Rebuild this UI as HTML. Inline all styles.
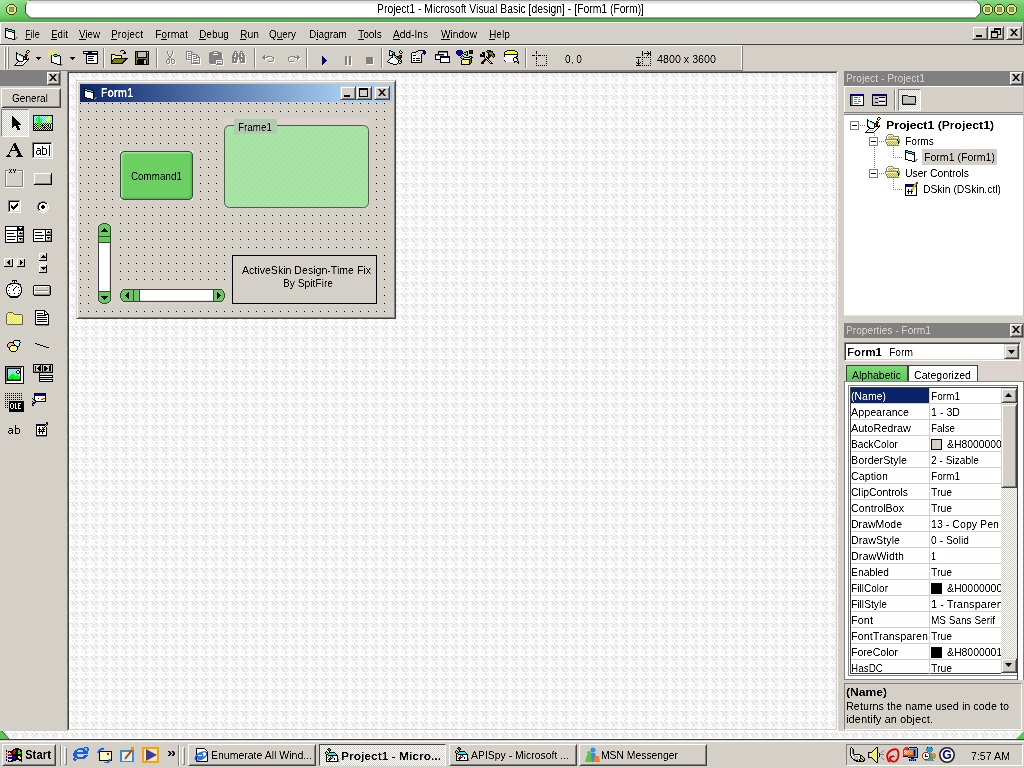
<!DOCTYPE html>
<html><head><meta charset="utf-8">
<style>
*{margin:0;padding:0;box-sizing:border-box}
html,body{width:1024px;height:768px;overflow:hidden;background:#D4D0C8;font-family:"Liberation Sans",sans-serif;font-size:11px;color:#000;position:relative}
.a{position:absolute;display:block}
.t{position:absolute;white-space:pre;filter:url(#crisp)}
</style></head>
<body>
<svg class="a" style="left:0;top:0" width="1024" height="768" shape-rendering="crispEdges"><defs>
<filter id="crisp" x="-20%" y="-60%" width="140%" height="220%"><feComponentTransfer><feFuncA type="table" tableValues="0 0 0.5 1 1"/></feComponentTransfer></filter>
<pattern id="tex" patternUnits="userSpaceOnUse" width="10" height="11"><rect width="10" height="11" fill="#FFFFFF"/><rect x='4' y='5' width='1' height='1' fill='#E2E2E2'/><rect x='4' y='6' width='1' height='1' fill='#E2E2E2'/><rect x='0' y='7' width='3' height='1' fill='#E2E2E2'/><rect x='5' y='7' width='3' height='1' fill='#E2E2E2'/><rect x='2' y='8' width='2' height='1' fill='#E2E2E2'/><rect x='5' y='8' width='2' height='1' fill='#E2E2E2'/><rect x='7' y='8' width='2' height='1' fill='#EEEEEE'/><rect x='1' y='9' width='1' height='1' fill='#E2E2E2'/><rect x='3' y='9' width='2' height='1' fill='#E2E2E2'/><rect x='6' y='9' width='3' height='1' fill='#EEEEEE'/><rect x='2' y='10' width='2' height='1' fill='#E2E2E2'/><rect x='5' y='10' width='2' height='1' fill='#EEEEEE'/><rect x='9' y='10' width='1' height='1' fill='#EEEEEE'/><rect x='3' y='0' width='2' height='1' fill='#E2E2E2'/><rect x='5' y='0' width='3' height='1' fill='#EEEEEE'/><rect x='1' y='1' width='1' height='1' fill='#EEEEEE'/><rect x='2' y='2' width='1' height='1' fill='#EEEEEE'/><rect x='5' y='2' width='2' height='1' fill='#E2E2E2'/><rect x='8' y='2' width='1' height='1' fill='#EEEEEE'/><rect x='2' y='3' width='1' height='1' fill='#EEEEEE'/><rect x='5' y='3' width='2' height='1' fill='#E2E2E2'/><rect x='8' y='3' width='1' height='1' fill='#EEEEEE'/><rect x='6' y='4' width='2' height='1' fill='#EEEEEE'/></pattern>
<pattern id="dots" patternUnits="userSpaceOnUse" width="8" height="8"><rect x="0" y="1" width="1" height="1" fill="#000"/></pattern>
<pattern id="dither" patternUnits="userSpaceOnUse" width="2" height="2"><rect width="2" height="2" fill="#D4D0C8"/><rect width="1" height="1" fill="#fff"/><rect x="1" y="1" width="1" height="1" fill="#fff"/></pattern>
<pattern id="ftex" patternUnits="userSpaceOnUse" width="6" height="6"><rect width="6" height="6" fill="#A8E4A6"/><path d="M0 5h1v1H0zM2 3h1v1H2zM4 1h1v1H4z" fill="#A0D89E"/></pattern>
<radialGradient id="tglow" cx="0" cy="0" r="1" gradientUnits="objectBoundingBox" gradientTransform="scale(1,1)"><stop offset="0" stop-color="#A8E8A0" stop-opacity="0.9"/><stop offset="1" stop-color="#A8E8A0" stop-opacity="0"/></radialGradient>
<linearGradient id="tgreen" x1="0" y1="0" x2="0" y2="1"><stop offset="0" stop-color="#8AD88A"/><stop offset="0.25" stop-color="#6CCC66"/><stop offset="0.75" stop-color="#62C65C"/><stop offset="1" stop-color="#4EA846"/></linearGradient>
<linearGradient id="bgreen" x1="0" y1="0" x2="0" y2="1"><stop offset="0" stop-color="#7ED878"/><stop offset="0.6" stop-color="#6ACE64"/><stop offset="1" stop-color="#58B852"/></linearGradient>
</defs><rect width="1024" height="768" fill="url(#tex)"/></svg>
<svg class="a" style="left:0px;top:0px;" width="1024" height="22" viewBox="0 0 1024 22" shape-rendering="crispEdges"><rect width="1024" height="22" fill="url(#tgreen)"/>
<rect width="30" height="22" fill="url(#tglow)"/>
<path d="M30 0H975L980 5V13L975 18H30L25 13V5Z" fill="#fff" stroke="#404040" stroke-width="1" shape-rendering="auto" transform="translate(0.5,0)"/>
<rect x="27" y="1" width="950" height="2" fill="#E2E2E2"/><rect x="27" y="3" width="950" height="1" fill="#F2F2F2"/>
</svg>
<svg class="a" style="left:6px;top:4px;" width="11" height="11" viewBox="0 0 11 11" shape-rendering="crispEdges"><rect x="3" y="0" width="5" height="1" fill="#38384A"/><rect x="2" y="1" width="1" height="1" fill="#38384A"/><rect x="3" y="1" width="5" height="1" fill="#FFE850"/><rect x="8" y="1" width="1" height="1" fill="#38384A"/><rect x="1" y="2" width="1" height="1" fill="#38384A"/><rect x="2" y="2" width="7" height="1" fill="#FFE850"/><rect x="9" y="2" width="1" height="1" fill="#38384A"/><rect x="0" y="3" width="1" height="1" fill="#38384A"/><rect x="1" y="3" width="2" height="1" fill="#FFE850"/><rect x="3" y="3" width="5" height="1" fill="#7878A0"/><rect x="8" y="3" width="2" height="1" fill="#FFE850"/><rect x="10" y="3" width="1" height="1" fill="#38384A"/><rect x="0" y="4" width="1" height="1" fill="#38384A"/><rect x="1" y="4" width="2" height="1" fill="#FFE850"/><rect x="3" y="4" width="1" height="1" fill="#7878A0"/><rect x="4" y="4" width="3" height="1" fill="#4CD84C"/><rect x="7" y="4" width="1" height="1" fill="#7878A0"/><rect x="8" y="4" width="2" height="1" fill="#FFE850"/><rect x="10" y="4" width="1" height="1" fill="#38384A"/><rect x="0" y="5" width="1" height="1" fill="#38384A"/><rect x="1" y="5" width="2" height="1" fill="#FFE850"/><rect x="3" y="5" width="1" height="1" fill="#7878A0"/><rect x="4" y="5" width="3" height="1" fill="#4CD84C"/><rect x="7" y="5" width="1" height="1" fill="#7878A0"/><rect x="8" y="5" width="2" height="1" fill="#FFE850"/><rect x="10" y="5" width="1" height="1" fill="#38384A"/><rect x="0" y="6" width="1" height="1" fill="#38384A"/><rect x="1" y="6" width="2" height="1" fill="#FFE850"/><rect x="3" y="6" width="1" height="1" fill="#7878A0"/><rect x="4" y="6" width="3" height="1" fill="#4CD84C"/><rect x="7" y="6" width="1" height="1" fill="#7878A0"/><rect x="8" y="6" width="2" height="1" fill="#FFE850"/><rect x="10" y="6" width="1" height="1" fill="#38384A"/><rect x="0" y="7" width="1" height="1" fill="#38384A"/><rect x="1" y="7" width="2" height="1" fill="#FFE850"/><rect x="3" y="7" width="5" height="1" fill="#7878A0"/><rect x="8" y="7" width="2" height="1" fill="#FFE850"/><rect x="10" y="7" width="1" height="1" fill="#38384A"/><rect x="1" y="8" width="1" height="1" fill="#38384A"/><rect x="2" y="8" width="7" height="1" fill="#FFE850"/><rect x="9" y="8" width="1" height="1" fill="#38384A"/><rect x="2" y="9" width="1" height="1" fill="#38384A"/><rect x="3" y="9" width="5" height="1" fill="#FFE850"/><rect x="8" y="9" width="1" height="1" fill="#38384A"/><rect x="3" y="10" width="5" height="1" fill="#38384A"/></svg>
<svg class="a" style="left:982px;top:4px;" width="11" height="11" viewBox="0 0 11 11" shape-rendering="crispEdges"><rect x="3" y="0" width="5" height="1" fill="#38384A"/><rect x="2" y="1" width="1" height="1" fill="#38384A"/><rect x="3" y="1" width="5" height="1" fill="#FFE850"/><rect x="8" y="1" width="1" height="1" fill="#38384A"/><rect x="1" y="2" width="1" height="1" fill="#38384A"/><rect x="2" y="2" width="7" height="1" fill="#FFE850"/><rect x="9" y="2" width="1" height="1" fill="#38384A"/><rect x="0" y="3" width="1" height="1" fill="#38384A"/><rect x="1" y="3" width="2" height="1" fill="#FFE850"/><rect x="3" y="3" width="5" height="1" fill="#7878A0"/><rect x="8" y="3" width="2" height="1" fill="#FFE850"/><rect x="10" y="3" width="1" height="1" fill="#38384A"/><rect x="0" y="4" width="1" height="1" fill="#38384A"/><rect x="1" y="4" width="2" height="1" fill="#FFE850"/><rect x="3" y="4" width="1" height="1" fill="#7878A0"/><rect x="4" y="4" width="3" height="1" fill="#4CD84C"/><rect x="7" y="4" width="1" height="1" fill="#7878A0"/><rect x="8" y="4" width="2" height="1" fill="#FFE850"/><rect x="10" y="4" width="1" height="1" fill="#38384A"/><rect x="0" y="5" width="1" height="1" fill="#38384A"/><rect x="1" y="5" width="2" height="1" fill="#FFE850"/><rect x="3" y="5" width="1" height="1" fill="#7878A0"/><rect x="4" y="5" width="3" height="1" fill="#4CD84C"/><rect x="7" y="5" width="1" height="1" fill="#7878A0"/><rect x="8" y="5" width="2" height="1" fill="#FFE850"/><rect x="10" y="5" width="1" height="1" fill="#38384A"/><rect x="0" y="6" width="1" height="1" fill="#38384A"/><rect x="1" y="6" width="2" height="1" fill="#FFE850"/><rect x="3" y="6" width="1" height="1" fill="#7878A0"/><rect x="4" y="6" width="3" height="1" fill="#4CD84C"/><rect x="7" y="6" width="1" height="1" fill="#7878A0"/><rect x="8" y="6" width="2" height="1" fill="#FFE850"/><rect x="10" y="6" width="1" height="1" fill="#38384A"/><rect x="0" y="7" width="1" height="1" fill="#38384A"/><rect x="1" y="7" width="2" height="1" fill="#FFE850"/><rect x="3" y="7" width="5" height="1" fill="#7878A0"/><rect x="8" y="7" width="2" height="1" fill="#FFE850"/><rect x="10" y="7" width="1" height="1" fill="#38384A"/><rect x="1" y="8" width="1" height="1" fill="#38384A"/><rect x="2" y="8" width="7" height="1" fill="#FFE850"/><rect x="9" y="8" width="1" height="1" fill="#38384A"/><rect x="2" y="9" width="1" height="1" fill="#38384A"/><rect x="3" y="9" width="5" height="1" fill="#FFE850"/><rect x="8" y="9" width="1" height="1" fill="#38384A"/><rect x="3" y="10" width="5" height="1" fill="#38384A"/></svg>
<svg class="a" style="left:994px;top:4px;" width="11" height="11" viewBox="0 0 11 11" shape-rendering="crispEdges"><rect x="3" y="0" width="5" height="1" fill="#38384A"/><rect x="2" y="1" width="1" height="1" fill="#38384A"/><rect x="3" y="1" width="5" height="1" fill="#FFE850"/><rect x="8" y="1" width="1" height="1" fill="#38384A"/><rect x="1" y="2" width="1" height="1" fill="#38384A"/><rect x="2" y="2" width="7" height="1" fill="#FFE850"/><rect x="9" y="2" width="1" height="1" fill="#38384A"/><rect x="0" y="3" width="1" height="1" fill="#38384A"/><rect x="1" y="3" width="2" height="1" fill="#FFE850"/><rect x="3" y="3" width="5" height="1" fill="#7878A0"/><rect x="8" y="3" width="2" height="1" fill="#FFE850"/><rect x="10" y="3" width="1" height="1" fill="#38384A"/><rect x="0" y="4" width="1" height="1" fill="#38384A"/><rect x="1" y="4" width="2" height="1" fill="#FFE850"/><rect x="3" y="4" width="1" height="1" fill="#7878A0"/><rect x="4" y="4" width="3" height="1" fill="#4CD84C"/><rect x="7" y="4" width="1" height="1" fill="#7878A0"/><rect x="8" y="4" width="2" height="1" fill="#FFE850"/><rect x="10" y="4" width="1" height="1" fill="#38384A"/><rect x="0" y="5" width="1" height="1" fill="#38384A"/><rect x="1" y="5" width="2" height="1" fill="#FFE850"/><rect x="3" y="5" width="1" height="1" fill="#7878A0"/><rect x="4" y="5" width="3" height="1" fill="#4CD84C"/><rect x="7" y="5" width="1" height="1" fill="#7878A0"/><rect x="8" y="5" width="2" height="1" fill="#FFE850"/><rect x="10" y="5" width="1" height="1" fill="#38384A"/><rect x="0" y="6" width="1" height="1" fill="#38384A"/><rect x="1" y="6" width="2" height="1" fill="#FFE850"/><rect x="3" y="6" width="1" height="1" fill="#7878A0"/><rect x="4" y="6" width="3" height="1" fill="#4CD84C"/><rect x="7" y="6" width="1" height="1" fill="#7878A0"/><rect x="8" y="6" width="2" height="1" fill="#FFE850"/><rect x="10" y="6" width="1" height="1" fill="#38384A"/><rect x="0" y="7" width="1" height="1" fill="#38384A"/><rect x="1" y="7" width="2" height="1" fill="#FFE850"/><rect x="3" y="7" width="5" height="1" fill="#7878A0"/><rect x="8" y="7" width="2" height="1" fill="#FFE850"/><rect x="10" y="7" width="1" height="1" fill="#38384A"/><rect x="1" y="8" width="1" height="1" fill="#38384A"/><rect x="2" y="8" width="7" height="1" fill="#FFE850"/><rect x="9" y="8" width="1" height="1" fill="#38384A"/><rect x="2" y="9" width="1" height="1" fill="#38384A"/><rect x="3" y="9" width="5" height="1" fill="#FFE850"/><rect x="8" y="9" width="1" height="1" fill="#38384A"/><rect x="3" y="10" width="5" height="1" fill="#38384A"/></svg>
<svg class="a" style="left:1006px;top:4px;" width="11" height="11" viewBox="0 0 11 11" shape-rendering="crispEdges"><rect x="3" y="0" width="5" height="1" fill="#38384A"/><rect x="2" y="1" width="1" height="1" fill="#38384A"/><rect x="3" y="1" width="5" height="1" fill="#FFE850"/><rect x="8" y="1" width="1" height="1" fill="#38384A"/><rect x="1" y="2" width="1" height="1" fill="#38384A"/><rect x="2" y="2" width="7" height="1" fill="#FFE850"/><rect x="9" y="2" width="1" height="1" fill="#38384A"/><rect x="0" y="3" width="1" height="1" fill="#38384A"/><rect x="1" y="3" width="2" height="1" fill="#FFE850"/><rect x="3" y="3" width="5" height="1" fill="#7878A0"/><rect x="8" y="3" width="2" height="1" fill="#FFE850"/><rect x="10" y="3" width="1" height="1" fill="#38384A"/><rect x="0" y="4" width="1" height="1" fill="#38384A"/><rect x="1" y="4" width="2" height="1" fill="#FFE850"/><rect x="3" y="4" width="1" height="1" fill="#7878A0"/><rect x="4" y="4" width="3" height="1" fill="#4CD84C"/><rect x="7" y="4" width="1" height="1" fill="#7878A0"/><rect x="8" y="4" width="2" height="1" fill="#FFE850"/><rect x="10" y="4" width="1" height="1" fill="#38384A"/><rect x="0" y="5" width="1" height="1" fill="#38384A"/><rect x="1" y="5" width="2" height="1" fill="#FFE850"/><rect x="3" y="5" width="1" height="1" fill="#7878A0"/><rect x="4" y="5" width="3" height="1" fill="#4CD84C"/><rect x="7" y="5" width="1" height="1" fill="#7878A0"/><rect x="8" y="5" width="2" height="1" fill="#FFE850"/><rect x="10" y="5" width="1" height="1" fill="#38384A"/><rect x="0" y="6" width="1" height="1" fill="#38384A"/><rect x="1" y="6" width="2" height="1" fill="#FFE850"/><rect x="3" y="6" width="1" height="1" fill="#7878A0"/><rect x="4" y="6" width="3" height="1" fill="#4CD84C"/><rect x="7" y="6" width="1" height="1" fill="#7878A0"/><rect x="8" y="6" width="2" height="1" fill="#FFE850"/><rect x="10" y="6" width="1" height="1" fill="#38384A"/><rect x="0" y="7" width="1" height="1" fill="#38384A"/><rect x="1" y="7" width="2" height="1" fill="#FFE850"/><rect x="3" y="7" width="5" height="1" fill="#7878A0"/><rect x="8" y="7" width="2" height="1" fill="#FFE850"/><rect x="10" y="7" width="1" height="1" fill="#38384A"/><rect x="1" y="8" width="1" height="1" fill="#38384A"/><rect x="2" y="8" width="7" height="1" fill="#FFE850"/><rect x="9" y="8" width="1" height="1" fill="#38384A"/><rect x="2" y="9" width="1" height="1" fill="#38384A"/><rect x="3" y="9" width="5" height="1" fill="#FFE850"/><rect x="8" y="9" width="1" height="1" fill="#38384A"/><rect x="3" y="10" width="5" height="1" fill="#38384A"/></svg>
<div class="t" style="left:377px;top:2.84px;font-size:12px;line-height:12px;color:#000;transform:scaleX(0.8654);transform-origin:0 0;">Project1 - Microsoft Visual Basic [design] - [Form1 (Form)]</div>
<div class="a" style="left:0px;top:22px;width:1024px;height:23px;background:#D4D0C8;border-top:1px solid #fff;border-left:1px solid #fff;border-bottom:1px solid #808080"></div>
<div class="a" style="left:0px;top:44px;width:1024px;height:1px;background:#404040"></div>
<svg class="a" style="left:5px;top:28px;" width="13" height="12" viewBox="0 0 13 12" shape-rendering="crispEdges"><rect x="0" y="0" width="3" height="1" fill="#000000"/><rect x="0" y="1" width="1" height="1" fill="#000000"/><rect x="1" y="1" width="2" height="1" fill="#00FFFF"/><rect x="3" y="1" width="4" height="1" fill="#000000"/><rect x="0" y="2" width="3" height="1" fill="#000000"/><rect x="3" y="2" width="4" height="1" fill="#00FFFF"/><rect x="7" y="2" width="3" height="1" fill="#000000"/><rect x="0" y="3" width="1" height="1" fill="#000000"/><rect x="1" y="3" width="2" height="1" fill="#FFFFFF"/><rect x="3" y="3" width="4" height="1" fill="#000000"/><rect x="7" y="3" width="2" height="1" fill="#00FFFF"/><rect x="9" y="3" width="1" height="1" fill="#000000"/><rect x="0" y="4" width="1" height="1" fill="#000000"/><rect x="1" y="4" width="6" height="1" fill="#FFFFFF"/><rect x="7" y="4" width="3" height="1" fill="#000000"/><rect x="0" y="5" width="1" height="1" fill="#000000"/><rect x="1" y="5" width="8" height="1" fill="#FFFFFF"/><rect x="9" y="5" width="1" height="1" fill="#000000"/><rect x="0" y="6" width="1" height="1" fill="#000000"/><rect x="1" y="6" width="8" height="1" fill="#FFFFFF"/><rect x="9" y="6" width="1" height="1" fill="#000000"/><rect x="0" y="7" width="1" height="1" fill="#000000"/><rect x="1" y="7" width="8" height="1" fill="#FFFFFF"/><rect x="9" y="7" width="1" height="1" fill="#000000"/><rect x="0" y="8" width="1" height="1" fill="#000000"/><rect x="1" y="8" width="8" height="1" fill="#FFFFFF"/><rect x="9" y="8" width="1" height="1" fill="#000000"/><rect x="0" y="9" width="3" height="1" fill="#000000"/><rect x="3" y="9" width="6" height="1" fill="#FFFFFF"/><rect x="9" y="9" width="1" height="1" fill="#000000"/><rect x="11" y="9" width="2" height="1" fill="#808080"/><rect x="3" y="10" width="4" height="1" fill="#000000"/><rect x="7" y="10" width="2" height="1" fill="#FFFFFF"/><rect x="9" y="10" width="1" height="1" fill="#000000"/><rect x="10" y="10" width="2" height="1" fill="#808080"/><rect x="7" y="11" width="3" height="1" fill="#000000"/><rect x="10" y="11" width="1" height="1" fill="#808080"/></svg>
<div class="t" style="left:25px;top:28.69px;font-size:11px;line-height:11px;color:#000;transform:scaleX(0.8458);transform-origin:0 0;">File</div>
<div class="t" style="left:51px;top:28.69px;font-size:11px;line-height:11px;color:#000;transform:scaleX(0.8962);transform-origin:0 0;">Edit</div>
<div class="t" style="left:79px;top:28.69px;font-size:11px;line-height:11px;color:#000;transform:scaleX(0.8877);transform-origin:0 0;">View</div>
<div class="t" style="left:111px;top:28.69px;font-size:11px;line-height:11px;color:#000;transform:scaleX(0.9343);transform-origin:0 0;">Project</div>
<div class="t" style="left:155px;top:28.69px;font-size:11px;line-height:11px;color:#000;transform:scaleX(0.9471);transform-origin:0 0;">Format</div>
<div class="t" style="left:199px;top:28.69px;font-size:11px;line-height:11px;color:#000;transform:scaleX(0.9253);transform-origin:0 0;">Debug</div>
<div class="t" style="left:240px;top:28.69px;font-size:11px;line-height:11px;color:#000;transform:scaleX(0.9412);transform-origin:0 0;">Run</div>
<div class="t" style="left:269px;top:28.69px;font-size:11px;line-height:11px;color:#000;transform:scaleX(0.9009);transform-origin:0 0;">Query</div>
<div class="t" style="left:309px;top:28.69px;font-size:11px;line-height:11px;color:#000;transform:scaleX(0.9139);transform-origin:0 0;">Diagram</div>
<div class="t" style="left:358px;top:28.69px;font-size:11px;line-height:11px;color:#000;transform:scaleX(0.9343);transform-origin:0 0;">Tools</div>
<div class="t" style="left:393px;top:28.69px;font-size:11px;line-height:11px;color:#000;transform:scaleX(0.9230);transform-origin:0 0;">Add-Ins</div>
<div class="t" style="left:441px;top:28.69px;font-size:11px;line-height:11px;color:#000;transform:scaleX(0.9201);transform-origin:0 0;">Window</div>
<div class="t" style="left:489px;top:28.69px;font-size:11px;line-height:11px;color:#000;transform:scaleX(0.9282);transform-origin:0 0;">Help</div>
<div class="a" style="left:25px;top:39px;width:6px;height:1px;background:#000"></div>
<div class="a" style="left:51px;top:39px;width:6px;height:1px;background:#000"></div>
<div class="a" style="left:79px;top:39px;width:7px;height:1px;background:#000"></div>
<div class="a" style="left:111px;top:39px;width:6px;height:1px;background:#000"></div>
<div class="a" style="left:161px;top:39px;width:6px;height:1px;background:#000"></div>
<div class="a" style="left:199px;top:39px;width:7px;height:1px;background:#000"></div>
<div class="a" style="left:240px;top:39px;width:6px;height:1px;background:#000"></div>
<div class="a" style="left:277px;top:39px;width:6px;height:1px;background:#000"></div>
<div class="a" style="left:316px;top:39px;width:2px;height:1px;background:#000"></div>
<div class="a" style="left:358px;top:39px;width:6px;height:1px;background:#000"></div>
<div class="a" style="left:393px;top:39px;width:7px;height:1px;background:#000"></div>
<div class="a" style="left:441px;top:39px;width:9px;height:1px;background:#000"></div>
<div class="a" style="left:489px;top:39px;width:6px;height:1px;background:#000"></div>
<div class="a" style="left:972px;top:26px;width:16px;height:14px;background:#D4D0C8;border-style:solid;border-width:1px;border-color:#D4D0C8 #404040 #404040 #D4D0C8;box-shadow:inset 1px 1px 0 #FFFFFF,inset -1px -1px 0 #808080"></div>
<div class="a" style="left:988px;top:26px;width:16px;height:14px;background:#D4D0C8;border-style:solid;border-width:1px;border-color:#D4D0C8 #404040 #404040 #D4D0C8;box-shadow:inset 1px 1px 0 #FFFFFF,inset -1px -1px 0 #808080"></div>
<div class="a" style="left:1006px;top:26px;width:16px;height:14px;background:#D4D0C8;border-style:solid;border-width:1px;border-color:#D4D0C8 #404040 #404040 #D4D0C8;box-shadow:inset 1px 1px 0 #FFFFFF,inset -1px -1px 0 #808080"></div>
<div class="a" style="left:976px;top:35px;width:6px;height:2px;background:#000"></div>
<svg class="a" style="left:991px;top:28px;" width="10" height="10" viewBox="0 0 10 10" shape-rendering="crispEdges"><rect x="3" y="0" width="6" height="6" fill="none" stroke="#000" transform="translate(0.5,0.5)"/><rect x="3" y="0" width="6" height="2" fill="#000"/><rect x="0" y="3" width="6" height="6" fill="#D4D0C8" stroke="#000" transform="translate(0.5,0.5)"/><rect x="0" y="3" width="7" height="2" fill="#000"/></svg>
<svg class="a" style="left:1010px;top:29px;" width="9" height="8" viewBox="0 0 9 8" shape-rendering="crispEdges"><path d="M0 0h2l2 2.5L6 0h2L5 3.5 8 7H6L4 4.5 2 7H0l3-3.5z" fill="#000" shape-rendering="auto"/></svg>
<div class="a" style="left:1023px;top:22px;width:1px;height:23px;background:#808080"></div>
<div class="a" style="left:0px;top:45px;width:743px;height:26px;background:#D4D0C8;border-top:1px solid #fff;border-right:1px solid #808080;border-bottom:1px solid #808080;box-shadow:inset -1px 0 0 #fff"></div>
<div class="a" style="left:743px;top:45px;width:281px;height:26px;background:#D4D0C8"></div>
<div class="a" style="left:4px;top:47px;width:2px;height:22px;border-left:1px solid #fff;border-right:1px solid #808080"></div>
<div class="a" style="left:7px;top:47px;width:2px;height:22px;border-left:1px solid #fff;border-right:1px solid #808080"></div>
<div class="a" style="left:103px;top:48px;width:2px;height:20px;border-left:1px solid #808080;border-right:1px solid #fff"></div>
<div class="a" style="left:156px;top:48px;width:2px;height:20px;border-left:1px solid #808080;border-right:1px solid #fff"></div>
<div class="a" style="left:254px;top:48px;width:2px;height:20px;border-left:1px solid #808080;border-right:1px solid #fff"></div>
<div class="a" style="left:306px;top:48px;width:2px;height:20px;border-left:1px solid #808080;border-right:1px solid #fff"></div>
<div class="a" style="left:381px;top:48px;width:2px;height:20px;border-left:1px solid #808080;border-right:1px solid #fff"></div>
<div class="a" style="left:525px;top:48px;width:2px;height:20px;border-left:1px solid #808080;border-right:1px solid #fff"></div>
<svg class="a" style="left:14px;top:50px;" width="16" height="16" viewBox="0 0 16 16" shape-rendering="crispEdges"><rect x="13" y="0" width="2" height="1" fill="#000000"/><rect x="12" y="1" width="1" height="1" fill="#000000"/><rect x="13" y="1" width="2" height="1" fill="#FFFF00"/><rect x="15" y="1" width="1" height="1" fill="#000000"/><rect x="2" y="2" width="1" height="1" fill="#000000"/><rect x="12" y="2" width="1" height="1" fill="#000000"/><rect x="13" y="2" width="1" height="1" fill="#FFFF00"/><rect x="14" y="2" width="1" height="1" fill="#000000"/><rect x="2" y="3" width="2" height="1" fill="#000000"/><rect x="13" y="3" width="1" height="1" fill="#000000"/><rect x="2" y="4" width="1" height="1" fill="#000000"/><rect x="3" y="4" width="2" height="1" fill="#00FFFF"/><rect x="5" y="4" width="2" height="1" fill="#000000"/><rect x="11" y="4" width="2" height="1" fill="#000000"/><rect x="2" y="5" width="1" height="1" fill="#000000"/><rect x="3" y="5" width="2" height="1" fill="#FFFFFF"/><rect x="5" y="5" width="2" height="1" fill="#00FFFF"/><rect x="7" y="5" width="2" height="1" fill="#000000"/><rect x="11" y="5" width="1" height="1" fill="#000000"/><rect x="12" y="5" width="1" height="1" fill="#FF0000"/><rect x="13" y="5" width="1" height="1" fill="#000000"/><rect x="2" y="6" width="1" height="1" fill="#000000"/><rect x="3" y="6" width="4" height="1" fill="#FFFFFF"/><rect x="7" y="6" width="2" height="1" fill="#00FFFF"/><rect x="9" y="6" width="2" height="1" fill="#000000"/><rect x="11" y="6" width="1" height="1" fill="#FF0000"/><rect x="12" y="6" width="1" height="1" fill="#000000"/><rect x="2" y="7" width="1" height="1" fill="#000000"/><rect x="3" y="7" width="6" height="1" fill="#FFFFFF"/><rect x="9" y="7" width="1" height="1" fill="#000000"/><rect x="10" y="7" width="1" height="1" fill="#FF0000"/><rect x="11" y="7" width="2" height="1" fill="#000000"/><rect x="2" y="8" width="1" height="1" fill="#000000"/><rect x="3" y="8" width="6" height="1" fill="#FFFFFF"/><rect x="9" y="8" width="1" height="1" fill="#000000"/><rect x="10" y="8" width="1" height="1" fill="#FFFF00"/><rect x="11" y="8" width="2" height="1" fill="#000000"/><rect x="13" y="8" width="1" height="1" fill="#FFFF00"/><rect x="14" y="8" width="1" height="1" fill="#000000"/><rect x="2" y="9" width="2" height="1" fill="#000000"/><rect x="4" y="9" width="5" height="1" fill="#FFFFFF"/><rect x="9" y="9" width="6" height="1" fill="#000000"/><rect x="3" y="10" width="2" height="1" fill="#000000"/><rect x="5" y="10" width="4" height="1" fill="#FFFFFF"/><rect x="9" y="10" width="1" height="1" fill="#000000"/><rect x="10" y="10" width="3" height="1" fill="#FFFFFF"/><rect x="13" y="10" width="1" height="1" fill="#000000"/><rect x="4" y="11" width="5" height="1" fill="#000000"/><rect x="9" y="11" width="3" height="1" fill="#FFFFFF"/><rect x="12" y="11" width="1" height="1" fill="#000000"/><rect x="3" y="12" width="1" height="1" fill="#000000"/><rect x="4" y="12" width="7" height="1" fill="#FFFFFF"/><rect x="11" y="12" width="1" height="1" fill="#000000"/><rect x="2" y="13" width="1" height="1" fill="#000000"/><rect x="3" y="13" width="2" height="1" fill="#FFFFFF"/><rect x="5" y="13" width="1" height="1" fill="#808080"/><rect x="6" y="13" width="1" height="1" fill="#FFFFFF"/><rect x="7" y="13" width="1" height="1" fill="#808080"/><rect x="8" y="13" width="2" height="1" fill="#FFFFFF"/><rect x="10" y="13" width="1" height="1" fill="#000000"/><rect x="1" y="14" width="1" height="1" fill="#000000"/><rect x="2" y="14" width="7" height="1" fill="#FFFFFF"/><rect x="9" y="14" width="1" height="1" fill="#000000"/><rect x="0" y="15" width="9" height="1" fill="#000000"/></svg>
<svg class="a" style="left:36px;top:57px;" width="5" height="3" viewBox="0 0 5 3" shape-rendering="crispEdges"><rect x="0" y="0" width="5" height="1" fill="#000000"/><rect x="1" y="1" width="3" height="1" fill="#000000"/><rect x="2" y="2" width="1" height="1" fill="#000000"/></svg>
<svg class="a" style="left:70px;top:57px;" width="5" height="3" viewBox="0 0 5 3" shape-rendering="crispEdges"><rect x="0" y="0" width="5" height="1" fill="#000000"/><rect x="1" y="1" width="3" height="1" fill="#000000"/><rect x="2" y="2" width="1" height="1" fill="#000000"/></svg>
<svg class="a" style="left:48px;top:50px;" width="16" height="16" viewBox="0 0 16 16" shape-rendering="crispEdges"><rect x="0" y="0" width="1" height="1" fill="#FFFF00"/><rect x="4" y="0" width="1" height="1" fill="#FFFF00"/><rect x="8" y="0" width="1" height="1" fill="#FFFF00"/><rect x="1" y="1" width="1" height="1" fill="#FFFF00"/><rect x="4" y="1" width="1" height="1" fill="#FFFF00"/><rect x="7" y="1" width="1" height="1" fill="#FFFF00"/><rect x="2" y="2" width="1" height="1" fill="#FFFF00"/><rect x="4" y="2" width="1" height="1" fill="#FFFF00"/><rect x="6" y="2" width="1" height="1" fill="#FFFF00"/><rect x="0" y="3" width="2" height="1" fill="#FFFF00"/><rect x="4" y="3" width="1" height="1" fill="#FFFFFF"/><rect x="5" y="3" width="1" height="1" fill="#FFFF00"/><rect x="2" y="4" width="1" height="1" fill="#FFFF00"/><rect x="4" y="4" width="1" height="1" fill="#FFFF00"/><rect x="5" y="4" width="1" height="1" fill="#00FFFF"/><rect x="6" y="4" width="3" height="1" fill="#000000"/><rect x="1" y="5" width="1" height="1" fill="#FFFF00"/><rect x="3" y="5" width="1" height="1" fill="#000000"/><rect x="4" y="5" width="1" height="1" fill="#FFFF00"/><rect x="5" y="5" width="1" height="1" fill="#000000"/><rect x="6" y="5" width="3" height="1" fill="#00FFFF"/><rect x="9" y="5" width="3" height="1" fill="#000000"/><rect x="0" y="6" width="1" height="1" fill="#FFFF00"/><rect x="3" y="6" width="1" height="1" fill="#000000"/><rect x="4" y="6" width="2" height="1" fill="#FFFFFF"/><rect x="6" y="6" width="3" height="1" fill="#000000"/><rect x="9" y="6" width="3" height="1" fill="#00FFFF"/><rect x="12" y="6" width="1" height="1" fill="#000000"/><rect x="3" y="7" width="1" height="1" fill="#000000"/><rect x="4" y="7" width="8" height="1" fill="#FFFFFF"/><rect x="12" y="7" width="1" height="1" fill="#000000"/><rect x="3" y="8" width="1" height="1" fill="#000000"/><rect x="4" y="8" width="8" height="1" fill="#FFFFFF"/><rect x="12" y="8" width="1" height="1" fill="#000000"/><rect x="3" y="9" width="1" height="1" fill="#000000"/><rect x="4" y="9" width="8" height="1" fill="#FFFFFF"/><rect x="12" y="9" width="1" height="1" fill="#000000"/><rect x="3" y="10" width="1" height="1" fill="#000000"/><rect x="4" y="10" width="8" height="1" fill="#FFFFFF"/><rect x="12" y="10" width="1" height="1" fill="#000000"/><rect x="3" y="11" width="1" height="1" fill="#000000"/><rect x="4" y="11" width="8" height="1" fill="#FFFFFF"/><rect x="12" y="11" width="1" height="1" fill="#000000"/><rect x="3" y="12" width="3" height="1" fill="#000000"/><rect x="6" y="12" width="6" height="1" fill="#FFFFFF"/><rect x="12" y="12" width="1" height="1" fill="#000000"/><rect x="6" y="13" width="3" height="1" fill="#000000"/><rect x="9" y="13" width="3" height="1" fill="#FFFFFF"/><rect x="12" y="13" width="1" height="1" fill="#000000"/><rect x="9" y="14" width="4" height="1" fill="#000000"/><rect x="13" y="14" width="2" height="1" fill="#808080"/><rect x="12" y="15" width="2" height="1" fill="#808080"/></svg>
<svg class="a" style="left:83px;top:51px;" width="15" height="13" viewBox="0 0 15 13" shape-rendering="crispEdges"><rect x="0" y="0" width="15" height="1" fill="#000000"/><rect x="0" y="1" width="1" height="1" fill="#000000"/><rect x="1" y="1" width="4" height="1" fill="#FFFFFF"/><rect x="5" y="1" width="4" height="1" fill="#000080"/><rect x="9" y="1" width="5" height="1" fill="#FFFFFF"/><rect x="14" y="1" width="1" height="1" fill="#000000"/><rect x="0" y="2" width="15" height="1" fill="#000000"/><rect x="3" y="3" width="1" height="1" fill="#000000"/><rect x="4" y="3" width="10" height="1" fill="#000080"/><rect x="14" y="3" width="1" height="1" fill="#000000"/><rect x="3" y="4" width="1" height="1" fill="#000000"/><rect x="4" y="4" width="10" height="1" fill="#FFFFFF"/><rect x="14" y="4" width="1" height="1" fill="#000000"/><rect x="3" y="5" width="1" height="1" fill="#000000"/><rect x="4" y="5" width="1" height="1" fill="#FFFFFF"/><rect x="5" y="5" width="6" height="1" fill="#000000"/><rect x="11" y="5" width="3" height="1" fill="#FFFFFF"/><rect x="14" y="5" width="1" height="1" fill="#000000"/><rect x="3" y="6" width="1" height="1" fill="#000000"/><rect x="4" y="6" width="10" height="1" fill="#FFFFFF"/><rect x="14" y="6" width="1" height="1" fill="#000000"/><rect x="3" y="7" width="1" height="1" fill="#000000"/><rect x="4" y="7" width="1" height="1" fill="#FFFFFF"/><rect x="5" y="7" width="5" height="1" fill="#000000"/><rect x="10" y="7" width="4" height="1" fill="#FFFFFF"/><rect x="14" y="7" width="1" height="1" fill="#000000"/><rect x="3" y="8" width="1" height="1" fill="#000000"/><rect x="4" y="8" width="10" height="1" fill="#FFFFFF"/><rect x="14" y="8" width="1" height="1" fill="#000000"/><rect x="3" y="9" width="1" height="1" fill="#000000"/><rect x="4" y="9" width="1" height="1" fill="#FFFFFF"/><rect x="5" y="9" width="6" height="1" fill="#000000"/><rect x="11" y="9" width="3" height="1" fill="#FFFFFF"/><rect x="14" y="9" width="1" height="1" fill="#000000"/><rect x="3" y="10" width="1" height="1" fill="#000000"/><rect x="4" y="10" width="10" height="1" fill="#FFFFFF"/><rect x="14" y="10" width="1" height="1" fill="#000000"/><rect x="3" y="11" width="1" height="1" fill="#000000"/><rect x="4" y="11" width="10" height="1" fill="#FFFFFF"/><rect x="14" y="11" width="1" height="1" fill="#000000"/><rect x="3" y="12" width="12" height="1" fill="#000000"/></svg>
<svg class="a" style="left:111px;top:50px;" width="17" height="14" viewBox="0 0 17 14" shape-rendering="crispEdges"><rect x="10" y="0" width="3" height="1" fill="#000000"/><rect x="9" y="1" width="1" height="1" fill="#000000"/><rect x="13" y="1" width="1" height="1" fill="#000000"/><rect x="13" y="2" width="2" height="1" fill="#000000"/><rect x="12" y="3" width="3" height="1" fill="#000000"/><rect x="0" y="4" width="4" height="1" fill="#000000"/><rect x="0" y="5" width="1" height="1" fill="#000000"/><rect x="1" y="5" width="1" height="1" fill="#FFFF00"/><rect x="2" y="5" width="1" height="1" fill="#FFFFFF"/><rect x="3" y="5" width="1" height="1" fill="#FFFF00"/><rect x="4" y="5" width="7" height="1" fill="#000000"/><rect x="0" y="6" width="1" height="1" fill="#000000"/><rect x="1" y="6" width="1" height="1" fill="#FFFFFF"/><rect x="2" y="6" width="1" height="1" fill="#FFFF00"/><rect x="3" y="6" width="1" height="1" fill="#FFFFFF"/><rect x="4" y="6" width="1" height="1" fill="#FFFF00"/><rect x="5" y="6" width="1" height="1" fill="#FFFFFF"/><rect x="6" y="6" width="1" height="1" fill="#FFFF00"/><rect x="7" y="6" width="1" height="1" fill="#FFFFFF"/><rect x="8" y="6" width="1" height="1" fill="#FFFF00"/><rect x="9" y="6" width="1" height="1" fill="#FFFFFF"/><rect x="10" y="6" width="1" height="1" fill="#000000"/><rect x="0" y="7" width="1" height="1" fill="#000000"/><rect x="1" y="7" width="1" height="1" fill="#FFFF00"/><rect x="2" y="7" width="1" height="1" fill="#FFFFFF"/><rect x="3" y="7" width="1" height="1" fill="#FFFF00"/><rect x="4" y="7" width="1" height="1" fill="#FFFFFF"/><rect x="5" y="7" width="1" height="1" fill="#FFFF00"/><rect x="6" y="7" width="1" height="1" fill="#FFFFFF"/><rect x="7" y="7" width="1" height="1" fill="#FFFF00"/><rect x="8" y="7" width="1" height="1" fill="#FFFFFF"/><rect x="9" y="7" width="1" height="1" fill="#FFFF00"/><rect x="10" y="7" width="1" height="1" fill="#000000"/><rect x="0" y="8" width="1" height="1" fill="#000000"/><rect x="1" y="8" width="1" height="1" fill="#FFFFFF"/><rect x="2" y="8" width="1" height="1" fill="#FFFF00"/><rect x="3" y="8" width="14" height="1" fill="#000000"/><rect x="0" y="9" width="1" height="1" fill="#000000"/><rect x="1" y="9" width="1" height="1" fill="#FFFF00"/><rect x="2" y="9" width="1" height="1" fill="#000000"/><rect x="3" y="9" width="11" height="1" fill="#808000"/><rect x="14" y="9" width="2" height="1" fill="#000000"/><rect x="0" y="10" width="2" height="1" fill="#000000"/><rect x="2" y="10" width="11" height="1" fill="#808000"/><rect x="13" y="10" width="2" height="1" fill="#000000"/><rect x="0" y="11" width="2" height="1" fill="#000000"/><rect x="2" y="11" width="10" height="1" fill="#808000"/><rect x="12" y="11" width="2" height="1" fill="#000000"/><rect x="0" y="12" width="1" height="1" fill="#000000"/><rect x="1" y="12" width="10" height="1" fill="#808000"/><rect x="11" y="12" width="2" height="1" fill="#000000"/><rect x="0" y="13" width="12" height="1" fill="#000000"/></svg>
<svg class="a" style="left:135px;top:51px;" width="14" height="14" viewBox="0 0 14 14" shape-rendering="crispEdges"><rect x="0" y="0" width="14" height="1" fill="#000000"/><rect x="0" y="1" width="1" height="1" fill="#000000"/><rect x="1" y="1" width="1" height="1" fill="#808000"/><rect x="2" y="1" width="1" height="1" fill="#000000"/><rect x="3" y="1" width="8" height="1" fill="#C0C0C0"/><rect x="11" y="1" width="1" height="1" fill="#000000"/><rect x="12" y="1" width="1" height="1" fill="#FFFFFF"/><rect x="13" y="1" width="1" height="1" fill="#000000"/><rect x="0" y="2" width="1" height="1" fill="#000000"/><rect x="1" y="2" width="1" height="1" fill="#808000"/><rect x="2" y="2" width="1" height="1" fill="#000000"/><rect x="3" y="2" width="8" height="1" fill="#C0C0C0"/><rect x="11" y="2" width="1" height="1" fill="#000000"/><rect x="12" y="2" width="1" height="1" fill="#808000"/><rect x="13" y="2" width="1" height="1" fill="#000000"/><rect x="0" y="3" width="1" height="1" fill="#000000"/><rect x="1" y="3" width="1" height="1" fill="#808000"/><rect x="2" y="3" width="1" height="1" fill="#000000"/><rect x="3" y="3" width="8" height="1" fill="#C0C0C0"/><rect x="11" y="3" width="1" height="1" fill="#000000"/><rect x="12" y="3" width="1" height="1" fill="#808000"/><rect x="13" y="3" width="1" height="1" fill="#000000"/><rect x="0" y="4" width="1" height="1" fill="#000000"/><rect x="1" y="4" width="1" height="1" fill="#808000"/><rect x="2" y="4" width="1" height="1" fill="#000000"/><rect x="3" y="4" width="8" height="1" fill="#C0C0C0"/><rect x="11" y="4" width="1" height="1" fill="#000000"/><rect x="12" y="4" width="1" height="1" fill="#808000"/><rect x="13" y="4" width="1" height="1" fill="#000000"/><rect x="0" y="5" width="1" height="1" fill="#000000"/><rect x="1" y="5" width="1" height="1" fill="#808000"/><rect x="2" y="5" width="1" height="1" fill="#000000"/><rect x="3" y="5" width="8" height="1" fill="#C0C0C0"/><rect x="11" y="5" width="1" height="1" fill="#000000"/><rect x="12" y="5" width="1" height="1" fill="#808000"/><rect x="13" y="5" width="1" height="1" fill="#000000"/><rect x="0" y="6" width="1" height="1" fill="#000000"/><rect x="1" y="6" width="1" height="1" fill="#808000"/><rect x="2" y="6" width="10" height="1" fill="#000000"/><rect x="12" y="6" width="1" height="1" fill="#808000"/><rect x="13" y="6" width="1" height="1" fill="#000000"/><rect x="0" y="7" width="1" height="1" fill="#000000"/><rect x="1" y="7" width="12" height="1" fill="#808000"/><rect x="13" y="7" width="1" height="1" fill="#000000"/><rect x="0" y="8" width="1" height="1" fill="#000000"/><rect x="1" y="8" width="2" height="1" fill="#808000"/><rect x="3" y="8" width="8" height="1" fill="#000000"/><rect x="11" y="8" width="2" height="1" fill="#808000"/><rect x="13" y="8" width="1" height="1" fill="#000000"/><rect x="0" y="9" width="1" height="1" fill="#000000"/><rect x="1" y="9" width="1" height="1" fill="#808000"/><rect x="2" y="9" width="7" height="1" fill="#000000"/><rect x="9" y="9" width="2" height="1" fill="#C0C0C0"/><rect x="11" y="9" width="1" height="1" fill="#000000"/><rect x="12" y="9" width="1" height="1" fill="#808000"/><rect x="13" y="9" width="1" height="1" fill="#000000"/><rect x="0" y="10" width="1" height="1" fill="#000000"/><rect x="1" y="10" width="1" height="1" fill="#808000"/><rect x="2" y="10" width="7" height="1" fill="#000000"/><rect x="9" y="10" width="2" height="1" fill="#C0C0C0"/><rect x="11" y="10" width="1" height="1" fill="#000000"/><rect x="12" y="10" width="1" height="1" fill="#808000"/><rect x="13" y="10" width="1" height="1" fill="#000000"/><rect x="0" y="11" width="1" height="1" fill="#000000"/><rect x="1" y="11" width="1" height="1" fill="#808000"/><rect x="2" y="11" width="7" height="1" fill="#000000"/><rect x="9" y="11" width="2" height="1" fill="#C0C0C0"/><rect x="11" y="11" width="1" height="1" fill="#000000"/><rect x="12" y="11" width="1" height="1" fill="#808000"/><rect x="13" y="11" width="1" height="1" fill="#000000"/><rect x="0" y="12" width="1" height="1" fill="#000000"/><rect x="1" y="12" width="1" height="1" fill="#808000"/><rect x="2" y="12" width="7" height="1" fill="#000000"/><rect x="9" y="12" width="2" height="1" fill="#C0C0C0"/><rect x="11" y="12" width="1" height="1" fill="#000000"/><rect x="12" y="12" width="1" height="1" fill="#808000"/><rect x="13" y="12" width="1" height="1" fill="#000000"/><rect x="0" y="13" width="14" height="1" fill="#000000"/></svg>
<svg class="a" style="left:167px;top:52px;" width="9" height="13" viewBox="0 0 9 13" shape-rendering="crispEdges"><rect x="1" y="0" width="1" height="1" fill="#FFFFFF"/><rect x="6" y="0" width="1" height="1" fill="#FFFFFF"/><rect x="1" y="1" width="1" height="1" fill="#FFFFFF"/><rect x="6" y="1" width="1" height="1" fill="#FFFFFF"/><rect x="1" y="2" width="1" height="1" fill="#FFFFFF"/><rect x="6" y="2" width="1" height="1" fill="#FFFFFF"/><rect x="2" y="3" width="1" height="1" fill="#FFFFFF"/><rect x="5" y="3" width="1" height="1" fill="#FFFFFF"/><rect x="2" y="4" width="1" height="1" fill="#FFFFFF"/><rect x="5" y="4" width="1" height="1" fill="#FFFFFF"/><rect x="3" y="5" width="2" height="1" fill="#FFFFFF"/><rect x="3" y="6" width="2" height="1" fill="#FFFFFF"/><rect x="2" y="7" width="1" height="1" fill="#FFFFFF"/><rect x="5" y="7" width="1" height="1" fill="#FFFFFF"/><rect x="1" y="8" width="3" height="1" fill="#FFFFFF"/><rect x="5" y="8" width="3" height="1" fill="#FFFFFF"/><rect x="0" y="9" width="1" height="1" fill="#FFFFFF"/><rect x="3" y="9" width="1" height="1" fill="#FFFFFF"/><rect x="5" y="9" width="1" height="1" fill="#FFFFFF"/><rect x="8" y="9" width="1" height="1" fill="#FFFFFF"/><rect x="0" y="10" width="1" height="1" fill="#FFFFFF"/><rect x="3" y="10" width="1" height="1" fill="#FFFFFF"/><rect x="5" y="10" width="1" height="1" fill="#FFFFFF"/><rect x="8" y="10" width="1" height="1" fill="#FFFFFF"/><rect x="0" y="11" width="1" height="1" fill="#FFFFFF"/><rect x="3" y="11" width="1" height="1" fill="#FFFFFF"/><rect x="5" y="11" width="1" height="1" fill="#FFFFFF"/><rect x="8" y="11" width="1" height="1" fill="#FFFFFF"/><rect x="1" y="12" width="2" height="1" fill="#FFFFFF"/><rect x="6" y="12" width="2" height="1" fill="#FFFFFF"/></svg>
<svg class="a" style="left:166px;top:51px;" width="9" height="13" viewBox="0 0 9 13" shape-rendering="crispEdges"><rect x="1" y="0" width="1" height="1" fill="#808080"/><rect x="6" y="0" width="1" height="1" fill="#808080"/><rect x="1" y="1" width="1" height="1" fill="#808080"/><rect x="6" y="1" width="1" height="1" fill="#808080"/><rect x="1" y="2" width="1" height="1" fill="#808080"/><rect x="6" y="2" width="1" height="1" fill="#808080"/><rect x="2" y="3" width="1" height="1" fill="#808080"/><rect x="5" y="3" width="1" height="1" fill="#808080"/><rect x="2" y="4" width="1" height="1" fill="#808080"/><rect x="5" y="4" width="1" height="1" fill="#808080"/><rect x="3" y="5" width="2" height="1" fill="#808080"/><rect x="3" y="6" width="2" height="1" fill="#808080"/><rect x="2" y="7" width="1" height="1" fill="#808080"/><rect x="5" y="7" width="1" height="1" fill="#808080"/><rect x="1" y="8" width="3" height="1" fill="#808080"/><rect x="5" y="8" width="3" height="1" fill="#808080"/><rect x="0" y="9" width="1" height="1" fill="#808080"/><rect x="3" y="9" width="1" height="1" fill="#808080"/><rect x="5" y="9" width="1" height="1" fill="#808080"/><rect x="8" y="9" width="1" height="1" fill="#808080"/><rect x="0" y="10" width="1" height="1" fill="#808080"/><rect x="3" y="10" width="1" height="1" fill="#808080"/><rect x="5" y="10" width="1" height="1" fill="#808080"/><rect x="8" y="10" width="1" height="1" fill="#808080"/><rect x="0" y="11" width="1" height="1" fill="#808080"/><rect x="3" y="11" width="1" height="1" fill="#808080"/><rect x="5" y="11" width="1" height="1" fill="#808080"/><rect x="8" y="11" width="1" height="1" fill="#808080"/><rect x="1" y="12" width="2" height="1" fill="#808080"/><rect x="6" y="12" width="2" height="1" fill="#808080"/></svg>
<svg class="a" style="left:187px;top:52px;" width="14" height="13" viewBox="0 0 14 13" shape-rendering="crispEdges"><rect x="0" y="0" width="6" height="1" fill="#FFFFFF"/><rect x="0" y="1" width="1" height="1" fill="#FFFFFF"/><rect x="5" y="1" width="2" height="1" fill="#FFFFFF"/><rect x="0" y="2" width="1" height="1" fill="#FFFFFF"/><rect x="2" y="2" width="2" height="1" fill="#FFFFFF"/><rect x="5" y="2" width="1" height="1" fill="#FFFFFF"/><rect x="7" y="2" width="1" height="1" fill="#FFFFFF"/><rect x="0" y="3" width="1" height="1" fill="#FFFFFF"/><rect x="5" y="3" width="6" height="1" fill="#FFFFFF"/><rect x="0" y="4" width="1" height="1" fill="#FFFFFF"/><rect x="2" y="4" width="4" height="1" fill="#FFFFFF"/><rect x="10" y="4" width="2" height="1" fill="#FFFFFF"/><rect x="0" y="5" width="1" height="1" fill="#FFFFFF"/><rect x="5" y="5" width="1" height="1" fill="#FFFFFF"/><rect x="7" y="5" width="2" height="1" fill="#FFFFFF"/><rect x="10" y="5" width="1" height="1" fill="#FFFFFF"/><rect x="12" y="5" width="1" height="1" fill="#FFFFFF"/><rect x="0" y="6" width="1" height="1" fill="#FFFFFF"/><rect x="2" y="6" width="2" height="1" fill="#FFFFFF"/><rect x="5" y="6" width="1" height="1" fill="#FFFFFF"/><rect x="10" y="6" width="4" height="1" fill="#FFFFFF"/><rect x="0" y="7" width="1" height="1" fill="#FFFFFF"/><rect x="5" y="7" width="1" height="1" fill="#FFFFFF"/><rect x="7" y="7" width="4" height="1" fill="#FFFFFF"/><rect x="13" y="7" width="1" height="1" fill="#FFFFFF"/><rect x="0" y="8" width="6" height="1" fill="#FFFFFF"/><rect x="13" y="8" width="1" height="1" fill="#FFFFFF"/><rect x="5" y="9" width="1" height="1" fill="#FFFFFF"/><rect x="7" y="9" width="5" height="1" fill="#FFFFFF"/><rect x="13" y="9" width="1" height="1" fill="#FFFFFF"/><rect x="5" y="10" width="1" height="1" fill="#FFFFFF"/><rect x="13" y="10" width="1" height="1" fill="#FFFFFF"/><rect x="5" y="11" width="1" height="1" fill="#FFFFFF"/><rect x="7" y="11" width="5" height="1" fill="#FFFFFF"/><rect x="13" y="11" width="1" height="1" fill="#FFFFFF"/><rect x="5" y="12" width="9" height="1" fill="#FFFFFF"/></svg>
<svg class="a" style="left:186px;top:51px;" width="14" height="13" viewBox="0 0 14 13" shape-rendering="crispEdges"><rect x="0" y="0" width="6" height="1" fill="#808080"/><rect x="0" y="1" width="1" height="1" fill="#808080"/><rect x="5" y="1" width="2" height="1" fill="#808080"/><rect x="0" y="2" width="1" height="1" fill="#808080"/><rect x="2" y="2" width="2" height="1" fill="#808080"/><rect x="5" y="2" width="1" height="1" fill="#808080"/><rect x="7" y="2" width="1" height="1" fill="#808080"/><rect x="0" y="3" width="1" height="1" fill="#808080"/><rect x="5" y="3" width="6" height="1" fill="#808080"/><rect x="0" y="4" width="1" height="1" fill="#808080"/><rect x="2" y="4" width="4" height="1" fill="#808080"/><rect x="10" y="4" width="2" height="1" fill="#808080"/><rect x="0" y="5" width="1" height="1" fill="#808080"/><rect x="5" y="5" width="1" height="1" fill="#808080"/><rect x="7" y="5" width="2" height="1" fill="#808080"/><rect x="10" y="5" width="1" height="1" fill="#808080"/><rect x="12" y="5" width="1" height="1" fill="#808080"/><rect x="0" y="6" width="1" height="1" fill="#808080"/><rect x="2" y="6" width="2" height="1" fill="#808080"/><rect x="5" y="6" width="1" height="1" fill="#808080"/><rect x="10" y="6" width="4" height="1" fill="#808080"/><rect x="0" y="7" width="1" height="1" fill="#808080"/><rect x="5" y="7" width="1" height="1" fill="#808080"/><rect x="7" y="7" width="4" height="1" fill="#808080"/><rect x="13" y="7" width="1" height="1" fill="#808080"/><rect x="0" y="8" width="6" height="1" fill="#808080"/><rect x="13" y="8" width="1" height="1" fill="#808080"/><rect x="5" y="9" width="1" height="1" fill="#808080"/><rect x="7" y="9" width="5" height="1" fill="#808080"/><rect x="13" y="9" width="1" height="1" fill="#808080"/><rect x="5" y="10" width="1" height="1" fill="#808080"/><rect x="13" y="10" width="1" height="1" fill="#808080"/><rect x="5" y="11" width="1" height="1" fill="#808080"/><rect x="7" y="11" width="5" height="1" fill="#808080"/><rect x="13" y="11" width="1" height="1" fill="#808080"/><rect x="5" y="12" width="9" height="1" fill="#808080"/></svg>
<svg class="a" style="left:210px;top:52px;" width="14" height="14" viewBox="0 0 14 14" shape-rendering="crispEdges"><rect x="4" y="0" width="5" height="1" fill="#FFFFFF"/><rect x="1" y="1" width="4" height="1" fill="#FFFFFF"/><rect x="8" y="1" width="4" height="1" fill="#FFFFFF"/><rect x="0" y="2" width="13" height="1" fill="#FFFFFF"/><rect x="0" y="3" width="4" height="1" fill="#FFFFFF"/><rect x="9" y="3" width="4" height="1" fill="#FFFFFF"/><rect x="0" y="4" width="13" height="1" fill="#FFFFFF"/><rect x="0" y="5" width="13" height="1" fill="#FFFFFF"/><rect x="0" y="6" width="13" height="1" fill="#FFFFFF"/><rect x="0" y="7" width="13" height="1" fill="#FFFFFF"/><rect x="0" y="8" width="14" height="1" fill="#FFFFFF"/><rect x="0" y="9" width="7" height="1" fill="#FFFFFF"/><rect x="13" y="9" width="1" height="1" fill="#FFFFFF"/><rect x="0" y="10" width="7" height="1" fill="#FFFFFF"/><rect x="8" y="10" width="4" height="1" fill="#FFFFFF"/><rect x="13" y="10" width="1" height="1" fill="#FFFFFF"/><rect x="0" y="11" width="7" height="1" fill="#FFFFFF"/><rect x="13" y="11" width="1" height="1" fill="#FFFFFF"/><rect x="1" y="12" width="6" height="1" fill="#FFFFFF"/><rect x="8" y="12" width="4" height="1" fill="#FFFFFF"/><rect x="13" y="12" width="1" height="1" fill="#FFFFFF"/><rect x="7" y="13" width="7" height="1" fill="#FFFFFF"/></svg>
<svg class="a" style="left:209px;top:51px;" width="14" height="14" viewBox="0 0 14 14" shape-rendering="crispEdges"><rect x="4" y="0" width="5" height="1" fill="#808080"/><rect x="1" y="1" width="4" height="1" fill="#808080"/><rect x="8" y="1" width="4" height="1" fill="#808080"/><rect x="0" y="2" width="13" height="1" fill="#808080"/><rect x="0" y="3" width="4" height="1" fill="#808080"/><rect x="9" y="3" width="4" height="1" fill="#808080"/><rect x="0" y="4" width="13" height="1" fill="#808080"/><rect x="0" y="5" width="13" height="1" fill="#808080"/><rect x="0" y="6" width="13" height="1" fill="#808080"/><rect x="0" y="7" width="13" height="1" fill="#808080"/><rect x="0" y="8" width="14" height="1" fill="#808080"/><rect x="0" y="9" width="7" height="1" fill="#808080"/><rect x="13" y="9" width="1" height="1" fill="#808080"/><rect x="0" y="10" width="7" height="1" fill="#808080"/><rect x="8" y="10" width="4" height="1" fill="#808080"/><rect x="13" y="10" width="1" height="1" fill="#808080"/><rect x="0" y="11" width="7" height="1" fill="#808080"/><rect x="13" y="11" width="1" height="1" fill="#808080"/><rect x="1" y="12" width="6" height="1" fill="#808080"/><rect x="8" y="12" width="4" height="1" fill="#808080"/><rect x="13" y="12" width="1" height="1" fill="#808080"/><rect x="7" y="13" width="7" height="1" fill="#808080"/></svg>
<svg class="a" style="left:233px;top:52px;" width="14" height="12" viewBox="0 0 14 12" shape-rendering="crispEdges"><rect x="2" y="0" width="3" height="1" fill="#FFFFFF"/><rect x="8" y="0" width="3" height="1" fill="#FFFFFF"/><rect x="2" y="1" width="1" height="1" fill="#FFFFFF"/><rect x="4" y="1" width="1" height="1" fill="#FFFFFF"/><rect x="8" y="1" width="1" height="1" fill="#FFFFFF"/><rect x="10" y="1" width="1" height="1" fill="#FFFFFF"/><rect x="1" y="2" width="5" height="1" fill="#FFFFFF"/><rect x="7" y="2" width="5" height="1" fill="#FFFFFF"/><rect x="1" y="3" width="2" height="1" fill="#FFFFFF"/><rect x="4" y="3" width="2" height="1" fill="#FFFFFF"/><rect x="7" y="3" width="2" height="1" fill="#FFFFFF"/><rect x="10" y="3" width="2" height="1" fill="#FFFFFF"/><rect x="0" y="4" width="3" height="1" fill="#FFFFFF"/><rect x="4" y="4" width="5" height="1" fill="#FFFFFF"/><rect x="10" y="4" width="3" height="1" fill="#FFFFFF"/><rect x="0" y="5" width="2" height="1" fill="#FFFFFF"/><rect x="4" y="5" width="5" height="1" fill="#FFFFFF"/><rect x="11" y="5" width="2" height="1" fill="#FFFFFF"/><rect x="0" y="6" width="6" height="1" fill="#FFFFFF"/><rect x="7" y="6" width="6" height="1" fill="#FFFFFF"/><rect x="0" y="7" width="6" height="1" fill="#FFFFFF"/><rect x="7" y="7" width="6" height="1" fill="#FFFFFF"/><rect x="0" y="8" width="2" height="1" fill="#FFFFFF"/><rect x="3" y="8" width="3" height="1" fill="#FFFFFF"/><rect x="7" y="8" width="2" height="1" fill="#FFFFFF"/><rect x="10" y="8" width="3" height="1" fill="#FFFFFF"/><rect x="0" y="9" width="2" height="1" fill="#FFFFFF"/><rect x="3" y="9" width="2" height="1" fill="#FFFFFF"/><rect x="8" y="9" width="1" height="1" fill="#FFFFFF"/><rect x="10" y="9" width="3" height="1" fill="#FFFFFF"/><rect x="0" y="10" width="5" height="1" fill="#FFFFFF"/><rect x="8" y="10" width="5" height="1" fill="#FFFFFF"/><rect x="0" y="11" width="5" height="1" fill="#FFFFFF"/><rect x="8" y="11" width="5" height="1" fill="#FFFFFF"/></svg>
<svg class="a" style="left:232px;top:51px;" width="14" height="12" viewBox="0 0 14 12" shape-rendering="crispEdges"><rect x="2" y="0" width="3" height="1" fill="#808080"/><rect x="8" y="0" width="3" height="1" fill="#808080"/><rect x="2" y="1" width="1" height="1" fill="#808080"/><rect x="4" y="1" width="1" height="1" fill="#808080"/><rect x="8" y="1" width="1" height="1" fill="#808080"/><rect x="10" y="1" width="1" height="1" fill="#808080"/><rect x="1" y="2" width="5" height="1" fill="#808080"/><rect x="7" y="2" width="5" height="1" fill="#808080"/><rect x="1" y="3" width="2" height="1" fill="#808080"/><rect x="4" y="3" width="2" height="1" fill="#808080"/><rect x="7" y="3" width="2" height="1" fill="#808080"/><rect x="10" y="3" width="2" height="1" fill="#808080"/><rect x="0" y="4" width="3" height="1" fill="#808080"/><rect x="4" y="4" width="5" height="1" fill="#808080"/><rect x="10" y="4" width="3" height="1" fill="#808080"/><rect x="0" y="5" width="2" height="1" fill="#808080"/><rect x="4" y="5" width="5" height="1" fill="#808080"/><rect x="11" y="5" width="2" height="1" fill="#808080"/><rect x="0" y="6" width="6" height="1" fill="#808080"/><rect x="7" y="6" width="6" height="1" fill="#808080"/><rect x="0" y="7" width="6" height="1" fill="#808080"/><rect x="7" y="7" width="6" height="1" fill="#808080"/><rect x="0" y="8" width="2" height="1" fill="#808080"/><rect x="3" y="8" width="3" height="1" fill="#808080"/><rect x="7" y="8" width="2" height="1" fill="#808080"/><rect x="10" y="8" width="3" height="1" fill="#808080"/><rect x="0" y="9" width="2" height="1" fill="#808080"/><rect x="3" y="9" width="2" height="1" fill="#808080"/><rect x="8" y="9" width="1" height="1" fill="#808080"/><rect x="10" y="9" width="3" height="1" fill="#808080"/><rect x="0" y="10" width="5" height="1" fill="#808080"/><rect x="8" y="10" width="5" height="1" fill="#808080"/><rect x="0" y="11" width="5" height="1" fill="#808080"/><rect x="8" y="11" width="5" height="1" fill="#808080"/></svg>
<svg class="a" style="left:263px;top:56px;" width="14" height="7" viewBox="0 0 14 7" shape-rendering="crispEdges"><rect x="2" y="0" width="1" height="1" fill="#FFFFFF"/><rect x="1" y="1" width="2" height="1" fill="#FFFFFF"/><rect x="5" y="1" width="5" height="1" fill="#FFFFFF"/><rect x="0" y="2" width="6" height="1" fill="#FFFFFF"/><rect x="10" y="2" width="2" height="1" fill="#FFFFFF"/><rect x="1" y="3" width="2" height="1" fill="#FFFFFF"/><rect x="11" y="3" width="1" height="1" fill="#FFFFFF"/><rect x="2" y="4" width="1" height="1" fill="#FFFFFF"/><rect x="11" y="4" width="1" height="1" fill="#FFFFFF"/><rect x="11" y="5" width="1" height="1" fill="#FFFFFF"/><rect x="6" y="6" width="5" height="1" fill="#FFFFFF"/></svg>
<svg class="a" style="left:262px;top:55px;" width="14" height="7" viewBox="0 0 14 7" shape-rendering="crispEdges"><rect x="2" y="0" width="1" height="1" fill="#808080"/><rect x="1" y="1" width="2" height="1" fill="#808080"/><rect x="5" y="1" width="5" height="1" fill="#808080"/><rect x="0" y="2" width="6" height="1" fill="#808080"/><rect x="10" y="2" width="2" height="1" fill="#808080"/><rect x="1" y="3" width="2" height="1" fill="#808080"/><rect x="11" y="3" width="1" height="1" fill="#808080"/><rect x="2" y="4" width="1" height="1" fill="#808080"/><rect x="11" y="4" width="1" height="1" fill="#808080"/><rect x="11" y="5" width="1" height="1" fill="#808080"/><rect x="6" y="6" width="5" height="1" fill="#808080"/></svg>
<svg class="a" style="left:287px;top:56px;" width="14" height="7" viewBox="0 0 14 7" shape-rendering="crispEdges"><rect x="11" y="0" width="1" height="1" fill="#FFFFFF"/><rect x="4" y="1" width="5" height="1" fill="#FFFFFF"/><rect x="11" y="1" width="2" height="1" fill="#FFFFFF"/><rect x="2" y="2" width="2" height="1" fill="#FFFFFF"/><rect x="8" y="2" width="6" height="1" fill="#FFFFFF"/><rect x="2" y="3" width="1" height="1" fill="#FFFFFF"/><rect x="11" y="3" width="2" height="1" fill="#FFFFFF"/><rect x="2" y="4" width="1" height="1" fill="#FFFFFF"/><rect x="11" y="4" width="1" height="1" fill="#FFFFFF"/><rect x="2" y="5" width="1" height="1" fill="#FFFFFF"/><rect x="3" y="6" width="5" height="1" fill="#FFFFFF"/></svg>
<svg class="a" style="left:286px;top:55px;" width="14" height="7" viewBox="0 0 14 7" shape-rendering="crispEdges"><rect x="11" y="0" width="1" height="1" fill="#808080"/><rect x="4" y="1" width="5" height="1" fill="#808080"/><rect x="11" y="1" width="2" height="1" fill="#808080"/><rect x="2" y="2" width="2" height="1" fill="#808080"/><rect x="8" y="2" width="6" height="1" fill="#808080"/><rect x="2" y="3" width="1" height="1" fill="#808080"/><rect x="11" y="3" width="2" height="1" fill="#808080"/><rect x="2" y="4" width="1" height="1" fill="#808080"/><rect x="11" y="4" width="1" height="1" fill="#808080"/><rect x="2" y="5" width="1" height="1" fill="#808080"/><rect x="3" y="6" width="5" height="1" fill="#808080"/></svg>
<svg class="a" style="left:322px;top:56px;" width="7" height="9" viewBox="0 0 7 9" shape-rendering="crispEdges"><rect x="0" y="0" width="1" height="1" fill="#000080"/><rect x="0" y="1" width="2" height="1" fill="#000080"/><rect x="0" y="2" width="3" height="1" fill="#000080"/><rect x="0" y="3" width="4" height="1" fill="#000080"/><rect x="0" y="4" width="5" height="1" fill="#000080"/><rect x="0" y="5" width="4" height="1" fill="#000080"/><rect x="0" y="6" width="3" height="1" fill="#000080"/><rect x="0" y="7" width="2" height="1" fill="#000080"/><rect x="0" y="8" width="1" height="1" fill="#000080"/></svg>
<svg class="a" style="left:346px;top:57px;" width="6" height="9" viewBox="0 0 6 9" shape-rendering="crispEdges"><rect x="0" y="0" width="2" height="1" fill="#FFFFFF"/><rect x="4" y="0" width="2" height="1" fill="#FFFFFF"/><rect x="0" y="1" width="2" height="1" fill="#FFFFFF"/><rect x="4" y="1" width="2" height="1" fill="#FFFFFF"/><rect x="0" y="2" width="2" height="1" fill="#FFFFFF"/><rect x="4" y="2" width="2" height="1" fill="#FFFFFF"/><rect x="0" y="3" width="2" height="1" fill="#FFFFFF"/><rect x="4" y="3" width="2" height="1" fill="#FFFFFF"/><rect x="0" y="4" width="2" height="1" fill="#FFFFFF"/><rect x="4" y="4" width="2" height="1" fill="#FFFFFF"/><rect x="0" y="5" width="2" height="1" fill="#FFFFFF"/><rect x="4" y="5" width="2" height="1" fill="#FFFFFF"/><rect x="0" y="6" width="2" height="1" fill="#FFFFFF"/><rect x="4" y="6" width="2" height="1" fill="#FFFFFF"/><rect x="0" y="7" width="2" height="1" fill="#FFFFFF"/><rect x="4" y="7" width="2" height="1" fill="#FFFFFF"/><rect x="0" y="8" width="2" height="1" fill="#FFFFFF"/><rect x="4" y="8" width="2" height="1" fill="#FFFFFF"/></svg>
<svg class="a" style="left:345px;top:56px;" width="6" height="9" viewBox="0 0 6 9" shape-rendering="crispEdges"><rect x="0" y="0" width="2" height="1" fill="#808080"/><rect x="4" y="0" width="2" height="1" fill="#808080"/><rect x="0" y="1" width="2" height="1" fill="#808080"/><rect x="4" y="1" width="2" height="1" fill="#808080"/><rect x="0" y="2" width="2" height="1" fill="#808080"/><rect x="4" y="2" width="2" height="1" fill="#808080"/><rect x="0" y="3" width="2" height="1" fill="#808080"/><rect x="4" y="3" width="2" height="1" fill="#808080"/><rect x="0" y="4" width="2" height="1" fill="#808080"/><rect x="4" y="4" width="2" height="1" fill="#808080"/><rect x="0" y="5" width="2" height="1" fill="#808080"/><rect x="4" y="5" width="2" height="1" fill="#808080"/><rect x="0" y="6" width="2" height="1" fill="#808080"/><rect x="4" y="6" width="2" height="1" fill="#808080"/><rect x="0" y="7" width="2" height="1" fill="#808080"/><rect x="4" y="7" width="2" height="1" fill="#808080"/><rect x="0" y="8" width="2" height="1" fill="#808080"/><rect x="4" y="8" width="2" height="1" fill="#808080"/></svg>
<svg class="a" style="left:367px;top:58px;" width="7" height="7" viewBox="0 0 7 7" shape-rendering="crispEdges"><rect x="0" y="0" width="7" height="1" fill="#FFFFFF"/><rect x="0" y="1" width="7" height="1" fill="#FFFFFF"/><rect x="0" y="2" width="7" height="1" fill="#FFFFFF"/><rect x="0" y="3" width="7" height="1" fill="#FFFFFF"/><rect x="0" y="4" width="7" height="1" fill="#FFFFFF"/><rect x="0" y="5" width="7" height="1" fill="#FFFFFF"/><rect x="0" y="6" width="7" height="1" fill="#FFFFFF"/></svg>
<svg class="a" style="left:366px;top:57px;" width="7" height="7" viewBox="0 0 7 7" shape-rendering="crispEdges"><rect x="0" y="0" width="7" height="1" fill="#808080"/><rect x="0" y="1" width="7" height="1" fill="#808080"/><rect x="0" y="2" width="7" height="1" fill="#808080"/><rect x="0" y="3" width="7" height="1" fill="#808080"/><rect x="0" y="4" width="7" height="1" fill="#808080"/><rect x="0" y="5" width="7" height="1" fill="#808080"/><rect x="0" y="6" width="7" height="1" fill="#808080"/></svg>
<svg class="a" style="left:386px;top:48px;" width="18" height="17" viewBox="0 0 18 17" shape-rendering="crispEdges"><rect x="3" y="2" width="2" height="1" fill="#000000"/><rect x="14" y="2" width="1" height="1" fill="#000000"/><rect x="3" y="3" width="1" height="1" fill="#000000"/><rect x="4" y="3" width="1" height="1" fill="#00FFFF"/><rect x="5" y="3" width="2" height="1" fill="#000000"/><rect x="13" y="3" width="1" height="1" fill="#000000"/><rect x="14" y="3" width="1" height="1" fill="#FFFF00"/><rect x="15" y="3" width="1" height="1" fill="#000000"/><rect x="3" y="4" width="1" height="1" fill="#000000"/><rect x="4" y="4" width="1" height="1" fill="#FFFFFF"/><rect x="5" y="4" width="2" height="1" fill="#00FFFF"/><rect x="7" y="4" width="2" height="1" fill="#000000"/><rect x="13" y="4" width="1" height="1" fill="#000000"/><rect x="14" y="4" width="2" height="1" fill="#FFFF00"/><rect x="16" y="4" width="1" height="1" fill="#000000"/><rect x="3" y="5" width="1" height="1" fill="#000000"/><rect x="4" y="5" width="2" height="1" fill="#FFFFFF"/><rect x="6" y="5" width="1" height="1" fill="#000000"/><rect x="7" y="5" width="1" height="1" fill="#00FFFF"/><rect x="8" y="5" width="1" height="1" fill="#000000"/><rect x="14" y="5" width="2" height="1" fill="#000000"/><rect x="3" y="6" width="1" height="1" fill="#000000"/><rect x="4" y="6" width="2" height="1" fill="#FFFFFF"/><rect x="6" y="6" width="3" height="1" fill="#000000"/><rect x="3" y="7" width="4" height="1" fill="#000000"/><rect x="7" y="7" width="1" height="1" fill="#00FFFF"/><rect x="8" y="7" width="2" height="1" fill="#000000"/><rect x="13" y="7" width="3" height="1" fill="#000000"/><rect x="6" y="8" width="1" height="1" fill="#000000"/><rect x="7" y="8" width="1" height="1" fill="#FFFFFF"/><rect x="8" y="8" width="2" height="1" fill="#00FFFF"/><rect x="10" y="8" width="3" height="1" fill="#000000"/><rect x="13" y="8" width="2" height="1" fill="#FF0000"/><rect x="15" y="8" width="1" height="1" fill="#000000"/><rect x="5" y="9" width="2" height="1" fill="#000000"/><rect x="7" y="9" width="2" height="1" fill="#FFFFFF"/><rect x="9" y="9" width="1" height="1" fill="#000000"/><rect x="10" y="9" width="1" height="1" fill="#00FFFF"/><rect x="11" y="9" width="1" height="1" fill="#000000"/><rect x="12" y="9" width="2" height="1" fill="#FF0000"/><rect x="14" y="9" width="2" height="1" fill="#000000"/><rect x="4" y="10" width="1" height="1" fill="#000000"/><rect x="5" y="10" width="5" height="1" fill="#FFFFFF"/><rect x="10" y="10" width="1" height="1" fill="#000000"/><rect x="11" y="10" width="1" height="1" fill="#00FFFF"/><rect x="12" y="10" width="3" height="1" fill="#000000"/><rect x="3" y="11" width="1" height="1" fill="#000000"/><rect x="4" y="11" width="7" height="1" fill="#FFFFFF"/><rect x="11" y="11" width="1" height="1" fill="#000000"/><rect x="12" y="11" width="2" height="1" fill="#00FFFF"/><rect x="14" y="11" width="1" height="1" fill="#000000"/><rect x="2" y="12" width="1" height="1" fill="#000000"/><rect x="3" y="12" width="9" height="1" fill="#FFFFFF"/><rect x="12" y="12" width="2" height="1" fill="#000000"/><rect x="14" y="12" width="1" height="1" fill="#00FFFF"/><rect x="15" y="12" width="1" height="1" fill="#000000"/><rect x="1" y="13" width="1" height="1" fill="#000000"/><rect x="2" y="13" width="10" height="1" fill="#FFFFFF"/><rect x="12" y="13" width="1" height="1" fill="#000000"/><rect x="13" y="13" width="1" height="1" fill="#FFFF00"/><rect x="14" y="13" width="2" height="1" fill="#000000"/><rect x="2" y="14" width="2" height="1" fill="#000000"/><rect x="4" y="14" width="8" height="1" fill="#FFFFFF"/><rect x="12" y="14" width="1" height="1" fill="#000000"/><rect x="13" y="14" width="2" height="1" fill="#FFFF00"/><rect x="15" y="14" width="1" height="1" fill="#000000"/><rect x="4" y="15" width="3" height="1" fill="#000000"/><rect x="7" y="15" width="4" height="1" fill="#FFFFFF"/><rect x="11" y="15" width="1" height="1" fill="#000000"/><rect x="13" y="15" width="2" height="1" fill="#000000"/><rect x="7" y="16" width="4" height="1" fill="#000000"/></svg>
<svg class="a" style="left:411px;top:50px;" width="16" height="13" viewBox="0 0 16 13" shape-rendering="crispEdges"><rect x="7" y="0" width="6" height="1" fill="#000000"/><rect x="13" y="0" width="1" height="1" fill="#000080"/><rect x="5" y="1" width="2" height="1" fill="#000000"/><rect x="7" y="1" width="1" height="1" fill="#C0C0C0"/><rect x="8" y="1" width="1" height="1" fill="#FFFFFF"/><rect x="9" y="1" width="1" height="1" fill="#C0C0C0"/><rect x="10" y="1" width="1" height="1" fill="#FFFFFF"/><rect x="11" y="1" width="1" height="1" fill="#C0C0C0"/><rect x="12" y="1" width="1" height="1" fill="#000000"/><rect x="13" y="1" width="2" height="1" fill="#000080"/><rect x="1" y="2" width="4" height="1" fill="#000000"/><rect x="5" y="2" width="1" height="1" fill="#C0C0C0"/><rect x="6" y="2" width="1" height="1" fill="#FFFFFF"/><rect x="7" y="2" width="1" height="1" fill="#C0C0C0"/><rect x="8" y="2" width="1" height="1" fill="#FFFFFF"/><rect x="9" y="2" width="3" height="1" fill="#C0C0C0"/><rect x="12" y="2" width="3" height="1" fill="#000080"/><rect x="0" y="3" width="1" height="1" fill="#000000"/><rect x="1" y="3" width="3" height="1" fill="#FFFFFF"/><rect x="4" y="3" width="1" height="1" fill="#C0C0C0"/><rect x="5" y="3" width="1" height="1" fill="#FFFFFF"/><rect x="6" y="3" width="1" height="1" fill="#C0C0C0"/><rect x="7" y="3" width="1" height="1" fill="#FFFFFF"/><rect x="8" y="3" width="1" height="1" fill="#C0C0C0"/><rect x="9" y="3" width="1" height="1" fill="#FFFFFF"/><rect x="10" y="3" width="1" height="1" fill="#C0C0C0"/><rect x="11" y="3" width="2" height="1" fill="#000000"/><rect x="13" y="3" width="2" height="1" fill="#000080"/><rect x="0" y="4" width="1" height="1" fill="#000000"/><rect x="1" y="4" width="4" height="1" fill="#FFFFFF"/><rect x="5" y="4" width="1" height="1" fill="#C0C0C0"/><rect x="6" y="4" width="1" height="1" fill="#FFFFFF"/><rect x="7" y="4" width="1" height="1" fill="#C0C0C0"/><rect x="8" y="4" width="1" height="1" fill="#FFFFFF"/><rect x="9" y="4" width="1" height="1" fill="#C0C0C0"/><rect x="10" y="4" width="1" height="1" fill="#000000"/><rect x="13" y="4" width="1" height="1" fill="#000080"/><rect x="0" y="5" width="1" height="1" fill="#000000"/><rect x="1" y="5" width="1" height="1" fill="#FFFFFF"/><rect x="2" y="5" width="3" height="1" fill="#000000"/><rect x="5" y="5" width="1" height="1" fill="#FFFFFF"/><rect x="6" y="5" width="1" height="1" fill="#C0C0C0"/><rect x="7" y="5" width="1" height="1" fill="#FFFFFF"/><rect x="8" y="5" width="1" height="1" fill="#C0C0C0"/><rect x="9" y="5" width="1" height="1" fill="#FFFFFF"/><rect x="10" y="5" width="1" height="1" fill="#000000"/><rect x="0" y="6" width="1" height="1" fill="#000000"/><rect x="1" y="6" width="6" height="1" fill="#FFFFFF"/><rect x="7" y="6" width="1" height="1" fill="#C0C0C0"/><rect x="8" y="6" width="1" height="1" fill="#FFFFFF"/><rect x="9" y="6" width="1" height="1" fill="#C0C0C0"/><rect x="10" y="6" width="1" height="1" fill="#000000"/><rect x="0" y="7" width="1" height="1" fill="#000000"/><rect x="1" y="7" width="9" height="1" fill="#FFFFFF"/><rect x="10" y="7" width="1" height="1" fill="#000000"/><rect x="0" y="8" width="1" height="1" fill="#000000"/><rect x="1" y="8" width="1" height="1" fill="#FFFFFF"/><rect x="2" y="8" width="2" height="1" fill="#000000"/><rect x="4" y="8" width="1" height="1" fill="#FFFFFF"/><rect x="5" y="8" width="4" height="1" fill="#000000"/><rect x="9" y="8" width="1" height="1" fill="#FFFFFF"/><rect x="10" y="8" width="1" height="1" fill="#000000"/><rect x="0" y="9" width="1" height="1" fill="#000000"/><rect x="1" y="9" width="9" height="1" fill="#FFFFFF"/><rect x="10" y="9" width="1" height="1" fill="#000000"/><rect x="0" y="10" width="1" height="1" fill="#000000"/><rect x="1" y="10" width="1" height="1" fill="#FFFFFF"/><rect x="2" y="10" width="2" height="1" fill="#000000"/><rect x="4" y="10" width="1" height="1" fill="#FFFFFF"/><rect x="5" y="10" width="4" height="1" fill="#000000"/><rect x="9" y="10" width="1" height="1" fill="#FFFFFF"/><rect x="10" y="10" width="1" height="1" fill="#000000"/><rect x="0" y="11" width="1" height="1" fill="#000000"/><rect x="1" y="11" width="9" height="1" fill="#FFFFFF"/><rect x="10" y="11" width="1" height="1" fill="#000000"/><rect x="0" y="12" width="11" height="1" fill="#000000"/></svg>
<svg class="a" style="left:435px;top:51px;" width="15" height="12" viewBox="0 0 15 12" shape-rendering="crispEdges"><rect x="3" y="0" width="10" height="1" fill="#000000"/><rect x="3" y="1" width="1" height="1" fill="#000000"/><rect x="4" y="1" width="8" height="1" fill="#808080"/><rect x="12" y="1" width="1" height="1" fill="#000000"/><rect x="3" y="2" width="1" height="1" fill="#000000"/><rect x="4" y="2" width="8" height="1" fill="#FFFFFF"/><rect x="12" y="2" width="1" height="1" fill="#000000"/><rect x="0" y="3" width="9" height="1" fill="#000000"/><rect x="9" y="3" width="3" height="1" fill="#FFFFFF"/><rect x="12" y="3" width="1" height="1" fill="#000000"/><rect x="0" y="4" width="1" height="1" fill="#000000"/><rect x="1" y="4" width="8" height="1" fill="#808080"/><rect x="9" y="4" width="3" height="1" fill="#FFFFFF"/><rect x="12" y="4" width="1" height="1" fill="#000000"/><rect x="0" y="5" width="1" height="1" fill="#000000"/><rect x="1" y="5" width="4" height="1" fill="#FFFFFF"/><rect x="5" y="5" width="10" height="1" fill="#000000"/><rect x="0" y="6" width="1" height="1" fill="#000000"/><rect x="1" y="6" width="4" height="1" fill="#FFFFFF"/><rect x="5" y="6" width="1" height="1" fill="#000000"/><rect x="6" y="6" width="8" height="1" fill="#000080"/><rect x="14" y="6" width="1" height="1" fill="#000000"/><rect x="0" y="7" width="1" height="1" fill="#000000"/><rect x="1" y="7" width="4" height="1" fill="#FFFFFF"/><rect x="5" y="7" width="1" height="1" fill="#000000"/><rect x="6" y="7" width="8" height="1" fill="#FFFFFF"/><rect x="14" y="7" width="1" height="1" fill="#000000"/><rect x="0" y="8" width="6" height="1" fill="#000000"/><rect x="6" y="8" width="8" height="1" fill="#FFFFFF"/><rect x="14" y="8" width="1" height="1" fill="#000000"/><rect x="5" y="9" width="1" height="1" fill="#000000"/><rect x="6" y="9" width="8" height="1" fill="#FFFFFF"/><rect x="14" y="9" width="1" height="1" fill="#000000"/><rect x="5" y="10" width="1" height="1" fill="#000000"/><rect x="6" y="10" width="8" height="1" fill="#FFFFFF"/><rect x="14" y="10" width="1" height="1" fill="#000000"/><rect x="5" y="11" width="10" height="1" fill="#000000"/></svg>
<svg class="a" style="left:455px;top:48px;" width="18" height="17" viewBox="0 0 18 17" shape-rendering="crispEdges"><rect x="2" y="2" width="5" height="1" fill="#000000"/><rect x="14" y="2" width="4" height="1" fill="#000000"/><rect x="1" y="3" width="1" height="1" fill="#000000"/><rect x="2" y="3" width="5" height="1" fill="#0000FF"/><rect x="7" y="3" width="1" height="1" fill="#000000"/><rect x="11" y="3" width="2" height="1" fill="#000000"/><rect x="14" y="3" width="1" height="1" fill="#000000"/><rect x="15" y="3" width="2" height="1" fill="#800000"/><rect x="17" y="3" width="1" height="1" fill="#000000"/><rect x="1" y="4" width="1" height="1" fill="#000000"/><rect x="2" y="4" width="5" height="1" fill="#0000FF"/><rect x="7" y="4" width="1" height="1" fill="#000000"/><rect x="9" y="4" width="2" height="1" fill="#000000"/><rect x="11" y="4" width="1" height="1" fill="#00FF00"/><rect x="12" y="4" width="1" height="1" fill="#000000"/><rect x="14" y="4" width="1" height="1" fill="#000000"/><rect x="15" y="4" width="2" height="1" fill="#800000"/><rect x="17" y="4" width="1" height="1" fill="#000000"/><rect x="1" y="5" width="1" height="1" fill="#000000"/><rect x="2" y="5" width="5" height="1" fill="#0000FF"/><rect x="7" y="5" width="2" height="1" fill="#000000"/><rect x="9" y="5" width="1" height="1" fill="#FFFFFF"/><rect x="10" y="5" width="1" height="1" fill="#00FF00"/><rect x="11" y="5" width="1" height="1" fill="#FFFFFF"/><rect x="12" y="5" width="1" height="1" fill="#000000"/><rect x="14" y="5" width="4" height="1" fill="#000000"/><rect x="2" y="6" width="1" height="1" fill="#000000"/><rect x="3" y="6" width="3" height="1" fill="#0000FF"/><rect x="6" y="6" width="1" height="1" fill="#000000"/><rect x="9" y="6" width="2" height="1" fill="#000000"/><rect x="11" y="6" width="1" height="1" fill="#00FF00"/><rect x="12" y="6" width="1" height="1" fill="#000000"/><rect x="3" y="7" width="3" height="1" fill="#000000"/><rect x="7" y="7" width="1" height="1" fill="#000000"/><rect x="11" y="7" width="2" height="1" fill="#000000"/><rect x="6" y="8" width="1" height="1" fill="#000000"/><rect x="7" y="8" width="1" height="1" fill="#C0C0C0"/><rect x="8" y="8" width="1" height="1" fill="#000000"/><rect x="14" y="8" width="3" height="1" fill="#000000"/><rect x="5" y="9" width="1" height="1" fill="#000000"/><rect x="6" y="9" width="3" height="1" fill="#C0C0C0"/><rect x="9" y="9" width="6" height="1" fill="#000000"/><rect x="15" y="9" width="1" height="1" fill="#FFFFFF"/><rect x="16" y="9" width="2" height="1" fill="#000000"/><rect x="6" y="10" width="1" height="1" fill="#000000"/><rect x="7" y="10" width="1" height="1" fill="#C0C0C0"/><rect x="8" y="10" width="1" height="1" fill="#000000"/><rect x="9" y="10" width="6" height="1" fill="#FFFFFF"/><rect x="15" y="10" width="2" height="1" fill="#000000"/><rect x="7" y="11" width="8" height="1" fill="#000000"/><rect x="15" y="11" width="1" height="1" fill="#808000"/><rect x="16" y="11" width="1" height="1" fill="#000000"/><rect x="6" y="12" width="1" height="1" fill="#000000"/><rect x="7" y="12" width="1" height="1" fill="#FFFF00"/><rect x="8" y="12" width="1" height="1" fill="#FFFFFF"/><rect x="9" y="12" width="1" height="1" fill="#FFFF00"/><rect x="10" y="12" width="1" height="1" fill="#FFFFFF"/><rect x="11" y="12" width="1" height="1" fill="#FFFF00"/><rect x="12" y="12" width="1" height="1" fill="#FFFFFF"/><rect x="13" y="12" width="1" height="1" fill="#FFFF00"/><rect x="14" y="12" width="1" height="1" fill="#000000"/><rect x="15" y="12" width="1" height="1" fill="#808000"/><rect x="16" y="12" width="1" height="1" fill="#000000"/><rect x="6" y="13" width="1" height="1" fill="#000000"/><rect x="7" y="13" width="1" height="1" fill="#FFFFFF"/><rect x="8" y="13" width="1" height="1" fill="#FFFF00"/><rect x="9" y="13" width="1" height="1" fill="#FFFFFF"/><rect x="10" y="13" width="1" height="1" fill="#FFFF00"/><rect x="11" y="13" width="1" height="1" fill="#FFFFFF"/><rect x="12" y="13" width="1" height="1" fill="#FFFF00"/><rect x="13" y="13" width="1" height="1" fill="#FFFFFF"/><rect x="14" y="13" width="1" height="1" fill="#000000"/><rect x="15" y="13" width="1" height="1" fill="#808000"/><rect x="16" y="13" width="1" height="1" fill="#000000"/><rect x="6" y="14" width="1" height="1" fill="#000000"/><rect x="7" y="14" width="1" height="1" fill="#FFFF00"/><rect x="8" y="14" width="1" height="1" fill="#FFFFFF"/><rect x="9" y="14" width="1" height="1" fill="#FFFF00"/><rect x="10" y="14" width="1" height="1" fill="#FFFFFF"/><rect x="11" y="14" width="1" height="1" fill="#FFFF00"/><rect x="12" y="14" width="1" height="1" fill="#FFFFFF"/><rect x="13" y="14" width="1" height="1" fill="#FFFF00"/><rect x="14" y="14" width="1" height="1" fill="#000000"/><rect x="15" y="14" width="1" height="1" fill="#808000"/><rect x="16" y="14" width="1" height="1" fill="#000000"/><rect x="6" y="15" width="1" height="1" fill="#000000"/><rect x="7" y="15" width="1" height="1" fill="#FFFFFF"/><rect x="8" y="15" width="1" height="1" fill="#FFFF00"/><rect x="9" y="15" width="1" height="1" fill="#FFFFFF"/><rect x="10" y="15" width="1" height="1" fill="#FFFF00"/><rect x="11" y="15" width="1" height="1" fill="#FFFFFF"/><rect x="12" y="15" width="1" height="1" fill="#FFFF00"/><rect x="13" y="15" width="1" height="1" fill="#FFFFFF"/><rect x="14" y="15" width="2" height="1" fill="#000000"/><rect x="6" y="16" width="9" height="1" fill="#000000"/></svg>
<svg class="a" style="left:477px;top:48px;" width="19" height="16" viewBox="0 0 19 16" shape-rendering="crispEdges"><rect x="10" y="2" width="4" height="1" fill="#000000"/><rect x="9" y="3" width="1" height="1" fill="#000000"/><rect x="10" y="3" width="2" height="1" fill="#808000"/><rect x="12" y="3" width="4" height="1" fill="#000000"/><rect x="5" y="4" width="3" height="1" fill="#000000"/><rect x="10" y="4" width="2" height="1" fill="#000000"/><rect x="12" y="4" width="3" height="1" fill="#808000"/><rect x="15" y="4" width="1" height="1" fill="#000000"/><rect x="5" y="5" width="3" height="1" fill="#000000"/><rect x="11" y="5" width="1" height="1" fill="#000000"/><rect x="12" y="5" width="4" height="1" fill="#808000"/><rect x="16" y="5" width="1" height="1" fill="#000000"/><rect x="3" y="6" width="2" height="1" fill="#000000"/><rect x="6" y="6" width="2" height="1" fill="#000000"/><rect x="11" y="6" width="2" height="1" fill="#000000"/><rect x="13" y="6" width="3" height="1" fill="#808000"/><rect x="16" y="6" width="2" height="1" fill="#000000"/><rect x="3" y="7" width="5" height="1" fill="#000000"/><rect x="11" y="7" width="1" height="1" fill="#000000"/><rect x="12" y="7" width="1" height="1" fill="#800000"/><rect x="13" y="7" width="2" height="1" fill="#000000"/><rect x="15" y="7" width="2" height="1" fill="#808000"/><rect x="17" y="7" width="1" height="1" fill="#000000"/><rect x="3" y="8" width="5" height="1" fill="#000000"/><rect x="8" y="8" width="1" height="1" fill="#FFFFFF"/><rect x="9" y="8" width="1" height="1" fill="#000000"/><rect x="11" y="8" width="1" height="1" fill="#000000"/><rect x="12" y="8" width="1" height="1" fill="#800000"/><rect x="13" y="8" width="1" height="1" fill="#000000"/><rect x="15" y="8" width="1" height="1" fill="#000000"/><rect x="16" y="8" width="1" height="1" fill="#808000"/><rect x="17" y="8" width="1" height="1" fill="#000000"/><rect x="7" y="9" width="1" height="1" fill="#000000"/><rect x="8" y="9" width="1" height="1" fill="#FFFFFF"/><rect x="9" y="9" width="2" height="1" fill="#000000"/><rect x="11" y="9" width="1" height="1" fill="#800000"/><rect x="12" y="9" width="1" height="1" fill="#000000"/><rect x="16" y="9" width="1" height="1" fill="#000000"/><rect x="8" y="10" width="1" height="1" fill="#000000"/><rect x="9" y="10" width="1" height="1" fill="#FFFFFF"/><rect x="10" y="10" width="1" height="1" fill="#800000"/><rect x="11" y="10" width="1" height="1" fill="#000000"/><rect x="7" y="11" width="1" height="1" fill="#000000"/><rect x="8" y="11" width="1" height="1" fill="#800000"/><rect x="9" y="11" width="1" height="1" fill="#000000"/><rect x="10" y="11" width="1" height="1" fill="#FFFFFF"/><rect x="11" y="11" width="1" height="1" fill="#000000"/><rect x="6" y="12" width="1" height="1" fill="#000000"/><rect x="7" y="12" width="1" height="1" fill="#800000"/><rect x="8" y="12" width="1" height="1" fill="#000000"/><rect x="10" y="12" width="1" height="1" fill="#000000"/><rect x="11" y="12" width="1" height="1" fill="#FFFFFF"/><rect x="12" y="12" width="1" height="1" fill="#000000"/><rect x="5" y="13" width="1" height="1" fill="#000000"/><rect x="6" y="13" width="1" height="1" fill="#800000"/><rect x="7" y="13" width="1" height="1" fill="#000000"/><rect x="11" y="13" width="1" height="1" fill="#000000"/><rect x="12" y="13" width="1" height="1" fill="#FFFFFF"/><rect x="13" y="13" width="1" height="1" fill="#000000"/><rect x="4" y="14" width="1" height="1" fill="#000000"/><rect x="5" y="14" width="1" height="1" fill="#800000"/><rect x="6" y="14" width="1" height="1" fill="#000000"/><rect x="12" y="14" width="1" height="1" fill="#000000"/><rect x="13" y="14" width="1" height="1" fill="#FFFFFF"/><rect x="14" y="14" width="1" height="1" fill="#000000"/><rect x="4" y="15" width="3" height="1" fill="#000000"/><rect x="13" y="15" width="3" height="1" fill="#000000"/></svg>
<svg class="a" style="left:503px;top:50px;" width="16" height="14" viewBox="0 0 16 14" shape-rendering="crispEdges"><rect x="4" y="0" width="8" height="1" fill="#000080"/><rect x="2" y="1" width="2" height="1" fill="#000080"/><rect x="4" y="1" width="8" height="1" fill="#FFFF00"/><rect x="12" y="1" width="2" height="1" fill="#000080"/><rect x="1" y="2" width="1" height="1" fill="#000080"/><rect x="2" y="2" width="12" height="1" fill="#FFFF00"/><rect x="14" y="2" width="1" height="1" fill="#000080"/><rect x="1" y="3" width="1" height="1" fill="#000080"/><rect x="2" y="3" width="12" height="1" fill="#FFFF00"/><rect x="14" y="3" width="1" height="1" fill="#000080"/><rect x="1" y="4" width="14" height="1" fill="#000080"/><rect x="1" y="5" width="1" height="1" fill="#000080"/><rect x="2" y="5" width="12" height="1" fill="#FFFFFF"/><rect x="14" y="5" width="1" height="1" fill="#000080"/><rect x="1" y="6" width="1" height="1" fill="#000080"/><rect x="2" y="6" width="10" height="1" fill="#FFFFFF"/><rect x="12" y="6" width="1" height="1" fill="#C0C0C0"/><rect x="13" y="6" width="1" height="1" fill="#000000"/><rect x="14" y="6" width="1" height="1" fill="#000080"/><rect x="1" y="7" width="10" height="1" fill="#FFFFFF"/><rect x="11" y="7" width="3" height="1" fill="#000000"/><rect x="14" y="7" width="1" height="1" fill="#C0C0C0"/><rect x="1" y="8" width="9" height="1" fill="#FFFFFF"/><rect x="10" y="8" width="1" height="1" fill="#000000"/><rect x="11" y="8" width="1" height="1" fill="#FFFFFF"/><rect x="12" y="8" width="1" height="1" fill="#FFFF00"/><rect x="13" y="8" width="2" height="1" fill="#000000"/><rect x="1" y="9" width="9" height="1" fill="#FFFFFF"/><rect x="10" y="9" width="1" height="1" fill="#000000"/><rect x="11" y="9" width="1" height="1" fill="#FFFF00"/><rect x="12" y="9" width="2" height="1" fill="#FFFFFF"/><rect x="14" y="9" width="1" height="1" fill="#000000"/><rect x="1" y="10" width="1" height="1" fill="#000080"/><rect x="2" y="10" width="8" height="1" fill="#FFFFFF"/><rect x="10" y="10" width="1" height="1" fill="#000000"/><rect x="11" y="10" width="3" height="1" fill="#FFFFFF"/><rect x="14" y="10" width="1" height="1" fill="#000000"/><rect x="2" y="11" width="1" height="1" fill="#000080"/><rect x="3" y="11" width="8" height="1" fill="#FFFFFF"/><rect x="11" y="11" width="3" height="1" fill="#000000"/><rect x="15" y="11" width="1" height="1" fill="#000000"/><rect x="11" y="12" width="1" height="1" fill="#000000"/><rect x="14" y="12" width="2" height="1" fill="#000000"/><rect x="15" y="13" width="1" height="1" fill="#000000"/></svg>
<svg class="a" style="left:528px;top:51px;" width="19" height="15" viewBox="0 0 19 15" shape-rendering="crispEdges"><rect x="8" y="0" width="1" height="1" fill="#000000"/><rect x="8" y="1" width="1" height="1" fill="#000000"/><rect x="8" y="2" width="1" height="1" fill="#000000"/><rect x="4" y="4" width="3" height="1" fill="#000000"/><rect x="8" y="4" width="1" height="1" fill="#000000"/><rect x="10" y="4" width="3" height="1" fill="#000000"/><rect x="14" y="4" width="1" height="1" fill="#000000"/><rect x="16" y="4" width="1" height="1" fill="#000000"/><rect x="18" y="4" width="1" height="1" fill="#000000"/><rect x="8" y="6" width="1" height="1" fill="#000000"/><rect x="18" y="6" width="1" height="1" fill="#000000"/><rect x="8" y="7" width="1" height="1" fill="#000000"/><rect x="8" y="8" width="1" height="1" fill="#000000"/><rect x="18" y="8" width="1" height="1" fill="#000000"/><rect x="8" y="10" width="1" height="1" fill="#000000"/><rect x="18" y="10" width="1" height="1" fill="#000000"/><rect x="8" y="12" width="1" height="1" fill="#000000"/><rect x="18" y="12" width="1" height="1" fill="#000000"/><rect x="8" y="14" width="1" height="1" fill="#000000"/><rect x="10" y="14" width="1" height="1" fill="#000000"/><rect x="12" y="14" width="1" height="1" fill="#000000"/><rect x="14" y="14" width="1" height="1" fill="#000000"/><rect x="16" y="14" width="1" height="1" fill="#000000"/><rect x="18" y="14" width="1" height="1" fill="#000000"/></svg>
<div class="t" style="left:565px;top:53.69px;font-size:11px;line-height:11px;color:#000;transform:scaleX(0.9260);transform-origin:0 0;">0, 0</div>
<svg class="a" style="left:632px;top:51px;" width="19" height="15" viewBox="0 0 19 15" shape-rendering="crispEdges"><rect x="10" y="0" width="1" height="1" fill="#000000"/><rect x="15" y="0" width="1" height="1" fill="#000000"/><rect x="18" y="0" width="1" height="1" fill="#000000"/><rect x="10" y="1" width="1" height="1" fill="#000000"/><rect x="16" y="1" width="1" height="1" fill="#000000"/><rect x="18" y="1" width="1" height="1" fill="#000000"/><rect x="10" y="2" width="1" height="1" fill="#000000"/><rect x="12" y="2" width="7" height="1" fill="#000000"/><rect x="10" y="3" width="1" height="1" fill="#000000"/><rect x="16" y="3" width="1" height="1" fill="#000000"/><rect x="18" y="3" width="1" height="1" fill="#000000"/><rect x="10" y="4" width="1" height="1" fill="#000000"/><rect x="15" y="4" width="1" height="1" fill="#000000"/><rect x="18" y="4" width="1" height="1" fill="#000000"/><rect x="4" y="6" width="5" height="1" fill="#000000"/><rect x="10" y="6" width="1" height="1" fill="#000000"/><rect x="12" y="6" width="1" height="1" fill="#000000"/><rect x="14" y="6" width="1" height="1" fill="#000000"/><rect x="16" y="6" width="1" height="1" fill="#000000"/><rect x="18" y="6" width="1" height="1" fill="#000000"/><rect x="6" y="8" width="1" height="1" fill="#000000"/><rect x="10" y="8" width="1" height="1" fill="#000000"/><rect x="18" y="8" width="1" height="1" fill="#000000"/><rect x="6" y="9" width="1" height="1" fill="#000000"/><rect x="6" y="10" width="1" height="1" fill="#000000"/><rect x="10" y="10" width="1" height="1" fill="#000000"/><rect x="18" y="10" width="1" height="1" fill="#000000"/><rect x="4" y="11" width="1" height="1" fill="#000000"/><rect x="6" y="11" width="1" height="1" fill="#000000"/><rect x="8" y="11" width="1" height="1" fill="#000000"/><rect x="5" y="12" width="3" height="1" fill="#000000"/><rect x="10" y="12" width="1" height="1" fill="#000000"/><rect x="18" y="12" width="1" height="1" fill="#000000"/><rect x="6" y="13" width="1" height="1" fill="#000000"/><rect x="4" y="14" width="5" height="1" fill="#000000"/><rect x="10" y="14" width="1" height="1" fill="#000000"/><rect x="12" y="14" width="1" height="1" fill="#000000"/><rect x="14" y="14" width="1" height="1" fill="#000000"/><rect x="16" y="14" width="1" height="1" fill="#000000"/><rect x="18" y="14" width="1" height="1" fill="#000000"/></svg>
<div class="t" style="left:657px;top:53.69px;font-size:11px;line-height:11px;color:#000;transform:scaleX(0.9742);transform-origin:0 0;">4800 x 3600</div>
<div class="a" style="left:0px;top:71px;width:67px;height:660px;background:#D4D0C8"></div>
<div class="a" style="left:0px;top:70px;width:68px;height:1px;background:#808080"></div>
<div class="a" style="left:0px;top:71px;width:61px;height:15px;background:#808080"></div>
<div class="a" style="left:47px;top:72px;width:13px;height:13px;background:#D4D0C8;border-style:solid;border-width:1px;border-color:#fff #404040 #404040 #fff;box-shadow:inset 1px 1px 0 #D4D0C8,inset -1px -1px 0 #808080"></div>
<svg class="a" style="left:49px;top:74px;" width="8" height="7" viewBox="0 0 8 7" shape-rendering="crispEdges"><path d="M0 0h2l2 2.5L6 0h2L5 3.5 8 7H6L4 4.5 2 7H0l3-3.5z" fill="#000" shape-rendering="auto"/></svg>
<div class="a" style="left:1px;top:88px;width:60px;height:20px;background:#D4D0C8;border-style:solid;border-width:1px;border-color:#fff #404040 #404040 #fff;box-shadow:inset 1px 1px 0 #D4D0C8,inset -1px -1px 0 #808080"></div>
<div class="t" style="left:12px;top:92.69px;font-size:11px;line-height:11px;color:#000;transform:scaleX(0.9198);transform-origin:0 0;">General</div>
<div class="a" style="left:1px;top:109px;width:28px;height:28px;border-style:solid;border-width:1px;border-color:#808080 #fff #fff #808080;background:transparent"></div>
<svg class="a" style="left:2px;top:110px;" width="26" height="26" viewBox="0 0 26 26" shape-rendering="crispEdges"><rect width="26" height="26" fill="url(#dither)"/></svg>
<svg class="a" style="left:12px;top:116px;" width="10" height="14" viewBox="0 0 10 14" shape-rendering="crispEdges"><rect x="0" y="0" width="1" height="1" fill="#000000"/><rect x="0" y="1" width="2" height="1" fill="#000000"/><rect x="0" y="2" width="3" height="1" fill="#000000"/><rect x="0" y="3" width="4" height="1" fill="#000000"/><rect x="0" y="4" width="5" height="1" fill="#000000"/><rect x="0" y="5" width="6" height="1" fill="#000000"/><rect x="0" y="6" width="7" height="1" fill="#000000"/><rect x="0" y="7" width="8" height="1" fill="#000000"/><rect x="0" y="8" width="9" height="1" fill="#000000"/><rect x="0" y="9" width="6" height="1" fill="#000000"/><rect x="0" y="10" width="2" height="1" fill="#000000"/><rect x="4" y="10" width="3" height="1" fill="#000000"/><rect x="0" y="11" width="1" height="1" fill="#000000"/><rect x="4" y="11" width="3" height="1" fill="#000000"/><rect x="5" y="12" width="3" height="1" fill="#000000"/><rect x="5" y="13" width="3" height="1" fill="#000000"/></svg>
<svg class="a" style="left:33px;top:115px;" width="20" height="16" viewBox="0 0 20 16" shape-rendering="crispEdges"><rect x="0" y="0" width="20" height="1" fill="#000000"/><rect x="0" y="1" width="1" height="1" fill="#000000"/><rect x="1" y="1" width="1" height="1" fill="#00FFFF"/><rect x="2" y="1" width="1" height="1" fill="#FFFFFF"/><rect x="3" y="1" width="1" height="1" fill="#00FFFF"/><rect x="4" y="1" width="1" height="1" fill="#FFFFFF"/><rect x="5" y="1" width="1" height="1" fill="#00FF00"/><rect x="6" y="1" width="1" height="1" fill="#00FFFF"/><rect x="7" y="1" width="1" height="1" fill="#FFFFFF"/><rect x="8" y="1" width="1" height="1" fill="#00FFFF"/><rect x="9" y="1" width="1" height="1" fill="#FFFFFF"/><rect x="10" y="1" width="1" height="1" fill="#00FFFF"/><rect x="11" y="1" width="1" height="1" fill="#FFFFFF"/><rect x="12" y="1" width="1" height="1" fill="#00FFFF"/><rect x="13" y="1" width="1" height="1" fill="#FFFFFF"/><rect x="14" y="1" width="1" height="1" fill="#00FFFF"/><rect x="15" y="1" width="1" height="1" fill="#FFFFFF"/><rect x="16" y="1" width="1" height="1" fill="#00FFFF"/><rect x="17" y="1" width="1" height="1" fill="#FFFFFF"/><rect x="18" y="1" width="1" height="1" fill="#00FFFF"/><rect x="19" y="1" width="1" height="1" fill="#000000"/><rect x="0" y="2" width="1" height="1" fill="#000000"/><rect x="1" y="2" width="1" height="1" fill="#FFFFFF"/><rect x="2" y="2" width="1" height="1" fill="#00FFFF"/><rect x="3" y="2" width="1" height="1" fill="#FFFFFF"/><rect x="4" y="2" width="3" height="1" fill="#00FF00"/><rect x="7" y="2" width="1" height="1" fill="#00FFFF"/><rect x="8" y="2" width="1" height="1" fill="#FFFFFF"/><rect x="9" y="2" width="1" height="1" fill="#00FFFF"/><rect x="10" y="2" width="1" height="1" fill="#FFFFFF"/><rect x="11" y="2" width="1" height="1" fill="#00FFFF"/><rect x="12" y="2" width="1" height="1" fill="#FFFFFF"/><rect x="13" y="2" width="1" height="1" fill="#00FFFF"/><rect x="14" y="2" width="3" height="1" fill="#FFFF00"/><rect x="17" y="2" width="1" height="1" fill="#00FFFF"/><rect x="18" y="2" width="1" height="1" fill="#FFFFFF"/><rect x="19" y="2" width="1" height="1" fill="#000000"/><rect x="0" y="3" width="1" height="1" fill="#000000"/><rect x="1" y="3" width="1" height="1" fill="#00FFFF"/><rect x="2" y="3" width="1" height="1" fill="#FFFFFF"/><rect x="3" y="3" width="1" height="1" fill="#00FF00"/><rect x="4" y="3" width="1" height="1" fill="#00FFFF"/><rect x="5" y="3" width="2" height="1" fill="#00FF00"/><rect x="7" y="3" width="1" height="1" fill="#FFFFFF"/><rect x="8" y="3" width="1" height="1" fill="#00FFFF"/><rect x="9" y="3" width="1" height="1" fill="#FFFFFF"/><rect x="10" y="3" width="1" height="1" fill="#00FFFF"/><rect x="11" y="3" width="1" height="1" fill="#FFFFFF"/><rect x="12" y="3" width="1" height="1" fill="#00FFFF"/><rect x="13" y="3" width="5" height="1" fill="#FFFF00"/><rect x="18" y="3" width="1" height="1" fill="#00FFFF"/><rect x="19" y="3" width="1" height="1" fill="#000000"/><rect x="0" y="4" width="1" height="1" fill="#000000"/><rect x="1" y="4" width="1" height="1" fill="#FFFFFF"/><rect x="2" y="4" width="1" height="1" fill="#00FFFF"/><rect x="3" y="4" width="1" height="1" fill="#00FF00"/><rect x="4" y="4" width="1" height="1" fill="#FFFFFF"/><rect x="5" y="4" width="2" height="1" fill="#00FF00"/><rect x="7" y="4" width="1" height="1" fill="#00FFFF"/><rect x="8" y="4" width="1" height="1" fill="#00FF00"/><rect x="9" y="4" width="1" height="1" fill="#00FFFF"/><rect x="10" y="4" width="1" height="1" fill="#FFFFFF"/><rect x="11" y="4" width="1" height="1" fill="#00FFFF"/><rect x="12" y="4" width="1" height="1" fill="#FFFFFF"/><rect x="13" y="4" width="5" height="1" fill="#FFFF00"/><rect x="18" y="4" width="1" height="1" fill="#FFFFFF"/><rect x="19" y="4" width="1" height="1" fill="#000000"/><rect x="0" y="5" width="1" height="1" fill="#000000"/><rect x="1" y="5" width="1" height="1" fill="#00FFFF"/><rect x="2" y="5" width="1" height="1" fill="#FFFFFF"/><rect x="3" y="5" width="1" height="1" fill="#00FF00"/><rect x="4" y="5" width="1" height="1" fill="#00FFFF"/><rect x="5" y="5" width="2" height="1" fill="#00FF00"/><rect x="7" y="5" width="1" height="1" fill="#FFFFFF"/><rect x="8" y="5" width="1" height="1" fill="#00FF00"/><rect x="9" y="5" width="1" height="1" fill="#FFFFFF"/><rect x="10" y="5" width="1" height="1" fill="#00FFFF"/><rect x="11" y="5" width="1" height="1" fill="#FFFFFF"/><rect x="12" y="5" width="1" height="1" fill="#00FFFF"/><rect x="13" y="5" width="1" height="1" fill="#FFFFFF"/><rect x="14" y="5" width="3" height="1" fill="#FFFF00"/><rect x="17" y="5" width="2" height="1" fill="#00FFFF"/><rect x="19" y="5" width="1" height="1" fill="#000000"/><rect x="0" y="6" width="1" height="1" fill="#000000"/><rect x="1" y="6" width="1" height="1" fill="#FFFFFF"/><rect x="2" y="6" width="1" height="1" fill="#00FFFF"/><rect x="3" y="6" width="1" height="1" fill="#FFFFFF"/><rect x="4" y="6" width="5" height="1" fill="#00FF00"/><rect x="9" y="6" width="1" height="1" fill="#00FFFF"/><rect x="10" y="6" width="1" height="1" fill="#FFFFFF"/><rect x="11" y="6" width="1" height="1" fill="#00FFFF"/><rect x="12" y="6" width="1" height="1" fill="#FFFFFF"/><rect x="13" y="6" width="1" height="1" fill="#00FFFF"/><rect x="14" y="6" width="1" height="1" fill="#FFFFFF"/><rect x="15" y="6" width="1" height="1" fill="#00FFFF"/><rect x="16" y="6" width="1" height="1" fill="#FFFFFF"/><rect x="17" y="6" width="1" height="1" fill="#00FFFF"/><rect x="18" y="6" width="1" height="1" fill="#FFFFFF"/><rect x="19" y="6" width="1" height="1" fill="#000000"/><rect x="0" y="7" width="1" height="1" fill="#000000"/><rect x="1" y="7" width="1" height="1" fill="#00FFFF"/><rect x="2" y="7" width="1" height="1" fill="#FFFFFF"/><rect x="3" y="7" width="1" height="1" fill="#00FFFF"/><rect x="4" y="7" width="1" height="1" fill="#FFFFFF"/><rect x="5" y="7" width="3" height="1" fill="#00FF00"/><rect x="8" y="7" width="1" height="1" fill="#FFFFFF"/><rect x="9" y="7" width="1" height="1" fill="#00FFFF"/><rect x="10" y="7" width="1" height="1" fill="#FFFFFF"/><rect x="11" y="7" width="1" height="1" fill="#00FFFF"/><rect x="12" y="7" width="1" height="1" fill="#FFFFFF"/><rect x="13" y="7" width="1" height="1" fill="#00FFFF"/><rect x="14" y="7" width="1" height="1" fill="#FFFFFF"/><rect x="15" y="7" width="1" height="1" fill="#00FFFF"/><rect x="16" y="7" width="1" height="1" fill="#FFFFFF"/><rect x="17" y="7" width="1" height="1" fill="#00FFFF"/><rect x="18" y="7" width="1" height="1" fill="#FFFFFF"/><rect x="19" y="7" width="1" height="1" fill="#000000"/><rect x="0" y="8" width="1" height="1" fill="#000000"/><rect x="1" y="8" width="1" height="1" fill="#FFFF00"/><rect x="2" y="8" width="1" height="1" fill="#000000"/><rect x="3" y="8" width="1" height="1" fill="#FFFF00"/><rect x="4" y="8" width="1" height="1" fill="#000000"/><rect x="5" y="8" width="2" height="1" fill="#00FF00"/><rect x="7" y="8" width="1" height="1" fill="#FFFF00"/><rect x="8" y="8" width="1" height="1" fill="#000000"/><rect x="9" y="8" width="1" height="1" fill="#FFFF00"/><rect x="10" y="8" width="1" height="1" fill="#000000"/><rect x="11" y="8" width="1" height="1" fill="#FFFF00"/><rect x="12" y="8" width="1" height="1" fill="#000000"/><rect x="13" y="8" width="1" height="1" fill="#FFFF00"/><rect x="14" y="8" width="1" height="1" fill="#000000"/><rect x="15" y="8" width="1" height="1" fill="#FFFF00"/><rect x="16" y="8" width="1" height="1" fill="#000000"/><rect x="17" y="8" width="1" height="1" fill="#FFFF00"/><rect x="18" y="8" width="2" height="1" fill="#000000"/><rect x="0" y="9" width="2" height="1" fill="#000000"/><rect x="2" y="9" width="1" height="1" fill="#FFFF00"/><rect x="3" y="9" width="1" height="1" fill="#000000"/><rect x="4" y="9" width="1" height="1" fill="#FFFF00"/><rect x="5" y="9" width="2" height="1" fill="#00FF00"/><rect x="7" y="9" width="1" height="1" fill="#000000"/><rect x="8" y="9" width="1" height="1" fill="#FFFF00"/><rect x="9" y="9" width="1" height="1" fill="#000000"/><rect x="10" y="9" width="1" height="1" fill="#FFFF00"/><rect x="11" y="9" width="1" height="1" fill="#000000"/><rect x="12" y="9" width="1" height="1" fill="#FFFF00"/><rect x="13" y="9" width="1" height="1" fill="#000000"/><rect x="14" y="9" width="1" height="1" fill="#FFFF00"/><rect x="15" y="9" width="1" height="1" fill="#000000"/><rect x="16" y="9" width="1" height="1" fill="#FFFF00"/><rect x="17" y="9" width="1" height="1" fill="#000000"/><rect x="18" y="9" width="1" height="1" fill="#FFFF00"/><rect x="19" y="9" width="1" height="1" fill="#000000"/><rect x="0" y="10" width="1" height="1" fill="#000000"/><rect x="1" y="10" width="1" height="1" fill="#FFFF00"/><rect x="2" y="10" width="1" height="1" fill="#000000"/><rect x="3" y="10" width="1" height="1" fill="#FFFF00"/><rect x="4" y="10" width="1" height="1" fill="#000000"/><rect x="5" y="10" width="2" height="1" fill="#00FF00"/><rect x="7" y="10" width="1" height="1" fill="#FFFF00"/><rect x="8" y="10" width="3" height="1" fill="#000000"/><rect x="11" y="10" width="1" height="1" fill="#FFFF00"/><rect x="12" y="10" width="1" height="1" fill="#000000"/><rect x="13" y="10" width="1" height="1" fill="#FFFF00"/><rect x="14" y="10" width="2" height="1" fill="#000000"/><rect x="16" y="10" width="1" height="1" fill="#FFFF00"/><rect x="17" y="10" width="1" height="1" fill="#000000"/><rect x="18" y="10" width="1" height="1" fill="#FFFF00"/><rect x="19" y="10" width="1" height="1" fill="#000000"/><rect x="0" y="11" width="2" height="1" fill="#000000"/><rect x="2" y="11" width="1" height="1" fill="#FFFF00"/><rect x="3" y="11" width="1" height="1" fill="#000000"/><rect x="4" y="11" width="1" height="1" fill="#FFFF00"/><rect x="5" y="11" width="2" height="1" fill="#00FF00"/><rect x="7" y="11" width="1" height="1" fill="#000000"/><rect x="8" y="11" width="1" height="1" fill="#FFFF00"/><rect x="9" y="11" width="1" height="1" fill="#000000"/><rect x="10" y="11" width="1" height="1" fill="#FFFF00"/><rect x="11" y="11" width="1" height="1" fill="#000000"/><rect x="12" y="11" width="1" height="1" fill="#FFFF00"/><rect x="13" y="11" width="1" height="1" fill="#000000"/><rect x="14" y="11" width="1" height="1" fill="#FFFF00"/><rect x="15" y="11" width="1" height="1" fill="#000000"/><rect x="16" y="11" width="1" height="1" fill="#FFFF00"/><rect x="17" y="11" width="1" height="1" fill="#000000"/><rect x="18" y="11" width="1" height="1" fill="#FFFF00"/><rect x="19" y="11" width="1" height="1" fill="#000000"/><rect x="0" y="12" width="1" height="1" fill="#000000"/><rect x="1" y="12" width="1" height="1" fill="#FFFF00"/><rect x="2" y="12" width="1" height="1" fill="#000000"/><rect x="3" y="12" width="1" height="1" fill="#FFFF00"/><rect x="4" y="12" width="1" height="1" fill="#000000"/><rect x="5" y="12" width="2" height="1" fill="#00FF00"/><rect x="7" y="12" width="1" height="1" fill="#FFFF00"/><rect x="8" y="12" width="1" height="1" fill="#000000"/><rect x="9" y="12" width="1" height="1" fill="#FFFF00"/><rect x="10" y="12" width="3" height="1" fill="#000000"/><rect x="13" y="12" width="1" height="1" fill="#FFFF00"/><rect x="14" y="12" width="1" height="1" fill="#000000"/><rect x="15" y="12" width="1" height="1" fill="#FFFF00"/><rect x="16" y="12" width="2" height="1" fill="#000000"/><rect x="18" y="12" width="1" height="1" fill="#FFFF00"/><rect x="19" y="12" width="1" height="1" fill="#000000"/><rect x="0" y="13" width="2" height="1" fill="#000000"/><rect x="2" y="13" width="1" height="1" fill="#FFFF00"/><rect x="3" y="13" width="1" height="1" fill="#000000"/><rect x="4" y="13" width="1" height="1" fill="#FFFF00"/><rect x="5" y="13" width="1" height="1" fill="#000000"/><rect x="6" y="13" width="1" height="1" fill="#FFFF00"/><rect x="7" y="13" width="1" height="1" fill="#000000"/><rect x="8" y="13" width="1" height="1" fill="#FFFF00"/><rect x="9" y="13" width="1" height="1" fill="#000000"/><rect x="10" y="13" width="1" height="1" fill="#FFFF00"/><rect x="11" y="13" width="1" height="1" fill="#000000"/><rect x="12" y="13" width="1" height="1" fill="#FFFF00"/><rect x="13" y="13" width="1" height="1" fill="#000000"/><rect x="14" y="13" width="1" height="1" fill="#FFFF00"/><rect x="15" y="13" width="1" height="1" fill="#000000"/><rect x="16" y="13" width="1" height="1" fill="#FFFF00"/><rect x="17" y="13" width="1" height="1" fill="#000000"/><rect x="18" y="13" width="1" height="1" fill="#FFFF00"/><rect x="19" y="13" width="1" height="1" fill="#000000"/><rect x="0" y="14" width="1" height="1" fill="#000000"/><rect x="1" y="14" width="1" height="1" fill="#FFFF00"/><rect x="2" y="14" width="1" height="1" fill="#000000"/><rect x="3" y="14" width="1" height="1" fill="#FFFF00"/><rect x="4" y="14" width="1" height="1" fill="#000000"/><rect x="5" y="14" width="1" height="1" fill="#FFFF00"/><rect x="6" y="14" width="1" height="1" fill="#000000"/><rect x="7" y="14" width="1" height="1" fill="#FFFF00"/><rect x="8" y="14" width="1" height="1" fill="#000000"/><rect x="9" y="14" width="1" height="1" fill="#FFFF00"/><rect x="10" y="14" width="1" height="1" fill="#000000"/><rect x="11" y="14" width="1" height="1" fill="#FFFF00"/><rect x="12" y="14" width="1" height="1" fill="#000000"/><rect x="13" y="14" width="1" height="1" fill="#FFFF00"/><rect x="14" y="14" width="1" height="1" fill="#000000"/><rect x="15" y="14" width="1" height="1" fill="#FFFF00"/><rect x="16" y="14" width="1" height="1" fill="#000000"/><rect x="17" y="14" width="1" height="1" fill="#FFFF00"/><rect x="18" y="14" width="2" height="1" fill="#000000"/><rect x="0" y="15" width="20" height="1" fill="#000000"/></svg>
<svg class="a" style="left:6px;top:143px;" width="18" height="14" viewBox="0 0 18 14" shape-rendering="crispEdges"><rect x="8" y="0" width="2" height="1" fill="#000000"/><rect x="7" y="1" width="3" height="1" fill="#000000"/><rect x="7" y="2" width="4" height="1" fill="#000000"/><rect x="6" y="3" width="1" height="1" fill="#000000"/><rect x="8" y="3" width="3" height="1" fill="#000000"/><rect x="6" y="4" width="1" height="1" fill="#000000"/><rect x="8" y="4" width="4" height="1" fill="#000000"/><rect x="5" y="5" width="1" height="1" fill="#000000"/><rect x="9" y="5" width="3" height="1" fill="#000000"/><rect x="5" y="6" width="1" height="1" fill="#000000"/><rect x="9" y="6" width="4" height="1" fill="#000000"/><rect x="4" y="7" width="9" height="1" fill="#000000"/><rect x="4" y="8" width="1" height="1" fill="#000000"/><rect x="11" y="8" width="3" height="1" fill="#000000"/><rect x="3" y="9" width="1" height="1" fill="#000000"/><rect x="11" y="9" width="3" height="1" fill="#000000"/><rect x="3" y="10" width="1" height="1" fill="#000000"/><rect x="12" y="10" width="3" height="1" fill="#000000"/><rect x="2" y="11" width="1" height="1" fill="#000000"/><rect x="12" y="11" width="3" height="1" fill="#000000"/><rect x="1" y="12" width="3" height="1" fill="#000000"/><rect x="11" y="12" width="5" height="1" fill="#000000"/><rect x="0" y="13" width="5" height="1" fill="#000000"/><rect x="10" y="13" width="7" height="1" fill="#000000"/></svg>
<svg class="a" style="left:32px;top:142px;" width="21" height="17" viewBox="0 0 21 17" shape-rendering="crispEdges"><rect x="0" y="0" width="20" height="1" fill="#808080"/><rect x="20" y="0" width="1" height="1" fill="#FFFFFF"/><rect x="0" y="1" width="1" height="1" fill="#808080"/><rect x="1" y="1" width="18" height="1" fill="#000000"/><rect x="19" y="1" width="1" height="1" fill="#D4D0C8"/><rect x="20" y="1" width="1" height="1" fill="#FFFFFF"/><rect x="0" y="2" width="1" height="1" fill="#808080"/><rect x="1" y="2" width="1" height="1" fill="#000000"/><rect x="2" y="2" width="17" height="1" fill="#FFFFFF"/><rect x="19" y="2" width="1" height="1" fill="#D4D0C8"/><rect x="20" y="2" width="1" height="1" fill="#FFFFFF"/><rect x="0" y="3" width="1" height="1" fill="#808080"/><rect x="1" y="3" width="1" height="1" fill="#000000"/><rect x="2" y="3" width="15" height="1" fill="#FFFFFF"/><rect x="17" y="3" width="1" height="1" fill="#000000"/><rect x="18" y="3" width="1" height="1" fill="#FFFFFF"/><rect x="19" y="3" width="1" height="1" fill="#D4D0C8"/><rect x="20" y="3" width="1" height="1" fill="#FFFFFF"/><rect x="0" y="4" width="1" height="1" fill="#808080"/><rect x="1" y="4" width="1" height="1" fill="#000000"/><rect x="2" y="4" width="8" height="1" fill="#FFFFFF"/><rect x="10" y="4" width="1" height="1" fill="#000000"/><rect x="11" y="4" width="6" height="1" fill="#FFFFFF"/><rect x="17" y="4" width="1" height="1" fill="#000000"/><rect x="18" y="4" width="1" height="1" fill="#FFFFFF"/><rect x="19" y="4" width="1" height="1" fill="#D4D0C8"/><rect x="20" y="4" width="1" height="1" fill="#FFFFFF"/><rect x="0" y="5" width="1" height="1" fill="#808080"/><rect x="1" y="5" width="1" height="1" fill="#000000"/><rect x="2" y="5" width="8" height="1" fill="#FFFFFF"/><rect x="10" y="5" width="1" height="1" fill="#000000"/><rect x="11" y="5" width="6" height="1" fill="#FFFFFF"/><rect x="17" y="5" width="1" height="1" fill="#000000"/><rect x="18" y="5" width="1" height="1" fill="#FFFFFF"/><rect x="19" y="5" width="1" height="1" fill="#D4D0C8"/><rect x="20" y="5" width="1" height="1" fill="#FFFFFF"/><rect x="0" y="6" width="1" height="1" fill="#808080"/><rect x="1" y="6" width="1" height="1" fill="#000000"/><rect x="2" y="6" width="3" height="1" fill="#FFFFFF"/><rect x="5" y="6" width="3" height="1" fill="#000000"/><rect x="8" y="6" width="2" height="1" fill="#FFFFFF"/><rect x="10" y="6" width="4" height="1" fill="#000000"/><rect x="14" y="6" width="3" height="1" fill="#FFFFFF"/><rect x="17" y="6" width="1" height="1" fill="#000000"/><rect x="18" y="6" width="1" height="1" fill="#FFFFFF"/><rect x="19" y="6" width="1" height="1" fill="#D4D0C8"/><rect x="20" y="6" width="1" height="1" fill="#FFFFFF"/><rect x="0" y="7" width="1" height="1" fill="#808080"/><rect x="1" y="7" width="1" height="1" fill="#000000"/><rect x="2" y="7" width="6" height="1" fill="#FFFFFF"/><rect x="8" y="7" width="1" height="1" fill="#000000"/><rect x="9" y="7" width="1" height="1" fill="#FFFFFF"/><rect x="10" y="7" width="1" height="1" fill="#000000"/><rect x="11" y="7" width="3" height="1" fill="#FFFFFF"/><rect x="14" y="7" width="1" height="1" fill="#000000"/><rect x="15" y="7" width="2" height="1" fill="#FFFFFF"/><rect x="17" y="7" width="1" height="1" fill="#000000"/><rect x="18" y="7" width="1" height="1" fill="#FFFFFF"/><rect x="19" y="7" width="1" height="1" fill="#D4D0C8"/><rect x="20" y="7" width="1" height="1" fill="#FFFFFF"/><rect x="0" y="8" width="1" height="1" fill="#808080"/><rect x="1" y="8" width="1" height="1" fill="#000000"/><rect x="2" y="8" width="3" height="1" fill="#FFFFFF"/><rect x="5" y="8" width="4" height="1" fill="#000000"/><rect x="9" y="8" width="1" height="1" fill="#FFFFFF"/><rect x="10" y="8" width="1" height="1" fill="#000000"/><rect x="11" y="8" width="3" height="1" fill="#FFFFFF"/><rect x="14" y="8" width="1" height="1" fill="#000000"/><rect x="15" y="8" width="2" height="1" fill="#FFFFFF"/><rect x="17" y="8" width="1" height="1" fill="#000000"/><rect x="18" y="8" width="1" height="1" fill="#FFFFFF"/><rect x="19" y="8" width="1" height="1" fill="#D4D0C8"/><rect x="20" y="8" width="1" height="1" fill="#FFFFFF"/><rect x="0" y="9" width="1" height="1" fill="#808080"/><rect x="1" y="9" width="1" height="1" fill="#000000"/><rect x="2" y="9" width="2" height="1" fill="#FFFFFF"/><rect x="4" y="9" width="1" height="1" fill="#000000"/><rect x="5" y="9" width="3" height="1" fill="#FFFFFF"/><rect x="8" y="9" width="1" height="1" fill="#000000"/><rect x="9" y="9" width="1" height="1" fill="#FFFFFF"/><rect x="10" y="9" width="1" height="1" fill="#000000"/><rect x="11" y="9" width="3" height="1" fill="#FFFFFF"/><rect x="14" y="9" width="1" height="1" fill="#000000"/><rect x="15" y="9" width="2" height="1" fill="#FFFFFF"/><rect x="17" y="9" width="1" height="1" fill="#000000"/><rect x="18" y="9" width="1" height="1" fill="#FFFFFF"/><rect x="19" y="9" width="1" height="1" fill="#D4D0C8"/><rect x="20" y="9" width="1" height="1" fill="#FFFFFF"/><rect x="0" y="10" width="1" height="1" fill="#808080"/><rect x="1" y="10" width="1" height="1" fill="#000000"/><rect x="2" y="10" width="2" height="1" fill="#FFFFFF"/><rect x="4" y="10" width="1" height="1" fill="#000000"/><rect x="5" y="10" width="3" height="1" fill="#FFFFFF"/><rect x="8" y="10" width="1" height="1" fill="#000000"/><rect x="9" y="10" width="1" height="1" fill="#FFFFFF"/><rect x="10" y="10" width="1" height="1" fill="#000000"/><rect x="11" y="10" width="3" height="1" fill="#FFFFFF"/><rect x="14" y="10" width="1" height="1" fill="#000000"/><rect x="15" y="10" width="2" height="1" fill="#FFFFFF"/><rect x="17" y="10" width="1" height="1" fill="#000000"/><rect x="18" y="10" width="1" height="1" fill="#FFFFFF"/><rect x="19" y="10" width="1" height="1" fill="#D4D0C8"/><rect x="20" y="10" width="1" height="1" fill="#FFFFFF"/><rect x="0" y="11" width="1" height="1" fill="#808080"/><rect x="1" y="11" width="1" height="1" fill="#000000"/><rect x="2" y="11" width="2" height="1" fill="#FFFFFF"/><rect x="4" y="11" width="1" height="1" fill="#000000"/><rect x="5" y="11" width="2" height="1" fill="#FFFFFF"/><rect x="7" y="11" width="2" height="1" fill="#000000"/><rect x="9" y="11" width="1" height="1" fill="#FFFFFF"/><rect x="10" y="11" width="1" height="1" fill="#000000"/><rect x="11" y="11" width="3" height="1" fill="#FFFFFF"/><rect x="14" y="11" width="1" height="1" fill="#000000"/><rect x="15" y="11" width="2" height="1" fill="#FFFFFF"/><rect x="17" y="11" width="1" height="1" fill="#000000"/><rect x="18" y="11" width="1" height="1" fill="#FFFFFF"/><rect x="19" y="11" width="1" height="1" fill="#D4D0C8"/><rect x="20" y="11" width="1" height="1" fill="#FFFFFF"/><rect x="0" y="12" width="1" height="1" fill="#808080"/><rect x="1" y="12" width="1" height="1" fill="#000000"/><rect x="2" y="12" width="3" height="1" fill="#FFFFFF"/><rect x="5" y="12" width="2" height="1" fill="#000000"/><rect x="7" y="12" width="1" height="1" fill="#FFFFFF"/><rect x="8" y="12" width="1" height="1" fill="#000000"/><rect x="9" y="12" width="1" height="1" fill="#FFFFFF"/><rect x="10" y="12" width="4" height="1" fill="#000000"/><rect x="14" y="12" width="3" height="1" fill="#FFFFFF"/><rect x="17" y="12" width="1" height="1" fill="#000000"/><rect x="18" y="12" width="1" height="1" fill="#FFFFFF"/><rect x="19" y="12" width="1" height="1" fill="#D4D0C8"/><rect x="20" y="12" width="1" height="1" fill="#FFFFFF"/><rect x="0" y="13" width="1" height="1" fill="#808080"/><rect x="1" y="13" width="1" height="1" fill="#000000"/><rect x="2" y="13" width="15" height="1" fill="#FFFFFF"/><rect x="17" y="13" width="1" height="1" fill="#000000"/><rect x="18" y="13" width="1" height="1" fill="#FFFFFF"/><rect x="19" y="13" width="1" height="1" fill="#D4D0C8"/><rect x="20" y="13" width="1" height="1" fill="#FFFFFF"/><rect x="0" y="14" width="1" height="1" fill="#808080"/><rect x="1" y="14" width="1" height="1" fill="#000000"/><rect x="2" y="14" width="17" height="1" fill="#FFFFFF"/><rect x="19" y="14" width="1" height="1" fill="#D4D0C8"/><rect x="20" y="14" width="1" height="1" fill="#FFFFFF"/><rect x="0" y="15" width="1" height="1" fill="#808080"/><rect x="1" y="15" width="19" height="1" fill="#D4D0C8"/><rect x="20" y="15" width="1" height="1" fill="#FFFFFF"/><rect x="0" y="16" width="21" height="1" fill="#FFFFFF"/></svg>
<svg class="a" style="left:5px;top:169px;" width="19" height="19" viewBox="0 0 19 19" shape-rendering="crispEdges"><rect x="4" y="0" width="1" height="1" fill="#000000"/><rect x="6" y="0" width="1" height="1" fill="#000000"/><rect x="8" y="0" width="1" height="1" fill="#000000"/><rect x="10" y="0" width="1" height="1" fill="#000000"/><rect x="0" y="1" width="3" height="1" fill="#808080"/><rect x="5" y="1" width="1" height="1" fill="#000000"/><rect x="8" y="1" width="1" height="1" fill="#000000"/><rect x="10" y="1" width="1" height="1" fill="#000000"/><rect x="12" y="1" width="6" height="1" fill="#808080"/><rect x="18" y="1" width="1" height="1" fill="#FFFFFF"/><rect x="0" y="2" width="1" height="1" fill="#808080"/><rect x="1" y="2" width="2" height="1" fill="#FFFFFF"/><rect x="5" y="2" width="1" height="1" fill="#000000"/><rect x="9" y="2" width="1" height="1" fill="#000000"/><rect x="12" y="2" width="5" height="1" fill="#FFFFFF"/><rect x="17" y="2" width="1" height="1" fill="#808080"/><rect x="18" y="2" width="1" height="1" fill="#FFFFFF"/><rect x="0" y="3" width="1" height="1" fill="#808080"/><rect x="1" y="3" width="1" height="1" fill="#FFFFFF"/><rect x="4" y="3" width="1" height="1" fill="#000000"/><rect x="6" y="3" width="1" height="1" fill="#000000"/><rect x="9" y="3" width="1" height="1" fill="#000000"/><rect x="17" y="3" width="1" height="1" fill="#808080"/><rect x="18" y="3" width="1" height="1" fill="#FFFFFF"/><rect x="0" y="4" width="1" height="1" fill="#808080"/><rect x="1" y="4" width="1" height="1" fill="#FFFFFF"/><rect x="17" y="4" width="1" height="1" fill="#808080"/><rect x="18" y="4" width="1" height="1" fill="#FFFFFF"/><rect x="0" y="5" width="1" height="1" fill="#808080"/><rect x="1" y="5" width="1" height="1" fill="#FFFFFF"/><rect x="17" y="5" width="1" height="1" fill="#808080"/><rect x="18" y="5" width="1" height="1" fill="#FFFFFF"/><rect x="0" y="6" width="1" height="1" fill="#808080"/><rect x="1" y="6" width="1" height="1" fill="#FFFFFF"/><rect x="17" y="6" width="1" height="1" fill="#808080"/><rect x="18" y="6" width="1" height="1" fill="#FFFFFF"/><rect x="0" y="7" width="1" height="1" fill="#808080"/><rect x="1" y="7" width="1" height="1" fill="#FFFFFF"/><rect x="17" y="7" width="1" height="1" fill="#808080"/><rect x="18" y="7" width="1" height="1" fill="#FFFFFF"/><rect x="0" y="8" width="1" height="1" fill="#808080"/><rect x="1" y="8" width="1" height="1" fill="#FFFFFF"/><rect x="17" y="8" width="1" height="1" fill="#808080"/><rect x="18" y="8" width="1" height="1" fill="#FFFFFF"/><rect x="0" y="9" width="1" height="1" fill="#808080"/><rect x="1" y="9" width="1" height="1" fill="#FFFFFF"/><rect x="17" y="9" width="1" height="1" fill="#808080"/><rect x="18" y="9" width="1" height="1" fill="#FFFFFF"/><rect x="0" y="10" width="1" height="1" fill="#808080"/><rect x="1" y="10" width="1" height="1" fill="#FFFFFF"/><rect x="17" y="10" width="1" height="1" fill="#808080"/><rect x="18" y="10" width="1" height="1" fill="#FFFFFF"/><rect x="0" y="11" width="1" height="1" fill="#808080"/><rect x="1" y="11" width="1" height="1" fill="#FFFFFF"/><rect x="17" y="11" width="1" height="1" fill="#808080"/><rect x="18" y="11" width="1" height="1" fill="#FFFFFF"/><rect x="0" y="12" width="1" height="1" fill="#808080"/><rect x="1" y="12" width="1" height="1" fill="#FFFFFF"/><rect x="17" y="12" width="1" height="1" fill="#808080"/><rect x="18" y="12" width="1" height="1" fill="#FFFFFF"/><rect x="0" y="13" width="1" height="1" fill="#808080"/><rect x="1" y="13" width="1" height="1" fill="#FFFFFF"/><rect x="17" y="13" width="1" height="1" fill="#808080"/><rect x="18" y="13" width="1" height="1" fill="#FFFFFF"/><rect x="0" y="14" width="1" height="1" fill="#808080"/><rect x="1" y="14" width="1" height="1" fill="#FFFFFF"/><rect x="17" y="14" width="1" height="1" fill="#808080"/><rect x="18" y="14" width="1" height="1" fill="#FFFFFF"/><rect x="0" y="15" width="1" height="1" fill="#808080"/><rect x="1" y="15" width="1" height="1" fill="#FFFFFF"/><rect x="17" y="15" width="1" height="1" fill="#808080"/><rect x="18" y="15" width="1" height="1" fill="#FFFFFF"/><rect x="0" y="16" width="1" height="1" fill="#808080"/><rect x="1" y="16" width="1" height="1" fill="#FFFFFF"/><rect x="17" y="16" width="1" height="1" fill="#808080"/><rect x="18" y="16" width="1" height="1" fill="#FFFFFF"/><rect x="0" y="17" width="18" height="1" fill="#808080"/><rect x="18" y="17" width="1" height="1" fill="#FFFFFF"/><rect x="0" y="18" width="19" height="1" fill="#FFFFFF"/></svg>
<svg class="a" style="left:34px;top:173px;" width="18" height="12" viewBox="0 0 18 12" shape-rendering="crispEdges"><rect x="0" y="0" width="17" height="1" fill="#FFFFFF"/><rect x="17" y="0" width="1" height="1" fill="#000000"/><rect x="0" y="1" width="1" height="1" fill="#FFFFFF"/><rect x="17" y="1" width="1" height="1" fill="#000000"/><rect x="0" y="2" width="1" height="1" fill="#FFFFFF"/><rect x="16" y="2" width="1" height="1" fill="#808080"/><rect x="17" y="2" width="1" height="1" fill="#000000"/><rect x="0" y="3" width="1" height="1" fill="#FFFFFF"/><rect x="16" y="3" width="1" height="1" fill="#808080"/><rect x="17" y="3" width="1" height="1" fill="#000000"/><rect x="0" y="4" width="1" height="1" fill="#FFFFFF"/><rect x="16" y="4" width="1" height="1" fill="#808080"/><rect x="17" y="4" width="1" height="1" fill="#000000"/><rect x="0" y="5" width="1" height="1" fill="#FFFFFF"/><rect x="16" y="5" width="1" height="1" fill="#808080"/><rect x="17" y="5" width="1" height="1" fill="#000000"/><rect x="0" y="6" width="1" height="1" fill="#FFFFFF"/><rect x="16" y="6" width="1" height="1" fill="#808080"/><rect x="17" y="6" width="1" height="1" fill="#000000"/><rect x="0" y="7" width="1" height="1" fill="#FFFFFF"/><rect x="16" y="7" width="1" height="1" fill="#808080"/><rect x="17" y="7" width="1" height="1" fill="#000000"/><rect x="0" y="8" width="1" height="1" fill="#FFFFFF"/><rect x="16" y="8" width="1" height="1" fill="#808080"/><rect x="17" y="8" width="1" height="1" fill="#000000"/><rect x="0" y="9" width="1" height="1" fill="#FFFFFF"/><rect x="16" y="9" width="1" height="1" fill="#808080"/><rect x="17" y="9" width="1" height="1" fill="#000000"/><rect x="0" y="10" width="1" height="1" fill="#FFFFFF"/><rect x="1" y="10" width="16" height="1" fill="#808080"/><rect x="17" y="10" width="1" height="1" fill="#000000"/><rect x="0" y="11" width="18" height="1" fill="#000000"/></svg>
<svg class="a" style="left:8px;top:200px;" width="13" height="13" viewBox="0 0 13 13" shape-rendering="crispEdges"><rect x="0" y="0" width="12" height="1" fill="#808080"/><rect x="12" y="0" width="1" height="1" fill="#FFFFFF"/><rect x="0" y="1" width="1" height="1" fill="#808080"/><rect x="1" y="1" width="10" height="1" fill="#000000"/><rect x="11" y="1" width="1" height="1" fill="#D4D0C8"/><rect x="12" y="1" width="1" height="1" fill="#FFFFFF"/><rect x="0" y="2" width="1" height="1" fill="#808080"/><rect x="1" y="2" width="1" height="1" fill="#000000"/><rect x="2" y="2" width="9" height="1" fill="#FFFFFF"/><rect x="11" y="2" width="1" height="1" fill="#D4D0C8"/><rect x="12" y="2" width="1" height="1" fill="#FFFFFF"/><rect x="0" y="3" width="1" height="1" fill="#808080"/><rect x="1" y="3" width="1" height="1" fill="#000000"/><rect x="2" y="3" width="7" height="1" fill="#FFFFFF"/><rect x="9" y="3" width="1" height="1" fill="#000000"/><rect x="10" y="3" width="1" height="1" fill="#FFFFFF"/><rect x="11" y="3" width="1" height="1" fill="#D4D0C8"/><rect x="12" y="3" width="1" height="1" fill="#FFFFFF"/><rect x="0" y="4" width="1" height="1" fill="#808080"/><rect x="1" y="4" width="1" height="1" fill="#000000"/><rect x="2" y="4" width="6" height="1" fill="#FFFFFF"/><rect x="8" y="4" width="2" height="1" fill="#000000"/><rect x="10" y="4" width="1" height="1" fill="#FFFFFF"/><rect x="11" y="4" width="1" height="1" fill="#D4D0C8"/><rect x="12" y="4" width="1" height="1" fill="#FFFFFF"/><rect x="0" y="5" width="1" height="1" fill="#808080"/><rect x="1" y="5" width="1" height="1" fill="#000000"/><rect x="2" y="5" width="1" height="1" fill="#FFFFFF"/><rect x="3" y="5" width="1" height="1" fill="#000000"/><rect x="4" y="5" width="3" height="1" fill="#FFFFFF"/><rect x="7" y="5" width="3" height="1" fill="#000000"/><rect x="10" y="5" width="1" height="1" fill="#FFFFFF"/><rect x="11" y="5" width="1" height="1" fill="#D4D0C8"/><rect x="12" y="5" width="1" height="1" fill="#FFFFFF"/><rect x="0" y="6" width="1" height="1" fill="#808080"/><rect x="1" y="6" width="1" height="1" fill="#000000"/><rect x="2" y="6" width="1" height="1" fill="#FFFFFF"/><rect x="3" y="6" width="2" height="1" fill="#000000"/><rect x="5" y="6" width="1" height="1" fill="#FFFFFF"/><rect x="6" y="6" width="3" height="1" fill="#000000"/><rect x="9" y="6" width="2" height="1" fill="#FFFFFF"/><rect x="11" y="6" width="1" height="1" fill="#D4D0C8"/><rect x="12" y="6" width="1" height="1" fill="#FFFFFF"/><rect x="0" y="7" width="1" height="1" fill="#808080"/><rect x="1" y="7" width="1" height="1" fill="#000000"/><rect x="2" y="7" width="1" height="1" fill="#FFFFFF"/><rect x="3" y="7" width="5" height="1" fill="#000000"/><rect x="8" y="7" width="3" height="1" fill="#FFFFFF"/><rect x="11" y="7" width="1" height="1" fill="#D4D0C8"/><rect x="12" y="7" width="1" height="1" fill="#FFFFFF"/><rect x="0" y="8" width="1" height="1" fill="#808080"/><rect x="1" y="8" width="1" height="1" fill="#000000"/><rect x="2" y="8" width="2" height="1" fill="#FFFFFF"/><rect x="4" y="8" width="3" height="1" fill="#000000"/><rect x="7" y="8" width="4" height="1" fill="#FFFFFF"/><rect x="11" y="8" width="1" height="1" fill="#D4D0C8"/><rect x="12" y="8" width="1" height="1" fill="#FFFFFF"/><rect x="0" y="9" width="1" height="1" fill="#808080"/><rect x="1" y="9" width="1" height="1" fill="#000000"/><rect x="2" y="9" width="3" height="1" fill="#FFFFFF"/><rect x="5" y="9" width="1" height="1" fill="#000000"/><rect x="6" y="9" width="5" height="1" fill="#FFFFFF"/><rect x="11" y="9" width="1" height="1" fill="#D4D0C8"/><rect x="12" y="9" width="1" height="1" fill="#FFFFFF"/><rect x="0" y="10" width="1" height="1" fill="#808080"/><rect x="1" y="10" width="1" height="1" fill="#000000"/><rect x="2" y="10" width="9" height="1" fill="#FFFFFF"/><rect x="11" y="10" width="1" height="1" fill="#D4D0C8"/><rect x="12" y="10" width="1" height="1" fill="#FFFFFF"/><rect x="0" y="11" width="1" height="1" fill="#808080"/><rect x="1" y="11" width="11" height="1" fill="#D4D0C8"/><rect x="12" y="11" width="1" height="1" fill="#FFFFFF"/><rect x="0" y="12" width="13" height="1" fill="#FFFFFF"/></svg>
<svg class="a" style="left:37px;top:201px;" width="12" height="12" viewBox="0 0 12 12" shape-rendering="crispEdges"><rect x="4" y="0" width="4" height="1" fill="#808080"/><rect x="2" y="1" width="2" height="1" fill="#808080"/><rect x="4" y="1" width="4" height="1" fill="#000000"/><rect x="8" y="1" width="2" height="1" fill="#808080"/><rect x="1" y="2" width="1" height="1" fill="#808080"/><rect x="2" y="2" width="2" height="1" fill="#000000"/><rect x="4" y="2" width="4" height="1" fill="#FFFFFF"/><rect x="8" y="2" width="2" height="1" fill="#000000"/><rect x="10" y="2" width="1" height="1" fill="#FFFFFF"/><rect x="1" y="3" width="1" height="1" fill="#808080"/><rect x="2" y="3" width="1" height="1" fill="#000000"/><rect x="3" y="3" width="6" height="1" fill="#FFFFFF"/><rect x="9" y="3" width="1" height="1" fill="#D4D0C8"/><rect x="10" y="3" width="1" height="1" fill="#FFFFFF"/><rect x="0" y="4" width="1" height="1" fill="#808080"/><rect x="1" y="4" width="1" height="1" fill="#000000"/><rect x="2" y="4" width="3" height="1" fill="#FFFFFF"/><rect x="5" y="4" width="2" height="1" fill="#000000"/><rect x="7" y="4" width="3" height="1" fill="#FFFFFF"/><rect x="10" y="4" width="1" height="1" fill="#D4D0C8"/><rect x="11" y="4" width="1" height="1" fill="#FFFFFF"/><rect x="0" y="5" width="1" height="1" fill="#808080"/><rect x="1" y="5" width="1" height="1" fill="#000000"/><rect x="2" y="5" width="2" height="1" fill="#FFFFFF"/><rect x="4" y="5" width="4" height="1" fill="#000000"/><rect x="8" y="5" width="2" height="1" fill="#FFFFFF"/><rect x="10" y="5" width="1" height="1" fill="#D4D0C8"/><rect x="11" y="5" width="1" height="1" fill="#FFFFFF"/><rect x="0" y="6" width="1" height="1" fill="#808080"/><rect x="1" y="6" width="1" height="1" fill="#000000"/><rect x="2" y="6" width="2" height="1" fill="#FFFFFF"/><rect x="4" y="6" width="4" height="1" fill="#000000"/><rect x="8" y="6" width="2" height="1" fill="#FFFFFF"/><rect x="10" y="6" width="1" height="1" fill="#D4D0C8"/><rect x="11" y="6" width="1" height="1" fill="#FFFFFF"/><rect x="0" y="7" width="1" height="1" fill="#808080"/><rect x="1" y="7" width="1" height="1" fill="#000000"/><rect x="2" y="7" width="3" height="1" fill="#FFFFFF"/><rect x="5" y="7" width="2" height="1" fill="#000000"/><rect x="7" y="7" width="3" height="1" fill="#FFFFFF"/><rect x="10" y="7" width="1" height="1" fill="#D4D0C8"/><rect x="11" y="7" width="1" height="1" fill="#FFFFFF"/><rect x="1" y="8" width="1" height="1" fill="#808080"/><rect x="2" y="8" width="1" height="1" fill="#000000"/><rect x="3" y="8" width="6" height="1" fill="#FFFFFF"/><rect x="9" y="8" width="1" height="1" fill="#D4D0C8"/><rect x="10" y="8" width="1" height="1" fill="#FFFFFF"/><rect x="1" y="9" width="1" height="1" fill="#808080"/><rect x="2" y="9" width="2" height="1" fill="#D4D0C8"/><rect x="4" y="9" width="4" height="1" fill="#FFFFFF"/><rect x="8" y="9" width="2" height="1" fill="#D4D0C8"/><rect x="10" y="9" width="1" height="1" fill="#FFFFFF"/><rect x="2" y="10" width="2" height="1" fill="#FFFFFF"/><rect x="4" y="10" width="4" height="1" fill="#D4D0C8"/><rect x="8" y="10" width="2" height="1" fill="#FFFFFF"/><rect x="4" y="11" width="4" height="1" fill="#FFFFFF"/></svg>
<svg class="a" style="left:5px;top:226px;" width="19" height="17" viewBox="0 0 19 17" shape-rendering="crispEdges"><rect x="0" y="0" width="19" height="1" fill="#000000"/><rect x="0" y="1" width="1" height="1" fill="#000000"/><rect x="1" y="1" width="11" height="1" fill="#FFFFFF"/><rect x="12" y="1" width="2" height="1" fill="#000000"/><rect x="14" y="1" width="3" height="1" fill="#FFFFFF"/><rect x="17" y="1" width="2" height="1" fill="#000000"/><rect x="0" y="2" width="1" height="1" fill="#000000"/><rect x="1" y="2" width="11" height="1" fill="#FFFFFF"/><rect x="12" y="2" width="3" height="1" fill="#000000"/><rect x="15" y="2" width="1" height="1" fill="#FFFFFF"/><rect x="16" y="2" width="3" height="1" fill="#000000"/><rect x="0" y="3" width="1" height="1" fill="#000000"/><rect x="1" y="3" width="11" height="1" fill="#FFFFFF"/><rect x="12" y="3" width="7" height="1" fill="#000000"/><rect x="0" y="4" width="19" height="1" fill="#000000"/><rect x="0" y="5" width="1" height="1" fill="#000000"/><rect x="1" y="5" width="11" height="1" fill="#FFFFFF"/><rect x="12" y="5" width="1" height="1" fill="#000000"/><rect x="13" y="5" width="5" height="1" fill="#FFFFFF"/><rect x="18" y="5" width="1" height="1" fill="#000000"/><rect x="0" y="6" width="1" height="1" fill="#000000"/><rect x="1" y="6" width="11" height="1" fill="#FFFFFF"/><rect x="12" y="6" width="1" height="1" fill="#000000"/><rect x="13" y="6" width="1" height="1" fill="#FFFFFF"/><rect x="14" y="6" width="1" height="1" fill="#D4D0C8"/><rect x="15" y="6" width="1" height="1" fill="#000000"/><rect x="16" y="6" width="1" height="1" fill="#D4D0C8"/><rect x="17" y="6" width="1" height="1" fill="#808080"/><rect x="18" y="6" width="1" height="1" fill="#000000"/><rect x="0" y="7" width="1" height="1" fill="#000000"/><rect x="1" y="7" width="1" height="1" fill="#FFFFFF"/><rect x="2" y="7" width="7" height="1" fill="#000000"/><rect x="9" y="7" width="3" height="1" fill="#FFFFFF"/><rect x="12" y="7" width="1" height="1" fill="#000000"/><rect x="13" y="7" width="1" height="1" fill="#FFFFFF"/><rect x="14" y="7" width="3" height="1" fill="#000000"/><rect x="17" y="7" width="1" height="1" fill="#808080"/><rect x="18" y="7" width="1" height="1" fill="#000000"/><rect x="0" y="8" width="1" height="1" fill="#000000"/><rect x="1" y="8" width="11" height="1" fill="#FFFFFF"/><rect x="12" y="8" width="1" height="1" fill="#000000"/><rect x="13" y="8" width="1" height="1" fill="#FFFFFF"/><rect x="14" y="8" width="3" height="1" fill="#D4D0C8"/><rect x="17" y="8" width="1" height="1" fill="#808080"/><rect x="18" y="8" width="1" height="1" fill="#000000"/><rect x="0" y="9" width="1" height="1" fill="#000000"/><rect x="1" y="9" width="11" height="1" fill="#FFFFFF"/><rect x="12" y="9" width="1" height="1" fill="#000000"/><rect x="13" y="9" width="5" height="1" fill="#808080"/><rect x="18" y="9" width="1" height="1" fill="#000000"/><rect x="0" y="10" width="1" height="1" fill="#000000"/><rect x="1" y="10" width="1" height="1" fill="#FFFFFF"/><rect x="2" y="10" width="9" height="1" fill="#000000"/><rect x="11" y="10" width="1" height="1" fill="#FFFFFF"/><rect x="12" y="10" width="7" height="1" fill="#000000"/><rect x="0" y="11" width="1" height="1" fill="#000000"/><rect x="1" y="11" width="11" height="1" fill="#FFFFFF"/><rect x="12" y="11" width="1" height="1" fill="#000000"/><rect x="13" y="11" width="5" height="1" fill="#FFFFFF"/><rect x="18" y="11" width="1" height="1" fill="#000000"/><rect x="0" y="12" width="1" height="1" fill="#000000"/><rect x="1" y="12" width="11" height="1" fill="#FFFFFF"/><rect x="12" y="12" width="1" height="1" fill="#000000"/><rect x="13" y="12" width="1" height="1" fill="#FFFFFF"/><rect x="14" y="12" width="3" height="1" fill="#000000"/><rect x="17" y="12" width="1" height="1" fill="#808080"/><rect x="18" y="12" width="1" height="1" fill="#000000"/><rect x="0" y="13" width="1" height="1" fill="#000000"/><rect x="1" y="13" width="1" height="1" fill="#FFFFFF"/><rect x="2" y="13" width="8" height="1" fill="#000000"/><rect x="10" y="13" width="2" height="1" fill="#FFFFFF"/><rect x="12" y="13" width="1" height="1" fill="#000000"/><rect x="13" y="13" width="1" height="1" fill="#FFFFFF"/><rect x="14" y="13" width="1" height="1" fill="#D4D0C8"/><rect x="15" y="13" width="1" height="1" fill="#000000"/><rect x="16" y="13" width="1" height="1" fill="#D4D0C8"/><rect x="17" y="13" width="1" height="1" fill="#808080"/><rect x="18" y="13" width="1" height="1" fill="#000000"/><rect x="0" y="14" width="1" height="1" fill="#000000"/><rect x="1" y="14" width="11" height="1" fill="#FFFFFF"/><rect x="12" y="14" width="1" height="1" fill="#000000"/><rect x="13" y="14" width="1" height="1" fill="#FFFFFF"/><rect x="14" y="14" width="3" height="1" fill="#D4D0C8"/><rect x="17" y="14" width="1" height="1" fill="#808080"/><rect x="18" y="14" width="1" height="1" fill="#000000"/><rect x="0" y="15" width="1" height="1" fill="#000000"/><rect x="1" y="15" width="11" height="1" fill="#FFFFFF"/><rect x="12" y="15" width="1" height="1" fill="#000000"/><rect x="13" y="15" width="5" height="1" fill="#808080"/><rect x="18" y="15" width="1" height="1" fill="#000000"/><rect x="0" y="16" width="19" height="1" fill="#000000"/></svg>
<svg class="a" style="left:33px;top:229px;" width="19" height="13" viewBox="0 0 19 13" shape-rendering="crispEdges"><rect x="0" y="0" width="19" height="1" fill="#000000"/><rect x="0" y="1" width="1" height="1" fill="#000000"/><rect x="1" y="1" width="11" height="1" fill="#FFFFFF"/><rect x="12" y="1" width="1" height="1" fill="#000000"/><rect x="13" y="1" width="5" height="1" fill="#FFFFFF"/><rect x="18" y="1" width="1" height="1" fill="#000000"/><rect x="0" y="2" width="1" height="1" fill="#000000"/><rect x="1" y="2" width="11" height="1" fill="#FFFFFF"/><rect x="12" y="2" width="1" height="1" fill="#000000"/><rect x="13" y="2" width="1" height="1" fill="#FFFFFF"/><rect x="14" y="2" width="1" height="1" fill="#D4D0C8"/><rect x="15" y="2" width="1" height="1" fill="#000000"/><rect x="16" y="2" width="1" height="1" fill="#D4D0C8"/><rect x="17" y="2" width="1" height="1" fill="#808080"/><rect x="18" y="2" width="1" height="1" fill="#000000"/><rect x="0" y="3" width="1" height="1" fill="#000000"/><rect x="1" y="3" width="1" height="1" fill="#FFFFFF"/><rect x="2" y="3" width="7" height="1" fill="#000000"/><rect x="9" y="3" width="3" height="1" fill="#FFFFFF"/><rect x="12" y="3" width="1" height="1" fill="#000000"/><rect x="13" y="3" width="1" height="1" fill="#FFFFFF"/><rect x="14" y="3" width="3" height="1" fill="#000000"/><rect x="17" y="3" width="1" height="1" fill="#808080"/><rect x="18" y="3" width="1" height="1" fill="#000000"/><rect x="0" y="4" width="1" height="1" fill="#000000"/><rect x="1" y="4" width="11" height="1" fill="#FFFFFF"/><rect x="12" y="4" width="1" height="1" fill="#000000"/><rect x="13" y="4" width="1" height="1" fill="#FFFFFF"/><rect x="14" y="4" width="3" height="1" fill="#D4D0C8"/><rect x="17" y="4" width="1" height="1" fill="#808080"/><rect x="18" y="4" width="1" height="1" fill="#000000"/><rect x="0" y="5" width="1" height="1" fill="#000000"/><rect x="1" y="5" width="11" height="1" fill="#FFFFFF"/><rect x="12" y="5" width="1" height="1" fill="#000000"/><rect x="13" y="5" width="5" height="1" fill="#808080"/><rect x="18" y="5" width="1" height="1" fill="#000000"/><rect x="0" y="6" width="1" height="1" fill="#000000"/><rect x="1" y="6" width="1" height="1" fill="#FFFFFF"/><rect x="2" y="6" width="9" height="1" fill="#000000"/><rect x="11" y="6" width="1" height="1" fill="#FFFFFF"/><rect x="12" y="6" width="7" height="1" fill="#000000"/><rect x="0" y="7" width="1" height="1" fill="#000000"/><rect x="1" y="7" width="11" height="1" fill="#FFFFFF"/><rect x="12" y="7" width="1" height="1" fill="#000000"/><rect x="13" y="7" width="5" height="1" fill="#FFFFFF"/><rect x="18" y="7" width="1" height="1" fill="#000000"/><rect x="0" y="8" width="1" height="1" fill="#000000"/><rect x="1" y="8" width="11" height="1" fill="#FFFFFF"/><rect x="12" y="8" width="1" height="1" fill="#000000"/><rect x="13" y="8" width="1" height="1" fill="#FFFFFF"/><rect x="14" y="8" width="3" height="1" fill="#000000"/><rect x="17" y="8" width="1" height="1" fill="#808080"/><rect x="18" y="8" width="1" height="1" fill="#000000"/><rect x="0" y="9" width="1" height="1" fill="#000000"/><rect x="1" y="9" width="1" height="1" fill="#FFFFFF"/><rect x="2" y="9" width="8" height="1" fill="#000000"/><rect x="10" y="9" width="2" height="1" fill="#FFFFFF"/><rect x="12" y="9" width="1" height="1" fill="#000000"/><rect x="13" y="9" width="1" height="1" fill="#FFFFFF"/><rect x="14" y="9" width="1" height="1" fill="#D4D0C8"/><rect x="15" y="9" width="1" height="1" fill="#000000"/><rect x="16" y="9" width="1" height="1" fill="#D4D0C8"/><rect x="17" y="9" width="1" height="1" fill="#808080"/><rect x="18" y="9" width="1" height="1" fill="#000000"/><rect x="0" y="10" width="1" height="1" fill="#000000"/><rect x="1" y="10" width="11" height="1" fill="#FFFFFF"/><rect x="12" y="10" width="1" height="1" fill="#000000"/><rect x="13" y="10" width="1" height="1" fill="#FFFFFF"/><rect x="14" y="10" width="3" height="1" fill="#D4D0C8"/><rect x="17" y="10" width="1" height="1" fill="#808080"/><rect x="18" y="10" width="1" height="1" fill="#000000"/><rect x="0" y="11" width="1" height="1" fill="#000000"/><rect x="1" y="11" width="11" height="1" fill="#FFFFFF"/><rect x="12" y="11" width="1" height="1" fill="#000000"/><rect x="13" y="11" width="5" height="1" fill="#808080"/><rect x="18" y="11" width="1" height="1" fill="#000000"/><rect x="0" y="12" width="19" height="1" fill="#000000"/></svg>
<svg class="a" style="left:4px;top:258px;" width="21" height="9" viewBox="0 0 21 9" shape-rendering="crispEdges"><rect x="0" y="0" width="10" height="1" fill="#FFFFFF"/><rect x="11" y="0" width="1" height="1" fill="#FFFFFF"/><rect x="13" y="0" width="8" height="1" fill="#FFFFFF"/><rect x="0" y="1" width="1" height="1" fill="#FFFFFF"/><rect x="1" y="1" width="7" height="1" fill="#D4D0C8"/><rect x="8" y="1" width="1" height="1" fill="#000000"/><rect x="9" y="1" width="2" height="1" fill="#FFFFFF"/><rect x="12" y="1" width="2" height="1" fill="#FFFFFF"/><rect x="14" y="1" width="6" height="1" fill="#D4D0C8"/><rect x="20" y="1" width="1" height="1" fill="#000000"/><rect x="0" y="2" width="1" height="1" fill="#FFFFFF"/><rect x="1" y="2" width="4" height="1" fill="#D4D0C8"/><rect x="5" y="2" width="1" height="1" fill="#000000"/><rect x="6" y="2" width="2" height="1" fill="#D4D0C8"/><rect x="8" y="2" width="1" height="1" fill="#000000"/><rect x="9" y="2" width="1" height="1" fill="#FFFFFF"/><rect x="11" y="2" width="1" height="1" fill="#FFFFFF"/><rect x="13" y="2" width="1" height="1" fill="#FFFFFF"/><rect x="14" y="2" width="2" height="1" fill="#D4D0C8"/><rect x="16" y="2" width="1" height="1" fill="#000000"/><rect x="17" y="2" width="3" height="1" fill="#D4D0C8"/><rect x="20" y="2" width="1" height="1" fill="#000000"/><rect x="0" y="3" width="1" height="1" fill="#FFFFFF"/><rect x="1" y="3" width="3" height="1" fill="#D4D0C8"/><rect x="4" y="3" width="2" height="1" fill="#000000"/><rect x="6" y="3" width="2" height="1" fill="#D4D0C8"/><rect x="8" y="3" width="1" height="1" fill="#000000"/><rect x="9" y="3" width="2" height="1" fill="#FFFFFF"/><rect x="12" y="3" width="2" height="1" fill="#FFFFFF"/><rect x="14" y="3" width="2" height="1" fill="#D4D0C8"/><rect x="16" y="3" width="2" height="1" fill="#000000"/><rect x="18" y="3" width="2" height="1" fill="#D4D0C8"/><rect x="20" y="3" width="1" height="1" fill="#000000"/><rect x="0" y="4" width="1" height="1" fill="#FFFFFF"/><rect x="1" y="4" width="2" height="1" fill="#D4D0C8"/><rect x="3" y="4" width="3" height="1" fill="#000000"/><rect x="6" y="4" width="2" height="1" fill="#D4D0C8"/><rect x="8" y="4" width="1" height="1" fill="#000000"/><rect x="9" y="4" width="1" height="1" fill="#FFFFFF"/><rect x="11" y="4" width="1" height="1" fill="#FFFFFF"/><rect x="13" y="4" width="1" height="1" fill="#FFFFFF"/><rect x="14" y="4" width="2" height="1" fill="#D4D0C8"/><rect x="16" y="4" width="3" height="1" fill="#000000"/><rect x="19" y="4" width="1" height="1" fill="#D4D0C8"/><rect x="20" y="4" width="1" height="1" fill="#000000"/><rect x="0" y="5" width="1" height="1" fill="#FFFFFF"/><rect x="1" y="5" width="3" height="1" fill="#D4D0C8"/><rect x="4" y="5" width="2" height="1" fill="#000000"/><rect x="6" y="5" width="2" height="1" fill="#D4D0C8"/><rect x="8" y="5" width="1" height="1" fill="#000000"/><rect x="9" y="5" width="2" height="1" fill="#FFFFFF"/><rect x="12" y="5" width="2" height="1" fill="#FFFFFF"/><rect x="14" y="5" width="2" height="1" fill="#D4D0C8"/><rect x="16" y="5" width="2" height="1" fill="#000000"/><rect x="18" y="5" width="2" height="1" fill="#D4D0C8"/><rect x="20" y="5" width="1" height="1" fill="#000000"/><rect x="0" y="6" width="1" height="1" fill="#FFFFFF"/><rect x="1" y="6" width="4" height="1" fill="#D4D0C8"/><rect x="5" y="6" width="1" height="1" fill="#000000"/><rect x="6" y="6" width="2" height="1" fill="#D4D0C8"/><rect x="8" y="6" width="1" height="1" fill="#000000"/><rect x="9" y="6" width="1" height="1" fill="#FFFFFF"/><rect x="11" y="6" width="1" height="1" fill="#FFFFFF"/><rect x="13" y="6" width="1" height="1" fill="#FFFFFF"/><rect x="14" y="6" width="2" height="1" fill="#D4D0C8"/><rect x="16" y="6" width="1" height="1" fill="#000000"/><rect x="17" y="6" width="3" height="1" fill="#D4D0C8"/><rect x="20" y="6" width="1" height="1" fill="#000000"/><rect x="0" y="7" width="1" height="1" fill="#FFFFFF"/><rect x="1" y="7" width="7" height="1" fill="#D4D0C8"/><rect x="8" y="7" width="1" height="1" fill="#000000"/><rect x="9" y="7" width="2" height="1" fill="#FFFFFF"/><rect x="12" y="7" width="2" height="1" fill="#FFFFFF"/><rect x="14" y="7" width="6" height="1" fill="#D4D0C8"/><rect x="20" y="7" width="1" height="1" fill="#000000"/><rect x="0" y="8" width="9" height="1" fill="#000000"/><rect x="9" y="8" width="1" height="1" fill="#FFFFFF"/><rect x="11" y="8" width="1" height="1" fill="#FFFFFF"/><rect x="13" y="8" width="8" height="1" fill="#000000"/></svg>
<svg class="a" style="left:39px;top:253px;" width="8" height="20" viewBox="0 0 8 20" shape-rendering="crispEdges"><rect x="0" y="0" width="7" height="1" fill="#FFFFFF"/><rect x="7" y="0" width="1" height="1" fill="#000000"/><rect x="0" y="1" width="1" height="1" fill="#FFFFFF"/><rect x="1" y="1" width="6" height="1" fill="#D4D0C8"/><rect x="7" y="1" width="1" height="1" fill="#000000"/><rect x="0" y="2" width="1" height="1" fill="#FFFFFF"/><rect x="1" y="2" width="3" height="1" fill="#D4D0C8"/><rect x="4" y="2" width="1" height="1" fill="#000000"/><rect x="5" y="2" width="2" height="1" fill="#D4D0C8"/><rect x="7" y="2" width="1" height="1" fill="#000000"/><rect x="0" y="3" width="1" height="1" fill="#FFFFFF"/><rect x="1" y="3" width="2" height="1" fill="#D4D0C8"/><rect x="3" y="3" width="3" height="1" fill="#000000"/><rect x="6" y="3" width="1" height="1" fill="#D4D0C8"/><rect x="7" y="3" width="1" height="1" fill="#000000"/><rect x="0" y="4" width="1" height="1" fill="#FFFFFF"/><rect x="1" y="4" width="1" height="1" fill="#D4D0C8"/><rect x="2" y="4" width="6" height="1" fill="#000000"/><rect x="0" y="5" width="1" height="1" fill="#FFFFFF"/><rect x="1" y="5" width="6" height="1" fill="#D4D0C8"/><rect x="7" y="5" width="1" height="1" fill="#000000"/><rect x="0" y="6" width="1" height="1" fill="#FFFFFF"/><rect x="1" y="6" width="6" height="1" fill="#D4D0C8"/><rect x="7" y="6" width="1" height="1" fill="#000000"/><rect x="0" y="7" width="8" height="1" fill="#000000"/><rect x="0" y="8" width="1" height="1" fill="#FFFFFF"/><rect x="2" y="8" width="1" height="1" fill="#FFFFFF"/><rect x="4" y="8" width="1" height="1" fill="#FFFFFF"/><rect x="6" y="8" width="1" height="1" fill="#FFFFFF"/><rect x="1" y="9" width="1" height="1" fill="#FFFFFF"/><rect x="3" y="9" width="1" height="1" fill="#FFFFFF"/><rect x="5" y="9" width="1" height="1" fill="#FFFFFF"/><rect x="7" y="9" width="1" height="1" fill="#FFFFFF"/><rect x="0" y="10" width="1" height="1" fill="#FFFFFF"/><rect x="2" y="10" width="1" height="1" fill="#FFFFFF"/><rect x="4" y="10" width="1" height="1" fill="#FFFFFF"/><rect x="6" y="10" width="1" height="1" fill="#FFFFFF"/><rect x="1" y="11" width="1" height="1" fill="#FFFFFF"/><rect x="3" y="11" width="1" height="1" fill="#FFFFFF"/><rect x="5" y="11" width="1" height="1" fill="#FFFFFF"/><rect x="7" y="11" width="1" height="1" fill="#FFFFFF"/><rect x="0" y="12" width="7" height="1" fill="#FFFFFF"/><rect x="7" y="12" width="1" height="1" fill="#000000"/><rect x="0" y="13" width="1" height="1" fill="#FFFFFF"/><rect x="1" y="13" width="6" height="1" fill="#D4D0C8"/><rect x="7" y="13" width="1" height="1" fill="#000000"/><rect x="0" y="14" width="1" height="1" fill="#FFFFFF"/><rect x="1" y="14" width="1" height="1" fill="#D4D0C8"/><rect x="2" y="14" width="6" height="1" fill="#000000"/><rect x="0" y="15" width="1" height="1" fill="#FFFFFF"/><rect x="1" y="15" width="2" height="1" fill="#D4D0C8"/><rect x="3" y="15" width="3" height="1" fill="#000000"/><rect x="6" y="15" width="1" height="1" fill="#D4D0C8"/><rect x="7" y="15" width="1" height="1" fill="#000000"/><rect x="0" y="16" width="1" height="1" fill="#FFFFFF"/><rect x="1" y="16" width="3" height="1" fill="#D4D0C8"/><rect x="4" y="16" width="1" height="1" fill="#000000"/><rect x="5" y="16" width="2" height="1" fill="#D4D0C8"/><rect x="7" y="16" width="1" height="1" fill="#000000"/><rect x="0" y="17" width="1" height="1" fill="#FFFFFF"/><rect x="1" y="17" width="6" height="1" fill="#D4D0C8"/><rect x="7" y="17" width="1" height="1" fill="#000000"/><rect x="0" y="18" width="1" height="1" fill="#FFFFFF"/><rect x="1" y="18" width="6" height="1" fill="#D4D0C8"/><rect x="7" y="18" width="1" height="1" fill="#000000"/><rect x="0" y="19" width="8" height="1" fill="#000000"/></svg>
<svg class="a" style="left:6px;top:280px;" width="17" height="18" viewBox="0 0 17 18" shape-rendering="crispEdges"><rect x="6" y="0" width="5" height="1" fill="#000000"/><rect x="6" y="1" width="1" height="1" fill="#000000"/><rect x="7" y="1" width="1" height="1" fill="#FFFFFF"/><rect x="8" y="1" width="1" height="1" fill="#000000"/><rect x="9" y="1" width="1" height="1" fill="#FFFFFF"/><rect x="10" y="1" width="1" height="1" fill="#000000"/><rect x="8" y="2" width="1" height="1" fill="#000000"/><rect x="4" y="3" width="9" height="1" fill="#000000"/><rect x="2" y="4" width="3" height="1" fill="#000000"/><rect x="5" y="4" width="1" height="1" fill="#C0C0C0"/><rect x="6" y="4" width="5" height="1" fill="#FFFFFF"/><rect x="11" y="4" width="1" height="1" fill="#C0C0C0"/><rect x="12" y="4" width="3" height="1" fill="#000000"/><rect x="1" y="5" width="1" height="1" fill="#000000"/><rect x="2" y="5" width="1" height="1" fill="#C0C0C0"/><rect x="3" y="5" width="3" height="1" fill="#FFFFFF"/><rect x="6" y="5" width="1" height="1" fill="#000000"/><rect x="7" y="5" width="6" height="1" fill="#FFFFFF"/><rect x="13" y="5" width="1" height="1" fill="#C0C0C0"/><rect x="14" y="5" width="1" height="1" fill="#000000"/><rect x="1" y="6" width="1" height="1" fill="#000000"/><rect x="2" y="6" width="8" height="1" fill="#FFFFFF"/><rect x="10" y="6" width="1" height="1" fill="#000000"/><rect x="11" y="6" width="3" height="1" fill="#FFFFFF"/><rect x="14" y="6" width="1" height="1" fill="#000000"/><rect x="0" y="7" width="1" height="1" fill="#000000"/><rect x="1" y="7" width="1" height="1" fill="#C0C0C0"/><rect x="2" y="7" width="1" height="1" fill="#FFFFFF"/><rect x="3" y="7" width="1" height="1" fill="#000000"/><rect x="4" y="7" width="5" height="1" fill="#FFFFFF"/><rect x="9" y="7" width="1" height="1" fill="#000000"/><rect x="10" y="7" width="2" height="1" fill="#FFFFFF"/><rect x="12" y="7" width="1" height="1" fill="#000000"/><rect x="13" y="7" width="1" height="1" fill="#FFFFFF"/><rect x="14" y="7" width="1" height="1" fill="#C0C0C0"/><rect x="15" y="7" width="1" height="1" fill="#000000"/><rect x="0" y="8" width="1" height="1" fill="#000000"/><rect x="1" y="8" width="7" height="1" fill="#FFFFFF"/><rect x="8" y="8" width="1" height="1" fill="#000000"/><rect x="9" y="8" width="6" height="1" fill="#FFFFFF"/><rect x="15" y="8" width="1" height="1" fill="#000000"/><rect x="0" y="9" width="1" height="1" fill="#000000"/><rect x="1" y="9" width="6" height="1" fill="#FFFFFF"/><rect x="7" y="9" width="1" height="1" fill="#000000"/><rect x="8" y="9" width="7" height="1" fill="#FFFFFF"/><rect x="15" y="9" width="1" height="1" fill="#000000"/><rect x="0" y="10" width="1" height="1" fill="#000000"/><rect x="1" y="10" width="1" height="1" fill="#FFFFFF"/><rect x="2" y="10" width="1" height="1" fill="#000000"/><rect x="3" y="10" width="4" height="1" fill="#FFFFFF"/><rect x="7" y="10" width="1" height="1" fill="#000000"/><rect x="8" y="10" width="5" height="1" fill="#FFFFFF"/><rect x="13" y="10" width="1" height="1" fill="#000000"/><rect x="14" y="10" width="1" height="1" fill="#FFFFFF"/><rect x="15" y="10" width="1" height="1" fill="#000000"/><rect x="0" y="11" width="1" height="1" fill="#000000"/><rect x="1" y="11" width="14" height="1" fill="#FFFFFF"/><rect x="15" y="11" width="1" height="1" fill="#000000"/><rect x="0" y="12" width="1" height="1" fill="#000000"/><rect x="1" y="12" width="1" height="1" fill="#C0C0C0"/><rect x="2" y="12" width="12" height="1" fill="#FFFFFF"/><rect x="14" y="12" width="1" height="1" fill="#C0C0C0"/><rect x="15" y="12" width="1" height="1" fill="#000000"/><rect x="1" y="13" width="1" height="1" fill="#000000"/><rect x="2" y="13" width="1" height="1" fill="#FFFFFF"/><rect x="3" y="13" width="1" height="1" fill="#000000"/><rect x="4" y="13" width="4" height="1" fill="#FFFFFF"/><rect x="8" y="13" width="1" height="1" fill="#000000"/><rect x="9" y="13" width="3" height="1" fill="#FFFFFF"/><rect x="12" y="13" width="1" height="1" fill="#000000"/><rect x="13" y="13" width="1" height="1" fill="#FFFFFF"/><rect x="14" y="13" width="1" height="1" fill="#000000"/><rect x="1" y="14" width="1" height="1" fill="#000000"/><rect x="2" y="14" width="1" height="1" fill="#C0C0C0"/><rect x="3" y="14" width="10" height="1" fill="#FFFFFF"/><rect x="13" y="14" width="1" height="1" fill="#C0C0C0"/><rect x="14" y="14" width="1" height="1" fill="#000000"/><rect x="2" y="15" width="2" height="1" fill="#000000"/><rect x="4" y="15" width="1" height="1" fill="#C0C0C0"/><rect x="5" y="15" width="6" height="1" fill="#FFFFFF"/><rect x="11" y="15" width="1" height="1" fill="#C0C0C0"/><rect x="12" y="15" width="2" height="1" fill="#000000"/><rect x="3" y="16" width="10" height="1" fill="#000000"/><rect x="4" y="17" width="8" height="1" fill="#000000"/></svg>
<svg class="a" style="left:33px;top:285px;" width="18" height="11" viewBox="0 0 18 11" shape-rendering="crispEdges"><rect x="1" y="0" width="16" height="1" fill="#000000"/><rect x="0" y="1" width="1" height="1" fill="#000000"/><rect x="1" y="1" width="15" height="1" fill="#FFFFFF"/><rect x="16" y="1" width="1" height="1" fill="#808080"/><rect x="17" y="1" width="1" height="1" fill="#000000"/><rect x="0" y="2" width="1" height="1" fill="#000000"/><rect x="1" y="2" width="1" height="1" fill="#FFFFFF"/><rect x="2" y="2" width="12" height="1" fill="#D4D0C8"/><rect x="14" y="2" width="1" height="1" fill="#00FF00"/><rect x="15" y="2" width="1" height="1" fill="#D4D0C8"/><rect x="16" y="2" width="1" height="1" fill="#808080"/><rect x="17" y="2" width="1" height="1" fill="#000000"/><rect x="0" y="3" width="1" height="1" fill="#000000"/><rect x="1" y="3" width="1" height="1" fill="#FFFFFF"/><rect x="2" y="3" width="14" height="1" fill="#D4D0C8"/><rect x="16" y="3" width="1" height="1" fill="#808080"/><rect x="17" y="3" width="1" height="1" fill="#000000"/><rect x="0" y="4" width="1" height="1" fill="#000000"/><rect x="1" y="4" width="1" height="1" fill="#FFFFFF"/><rect x="2" y="4" width="14" height="1" fill="#D4D0C8"/><rect x="16" y="4" width="1" height="1" fill="#808080"/><rect x="17" y="4" width="1" height="1" fill="#000000"/><rect x="0" y="5" width="1" height="1" fill="#000000"/><rect x="1" y="5" width="1" height="1" fill="#FFFFFF"/><rect x="2" y="5" width="13" height="1" fill="#808080"/><rect x="15" y="5" width="1" height="1" fill="#D4D0C8"/><rect x="16" y="5" width="1" height="1" fill="#808080"/><rect x="17" y="5" width="1" height="1" fill="#000000"/><rect x="0" y="6" width="1" height="1" fill="#000000"/><rect x="1" y="6" width="14" height="1" fill="#FFFFFF"/><rect x="15" y="6" width="1" height="1" fill="#D4D0C8"/><rect x="16" y="6" width="1" height="1" fill="#808080"/><rect x="17" y="6" width="1" height="1" fill="#000000"/><rect x="0" y="7" width="1" height="1" fill="#000000"/><rect x="1" y="7" width="1" height="1" fill="#FFFFFF"/><rect x="2" y="7" width="14" height="1" fill="#D4D0C8"/><rect x="16" y="7" width="1" height="1" fill="#808080"/><rect x="17" y="7" width="1" height="1" fill="#000000"/><rect x="0" y="8" width="1" height="1" fill="#000000"/><rect x="1" y="8" width="1" height="1" fill="#FFFFFF"/><rect x="2" y="8" width="14" height="1" fill="#D4D0C8"/><rect x="16" y="8" width="1" height="1" fill="#808080"/><rect x="17" y="8" width="1" height="1" fill="#000000"/><rect x="0" y="9" width="1" height="1" fill="#000000"/><rect x="1" y="9" width="16" height="1" fill="#808080"/><rect x="17" y="9" width="1" height="1" fill="#000000"/><rect x="1" y="10" width="16" height="1" fill="#000000"/></svg>
<svg class="a" style="left:6px;top:312px;" width="17" height="13" viewBox="0 0 17 13" shape-rendering="crispEdges"><rect x="2" y="0" width="5" height="1" fill="#606060"/><rect x="1" y="1" width="1" height="1" fill="#606060"/><rect x="2" y="1" width="1" height="1" fill="#FFFF80"/><rect x="3" y="1" width="1" height="1" fill="#E8E070"/><rect x="4" y="1" width="1" height="1" fill="#FFFF80"/><rect x="5" y="1" width="1" height="1" fill="#E8E070"/><rect x="6" y="1" width="1" height="1" fill="#FFFF80"/><rect x="7" y="1" width="1" height="1" fill="#606060"/><rect x="0" y="2" width="1" height="1" fill="#606060"/><rect x="1" y="2" width="1" height="1" fill="#E8E070"/><rect x="2" y="2" width="1" height="1" fill="#FFFF80"/><rect x="3" y="2" width="1" height="1" fill="#E8E070"/><rect x="4" y="2" width="1" height="1" fill="#FFFF80"/><rect x="5" y="2" width="1" height="1" fill="#E8E070"/><rect x="6" y="2" width="1" height="1" fill="#FFFF80"/><rect x="7" y="2" width="1" height="1" fill="#E8E070"/><rect x="8" y="2" width="8" height="1" fill="#606060"/><rect x="0" y="3" width="1" height="1" fill="#606060"/><rect x="1" y="3" width="1" height="1" fill="#FFFF80"/><rect x="2" y="3" width="1" height="1" fill="#E8E070"/><rect x="3" y="3" width="1" height="1" fill="#FFFF80"/><rect x="4" y="3" width="1" height="1" fill="#E8E070"/><rect x="5" y="3" width="1" height="1" fill="#FFFF80"/><rect x="6" y="3" width="1" height="1" fill="#E8E070"/><rect x="7" y="3" width="1" height="1" fill="#FFFF80"/><rect x="8" y="3" width="1" height="1" fill="#E8E070"/><rect x="9" y="3" width="1" height="1" fill="#FFFF80"/><rect x="10" y="3" width="1" height="1" fill="#E8E070"/><rect x="11" y="3" width="1" height="1" fill="#FFFF80"/><rect x="12" y="3" width="1" height="1" fill="#E8E070"/><rect x="13" y="3" width="1" height="1" fill="#FFFF80"/><rect x="14" y="3" width="1" height="1" fill="#E8E070"/><rect x="15" y="3" width="1" height="1" fill="#FFFF80"/><rect x="16" y="3" width="1" height="1" fill="#606060"/><rect x="0" y="4" width="1" height="1" fill="#606060"/><rect x="1" y="4" width="1" height="1" fill="#E8E070"/><rect x="2" y="4" width="1" height="1" fill="#FFFF80"/><rect x="3" y="4" width="1" height="1" fill="#E8E070"/><rect x="4" y="4" width="1" height="1" fill="#FFFF80"/><rect x="5" y="4" width="1" height="1" fill="#E8E070"/><rect x="6" y="4" width="1" height="1" fill="#FFFF80"/><rect x="7" y="4" width="1" height="1" fill="#E8E070"/><rect x="8" y="4" width="1" height="1" fill="#FFFF80"/><rect x="9" y="4" width="1" height="1" fill="#E8E070"/><rect x="10" y="4" width="1" height="1" fill="#FFFF80"/><rect x="11" y="4" width="1" height="1" fill="#E8E070"/><rect x="12" y="4" width="1" height="1" fill="#FFFF80"/><rect x="13" y="4" width="1" height="1" fill="#E8E070"/><rect x="14" y="4" width="1" height="1" fill="#FFFF80"/><rect x="15" y="4" width="1" height="1" fill="#E8E070"/><rect x="16" y="4" width="1" height="1" fill="#606060"/><rect x="0" y="5" width="1" height="1" fill="#606060"/><rect x="1" y="5" width="1" height="1" fill="#FFFF80"/><rect x="2" y="5" width="1" height="1" fill="#E8E070"/><rect x="3" y="5" width="1" height="1" fill="#FFFF80"/><rect x="4" y="5" width="1" height="1" fill="#E8E070"/><rect x="5" y="5" width="1" height="1" fill="#FFFF80"/><rect x="6" y="5" width="1" height="1" fill="#E8E070"/><rect x="7" y="5" width="1" height="1" fill="#FFFF80"/><rect x="8" y="5" width="1" height="1" fill="#E8E070"/><rect x="9" y="5" width="1" height="1" fill="#FFFF80"/><rect x="10" y="5" width="1" height="1" fill="#E8E070"/><rect x="11" y="5" width="1" height="1" fill="#FFFF80"/><rect x="12" y="5" width="1" height="1" fill="#E8E070"/><rect x="13" y="5" width="1" height="1" fill="#FFFF80"/><rect x="14" y="5" width="1" height="1" fill="#E8E070"/><rect x="15" y="5" width="1" height="1" fill="#FFFF80"/><rect x="16" y="5" width="1" height="1" fill="#606060"/><rect x="0" y="6" width="1" height="1" fill="#606060"/><rect x="1" y="6" width="1" height="1" fill="#E8E070"/><rect x="2" y="6" width="1" height="1" fill="#FFFF80"/><rect x="3" y="6" width="1" height="1" fill="#E8E070"/><rect x="4" y="6" width="1" height="1" fill="#FFFF80"/><rect x="5" y="6" width="1" height="1" fill="#E8E070"/><rect x="6" y="6" width="1" height="1" fill="#FFFF80"/><rect x="7" y="6" width="1" height="1" fill="#E8E070"/><rect x="8" y="6" width="1" height="1" fill="#FFFF80"/><rect x="9" y="6" width="1" height="1" fill="#E8E070"/><rect x="10" y="6" width="1" height="1" fill="#FFFF80"/><rect x="11" y="6" width="1" height="1" fill="#E8E070"/><rect x="12" y="6" width="1" height="1" fill="#FFFF80"/><rect x="13" y="6" width="1" height="1" fill="#E8E070"/><rect x="14" y="6" width="1" height="1" fill="#FFFF80"/><rect x="15" y="6" width="1" height="1" fill="#E8E070"/><rect x="16" y="6" width="1" height="1" fill="#606060"/><rect x="0" y="7" width="1" height="1" fill="#606060"/><rect x="1" y="7" width="1" height="1" fill="#FFFF80"/><rect x="2" y="7" width="1" height="1" fill="#E8E070"/><rect x="3" y="7" width="1" height="1" fill="#FFFF80"/><rect x="4" y="7" width="1" height="1" fill="#E8E070"/><rect x="5" y="7" width="1" height="1" fill="#FFFF80"/><rect x="6" y="7" width="1" height="1" fill="#E8E070"/><rect x="7" y="7" width="1" height="1" fill="#FFFF80"/><rect x="8" y="7" width="1" height="1" fill="#E8E070"/><rect x="9" y="7" width="1" height="1" fill="#FFFF80"/><rect x="10" y="7" width="1" height="1" fill="#E8E070"/><rect x="11" y="7" width="1" height="1" fill="#FFFF80"/><rect x="12" y="7" width="1" height="1" fill="#E8E070"/><rect x="13" y="7" width="1" height="1" fill="#FFFF80"/><rect x="14" y="7" width="1" height="1" fill="#E8E070"/><rect x="15" y="7" width="1" height="1" fill="#FFFF80"/><rect x="16" y="7" width="1" height="1" fill="#606060"/><rect x="0" y="8" width="1" height="1" fill="#606060"/><rect x="1" y="8" width="1" height="1" fill="#E8E070"/><rect x="2" y="8" width="1" height="1" fill="#FFFF80"/><rect x="3" y="8" width="1" height="1" fill="#E8E070"/><rect x="4" y="8" width="1" height="1" fill="#FFFF80"/><rect x="5" y="8" width="1" height="1" fill="#E8E070"/><rect x="6" y="8" width="1" height="1" fill="#FFFF80"/><rect x="7" y="8" width="1" height="1" fill="#E8E070"/><rect x="8" y="8" width="1" height="1" fill="#FFFF80"/><rect x="9" y="8" width="1" height="1" fill="#E8E070"/><rect x="10" y="8" width="1" height="1" fill="#FFFF80"/><rect x="11" y="8" width="1" height="1" fill="#E8E070"/><rect x="12" y="8" width="1" height="1" fill="#FFFF80"/><rect x="13" y="8" width="1" height="1" fill="#E8E070"/><rect x="14" y="8" width="1" height="1" fill="#FFFF80"/><rect x="15" y="8" width="1" height="1" fill="#E8E070"/><rect x="16" y="8" width="1" height="1" fill="#606060"/><rect x="0" y="9" width="1" height="1" fill="#606060"/><rect x="1" y="9" width="1" height="1" fill="#FFFF80"/><rect x="2" y="9" width="1" height="1" fill="#E8E070"/><rect x="3" y="9" width="1" height="1" fill="#FFFF80"/><rect x="4" y="9" width="1" height="1" fill="#E8E070"/><rect x="5" y="9" width="1" height="1" fill="#FFFF80"/><rect x="6" y="9" width="1" height="1" fill="#E8E070"/><rect x="7" y="9" width="1" height="1" fill="#FFFF80"/><rect x="8" y="9" width="1" height="1" fill="#E8E070"/><rect x="9" y="9" width="1" height="1" fill="#FFFF80"/><rect x="10" y="9" width="1" height="1" fill="#E8E070"/><rect x="11" y="9" width="1" height="1" fill="#FFFF80"/><rect x="12" y="9" width="1" height="1" fill="#E8E070"/><rect x="13" y="9" width="1" height="1" fill="#FFFF80"/><rect x="14" y="9" width="1" height="1" fill="#E8E070"/><rect x="15" y="9" width="1" height="1" fill="#FFFF80"/><rect x="16" y="9" width="1" height="1" fill="#606060"/><rect x="0" y="10" width="1" height="1" fill="#606060"/><rect x="1" y="10" width="1" height="1" fill="#E8E070"/><rect x="2" y="10" width="1" height="1" fill="#FFFF80"/><rect x="3" y="10" width="1" height="1" fill="#E8E070"/><rect x="4" y="10" width="1" height="1" fill="#FFFF80"/><rect x="5" y="10" width="1" height="1" fill="#E8E070"/><rect x="6" y="10" width="1" height="1" fill="#FFFF80"/><rect x="7" y="10" width="1" height="1" fill="#E8E070"/><rect x="8" y="10" width="1" height="1" fill="#FFFF80"/><rect x="9" y="10" width="1" height="1" fill="#E8E070"/><rect x="10" y="10" width="1" height="1" fill="#FFFF80"/><rect x="11" y="10" width="1" height="1" fill="#E8E070"/><rect x="12" y="10" width="1" height="1" fill="#FFFF80"/><rect x="13" y="10" width="1" height="1" fill="#E8E070"/><rect x="14" y="10" width="1" height="1" fill="#FFFF80"/><rect x="15" y="10" width="1" height="1" fill="#E8E070"/><rect x="16" y="10" width="1" height="1" fill="#606060"/><rect x="0" y="11" width="1" height="1" fill="#606060"/><rect x="1" y="11" width="1" height="1" fill="#FFFF80"/><rect x="2" y="11" width="1" height="1" fill="#E8E070"/><rect x="3" y="11" width="1" height="1" fill="#FFFF80"/><rect x="4" y="11" width="1" height="1" fill="#E8E070"/><rect x="5" y="11" width="1" height="1" fill="#FFFF80"/><rect x="6" y="11" width="1" height="1" fill="#E8E070"/><rect x="7" y="11" width="1" height="1" fill="#FFFF80"/><rect x="8" y="11" width="1" height="1" fill="#E8E070"/><rect x="9" y="11" width="1" height="1" fill="#FFFF80"/><rect x="10" y="11" width="1" height="1" fill="#E8E070"/><rect x="11" y="11" width="1" height="1" fill="#FFFF80"/><rect x="12" y="11" width="1" height="1" fill="#E8E070"/><rect x="13" y="11" width="1" height="1" fill="#FFFF80"/><rect x="14" y="11" width="1" height="1" fill="#E8E070"/><rect x="15" y="11" width="1" height="1" fill="#FFFF80"/><rect x="16" y="11" width="1" height="1" fill="#606060"/><rect x="1" y="12" width="16" height="1" fill="#606060"/></svg>
<svg class="a" style="left:35px;top:310px;" width="15" height="16" viewBox="0 0 15 16" shape-rendering="crispEdges"><rect x="0" y="0" width="10" height="1" fill="#000000"/><rect x="0" y="1" width="1" height="1" fill="#000000"/><rect x="1" y="1" width="8" height="1" fill="#FFFFFF"/><rect x="9" y="1" width="2" height="1" fill="#000000"/><rect x="0" y="2" width="1" height="1" fill="#000000"/><rect x="1" y="2" width="8" height="1" fill="#FFFFFF"/><rect x="9" y="2" width="1" height="1" fill="#000000"/><rect x="10" y="2" width="1" height="1" fill="#FFFFFF"/><rect x="11" y="2" width="1" height="1" fill="#000000"/><rect x="0" y="3" width="1" height="1" fill="#000000"/><rect x="1" y="3" width="1" height="1" fill="#FFFFFF"/><rect x="2" y="3" width="6" height="1" fill="#000000"/><rect x="8" y="3" width="1" height="1" fill="#FFFFFF"/><rect x="9" y="3" width="1" height="1" fill="#000000"/><rect x="10" y="3" width="2" height="1" fill="#FFFFFF"/><rect x="12" y="3" width="1" height="1" fill="#000000"/><rect x="0" y="4" width="1" height="1" fill="#000000"/><rect x="1" y="4" width="8" height="1" fill="#FFFFFF"/><rect x="9" y="4" width="5" height="1" fill="#000000"/><rect x="0" y="5" width="1" height="1" fill="#000000"/><rect x="1" y="5" width="1" height="1" fill="#FFFFFF"/><rect x="2" y="5" width="9" height="1" fill="#000000"/><rect x="11" y="5" width="2" height="1" fill="#FFFFFF"/><rect x="13" y="5" width="1" height="1" fill="#000000"/><rect x="0" y="6" width="1" height="1" fill="#000000"/><rect x="1" y="6" width="12" height="1" fill="#FFFFFF"/><rect x="13" y="6" width="1" height="1" fill="#000000"/><rect x="0" y="7" width="1" height="1" fill="#000000"/><rect x="1" y="7" width="1" height="1" fill="#FFFFFF"/><rect x="2" y="7" width="10" height="1" fill="#000000"/><rect x="12" y="7" width="1" height="1" fill="#FFFFFF"/><rect x="13" y="7" width="1" height="1" fill="#000000"/><rect x="0" y="8" width="1" height="1" fill="#000000"/><rect x="1" y="8" width="12" height="1" fill="#FFFFFF"/><rect x="13" y="8" width="1" height="1" fill="#000000"/><rect x="0" y="9" width="1" height="1" fill="#000000"/><rect x="1" y="9" width="1" height="1" fill="#FFFFFF"/><rect x="2" y="9" width="10" height="1" fill="#000000"/><rect x="12" y="9" width="1" height="1" fill="#FFFFFF"/><rect x="13" y="9" width="1" height="1" fill="#000000"/><rect x="0" y="10" width="1" height="1" fill="#000000"/><rect x="1" y="10" width="12" height="1" fill="#FFFFFF"/><rect x="13" y="10" width="1" height="1" fill="#000000"/><rect x="0" y="11" width="1" height="1" fill="#000000"/><rect x="1" y="11" width="1" height="1" fill="#FFFFFF"/><rect x="2" y="11" width="10" height="1" fill="#000000"/><rect x="12" y="11" width="1" height="1" fill="#FFFFFF"/><rect x="13" y="11" width="1" height="1" fill="#000000"/><rect x="0" y="12" width="1" height="1" fill="#000000"/><rect x="1" y="12" width="12" height="1" fill="#FFFFFF"/><rect x="13" y="12" width="1" height="1" fill="#000000"/><rect x="0" y="13" width="1" height="1" fill="#000000"/><rect x="1" y="13" width="12" height="1" fill="#FFFFFF"/><rect x="13" y="13" width="1" height="1" fill="#000000"/><rect x="0" y="14" width="14" height="1" fill="#000000"/><rect x="1" y="15" width="13" height="1" fill="#808080"/></svg>
<svg class="a" style="left:7px;top:340px;" width="14" height="12" viewBox="0 0 14 12" shape-rendering="crispEdges"><rect x="7" y="0" width="6" height="1" fill="#000000"/><rect x="6" y="1" width="1" height="1" fill="#000000"/><rect x="7" y="1" width="1" height="1" fill="#80FFFF"/><rect x="8" y="1" width="1" height="1" fill="#FFFFFF"/><rect x="9" y="1" width="1" height="1" fill="#80FFFF"/><rect x="10" y="1" width="1" height="1" fill="#FFFFFF"/><rect x="11" y="1" width="1" height="1" fill="#80FFFF"/><rect x="12" y="1" width="1" height="1" fill="#000000"/><rect x="2" y="2" width="5" height="1" fill="#000000"/><rect x="7" y="2" width="1" height="1" fill="#FFFFFF"/><rect x="8" y="2" width="1" height="1" fill="#80FFFF"/><rect x="9" y="2" width="1" height="1" fill="#FFFFFF"/><rect x="10" y="2" width="1" height="1" fill="#80FFFF"/><rect x="11" y="2" width="1" height="1" fill="#FFFFFF"/><rect x="12" y="2" width="1" height="1" fill="#80FFFF"/><rect x="13" y="2" width="1" height="1" fill="#000000"/><rect x="1" y="3" width="1" height="1" fill="#000000"/><rect x="2" y="3" width="1" height="1" fill="#FFA0A0"/><rect x="3" y="3" width="1" height="1" fill="#FFC060"/><rect x="4" y="3" width="1" height="1" fill="#FFA0A0"/><rect x="5" y="3" width="1" height="1" fill="#FFC060"/><rect x="6" y="3" width="1" height="1" fill="#000000"/><rect x="7" y="3" width="1" height="1" fill="#80FFFF"/><rect x="8" y="3" width="1" height="1" fill="#FFFFFF"/><rect x="9" y="3" width="1" height="1" fill="#80FFFF"/><rect x="10" y="3" width="1" height="1" fill="#FFFFFF"/><rect x="11" y="3" width="1" height="1" fill="#80FFFF"/><rect x="12" y="3" width="1" height="1" fill="#000000"/><rect x="0" y="4" width="1" height="1" fill="#000000"/><rect x="1" y="4" width="1" height="1" fill="#FFA0A0"/><rect x="2" y="4" width="1" height="1" fill="#FFC060"/><rect x="3" y="4" width="1" height="1" fill="#FFA0A0"/><rect x="4" y="4" width="1" height="1" fill="#FFC060"/><rect x="5" y="4" width="1" height="1" fill="#FFA0A0"/><rect x="6" y="4" width="1" height="1" fill="#FFC060"/><rect x="7" y="4" width="1" height="1" fill="#000000"/><rect x="8" y="4" width="1" height="1" fill="#FFFFFF"/><rect x="9" y="4" width="1" height="1" fill="#80FFFF"/><rect x="10" y="4" width="1" height="1" fill="#FFFFFF"/><rect x="11" y="4" width="1" height="1" fill="#80FFFF"/><rect x="12" y="4" width="1" height="1" fill="#000000"/><rect x="0" y="5" width="1" height="1" fill="#000000"/><rect x="1" y="5" width="1" height="1" fill="#FFC060"/><rect x="2" y="5" width="1" height="1" fill="#FFA0A0"/><rect x="3" y="5" width="1" height="1" fill="#FFC060"/><rect x="4" y="5" width="5" height="1" fill="#000000"/><rect x="9" y="5" width="1" height="1" fill="#80FFFF"/><rect x="10" y="5" width="1" height="1" fill="#FFFFFF"/><rect x="11" y="5" width="1" height="1" fill="#80FFFF"/><rect x="12" y="5" width="1" height="1" fill="#000000"/><rect x="0" y="6" width="1" height="1" fill="#000000"/><rect x="1" y="6" width="1" height="1" fill="#FFA0A0"/><rect x="2" y="6" width="1" height="1" fill="#FFC060"/><rect x="3" y="6" width="1" height="1" fill="#000000"/><rect x="4" y="6" width="5" height="1" fill="#FFFF80"/><rect x="9" y="6" width="3" height="1" fill="#000000"/><rect x="1" y="7" width="2" height="1" fill="#000000"/><rect x="3" y="7" width="7" height="1" fill="#FFFF80"/><rect x="10" y="7" width="1" height="1" fill="#000000"/><rect x="2" y="8" width="1" height="1" fill="#000000"/><rect x="3" y="8" width="7" height="1" fill="#FFFF80"/><rect x="10" y="8" width="1" height="1" fill="#000000"/><rect x="2" y="9" width="1" height="1" fill="#000000"/><rect x="3" y="9" width="7" height="1" fill="#FFFF80"/><rect x="10" y="9" width="1" height="1" fill="#000000"/><rect x="3" y="10" width="1" height="1" fill="#000000"/><rect x="4" y="10" width="5" height="1" fill="#FFFF80"/><rect x="9" y="10" width="1" height="1" fill="#000000"/><rect x="4" y="11" width="5" height="1" fill="#000000"/></svg>
<svg class="a" style="left:35px;top:343px;" width="14" height="5" viewBox="0 0 14 5" shape-rendering="crispEdges"><rect x="0" y="0" width="2" height="1" fill="#000000"/><rect x="2" y="1" width="3" height="1" fill="#000000"/><rect x="5" y="2" width="3" height="1" fill="#000000"/><rect x="8" y="3" width="3" height="1" fill="#000000"/><rect x="11" y="4" width="3" height="1" fill="#000000"/></svg>
<svg class="a" style="left:5px;top:366px;" width="19" height="18" viewBox="0 0 19 18" shape-rendering="crispEdges"><rect x="0" y="0" width="19" height="1" fill="#000000"/><rect x="0" y="1" width="1" height="1" fill="#000000"/><rect x="1" y="1" width="16" height="1" fill="#808080"/><rect x="17" y="1" width="1" height="1" fill="#FFFFFF"/><rect x="18" y="1" width="1" height="1" fill="#000000"/><rect x="0" y="2" width="1" height="1" fill="#000000"/><rect x="1" y="2" width="1" height="1" fill="#808080"/><rect x="2" y="2" width="14" height="1" fill="#000000"/><rect x="16" y="2" width="2" height="1" fill="#FFFFFF"/><rect x="18" y="2" width="1" height="1" fill="#000000"/><rect x="0" y="3" width="1" height="1" fill="#000000"/><rect x="1" y="3" width="1" height="1" fill="#808080"/><rect x="2" y="3" width="1" height="1" fill="#000000"/><rect x="3" y="3" width="1" height="1" fill="#00FFFF"/><rect x="4" y="3" width="1" height="1" fill="#FFFFFF"/><rect x="5" y="3" width="1" height="1" fill="#00FFFF"/><rect x="6" y="3" width="1" height="1" fill="#FFFFFF"/><rect x="7" y="3" width="1" height="1" fill="#00FFFF"/><rect x="8" y="3" width="1" height="1" fill="#FFFFFF"/><rect x="9" y="3" width="1" height="1" fill="#00FFFF"/><rect x="10" y="3" width="1" height="1" fill="#FFFFFF"/><rect x="11" y="3" width="1" height="1" fill="#00FFFF"/><rect x="12" y="3" width="1" height="1" fill="#FFFFFF"/><rect x="13" y="3" width="1" height="1" fill="#00FFFF"/><rect x="14" y="3" width="1" height="1" fill="#FFFFFF"/><rect x="15" y="3" width="1" height="1" fill="#000000"/><rect x="16" y="3" width="2" height="1" fill="#FFFFFF"/><rect x="18" y="3" width="1" height="1" fill="#000000"/><rect x="0" y="4" width="1" height="1" fill="#000000"/><rect x="1" y="4" width="1" height="1" fill="#808080"/><rect x="2" y="4" width="1" height="1" fill="#000000"/><rect x="3" y="4" width="1" height="1" fill="#FFFFFF"/><rect x="4" y="4" width="1" height="1" fill="#00FFFF"/><rect x="5" y="4" width="1" height="1" fill="#FFFFFF"/><rect x="6" y="4" width="1" height="1" fill="#00FFFF"/><rect x="7" y="4" width="1" height="1" fill="#FFFFFF"/><rect x="8" y="4" width="1" height="1" fill="#00FFFF"/><rect x="9" y="4" width="1" height="1" fill="#FFFFFF"/><rect x="10" y="4" width="1" height="1" fill="#00FFFF"/><rect x="11" y="4" width="1" height="1" fill="#FFFFFF"/><rect x="12" y="4" width="2" height="1" fill="#000000"/><rect x="14" y="4" width="1" height="1" fill="#00FFFF"/><rect x="15" y="4" width="1" height="1" fill="#000000"/><rect x="16" y="4" width="2" height="1" fill="#FFFFFF"/><rect x="18" y="4" width="1" height="1" fill="#000000"/><rect x="0" y="5" width="1" height="1" fill="#000000"/><rect x="1" y="5" width="1" height="1" fill="#808080"/><rect x="2" y="5" width="1" height="1" fill="#000000"/><rect x="3" y="5" width="1" height="1" fill="#00FFFF"/><rect x="4" y="5" width="1" height="1" fill="#FFFFFF"/><rect x="5" y="5" width="1" height="1" fill="#00FFFF"/><rect x="6" y="5" width="1" height="1" fill="#FFFFFF"/><rect x="7" y="5" width="1" height="1" fill="#00FFFF"/><rect x="8" y="5" width="1" height="1" fill="#FFFFFF"/><rect x="9" y="5" width="1" height="1" fill="#00FFFF"/><rect x="10" y="5" width="1" height="1" fill="#FFFFFF"/><rect x="11" y="5" width="1" height="1" fill="#000000"/><rect x="12" y="5" width="2" height="1" fill="#FFFFFF"/><rect x="14" y="5" width="2" height="1" fill="#000000"/><rect x="16" y="5" width="2" height="1" fill="#FFFFFF"/><rect x="18" y="5" width="1" height="1" fill="#000000"/><rect x="0" y="6" width="1" height="1" fill="#000000"/><rect x="1" y="6" width="1" height="1" fill="#808080"/><rect x="2" y="6" width="1" height="1" fill="#000000"/><rect x="3" y="6" width="1" height="1" fill="#FFFFFF"/><rect x="4" y="6" width="1" height="1" fill="#00FFFF"/><rect x="5" y="6" width="1" height="1" fill="#FFFFFF"/><rect x="6" y="6" width="1" height="1" fill="#00FFFF"/><rect x="7" y="6" width="1" height="1" fill="#FFFFFF"/><rect x="8" y="6" width="1" height="1" fill="#00FFFF"/><rect x="9" y="6" width="1" height="1" fill="#FFFFFF"/><rect x="10" y="6" width="1" height="1" fill="#00FFFF"/><rect x="11" y="6" width="1" height="1" fill="#000000"/><rect x="12" y="6" width="2" height="1" fill="#FFFFFF"/><rect x="14" y="6" width="2" height="1" fill="#000000"/><rect x="16" y="6" width="2" height="1" fill="#FFFFFF"/><rect x="18" y="6" width="1" height="1" fill="#000000"/><rect x="0" y="7" width="1" height="1" fill="#000000"/><rect x="1" y="7" width="1" height="1" fill="#808080"/><rect x="2" y="7" width="1" height="1" fill="#000000"/><rect x="3" y="7" width="1" height="1" fill="#00FFFF"/><rect x="4" y="7" width="1" height="1" fill="#FFFFFF"/><rect x="5" y="7" width="1" height="1" fill="#00FFFF"/><rect x="6" y="7" width="1" height="1" fill="#FFFFFF"/><rect x="7" y="7" width="1" height="1" fill="#00FF00"/><rect x="8" y="7" width="1" height="1" fill="#FFFFFF"/><rect x="9" y="7" width="1" height="1" fill="#00FFFF"/><rect x="10" y="7" width="1" height="1" fill="#FFFFFF"/><rect x="11" y="7" width="1" height="1" fill="#00FFFF"/><rect x="12" y="7" width="2" height="1" fill="#000000"/><rect x="14" y="7" width="1" height="1" fill="#00FFFF"/><rect x="15" y="7" width="1" height="1" fill="#000000"/><rect x="16" y="7" width="2" height="1" fill="#FFFFFF"/><rect x="18" y="7" width="1" height="1" fill="#000000"/><rect x="0" y="8" width="1" height="1" fill="#000000"/><rect x="1" y="8" width="1" height="1" fill="#808080"/><rect x="2" y="8" width="1" height="1" fill="#000000"/><rect x="3" y="8" width="1" height="1" fill="#FFFFFF"/><rect x="4" y="8" width="1" height="1" fill="#00FFFF"/><rect x="5" y="8" width="1" height="1" fill="#FFFFFF"/><rect x="6" y="8" width="3" height="1" fill="#00FF00"/><rect x="9" y="8" width="1" height="1" fill="#00FFFF"/><rect x="10" y="8" width="1" height="1" fill="#FFFFFF"/><rect x="11" y="8" width="1" height="1" fill="#00FFFF"/><rect x="12" y="8" width="1" height="1" fill="#FFFFFF"/><rect x="13" y="8" width="1" height="1" fill="#00FFFF"/><rect x="14" y="8" width="1" height="1" fill="#FFFFFF"/><rect x="15" y="8" width="1" height="1" fill="#000000"/><rect x="16" y="8" width="2" height="1" fill="#FFFFFF"/><rect x="18" y="8" width="1" height="1" fill="#000000"/><rect x="0" y="9" width="1" height="1" fill="#000000"/><rect x="1" y="9" width="1" height="1" fill="#808080"/><rect x="2" y="9" width="1" height="1" fill="#000000"/><rect x="3" y="9" width="1" height="1" fill="#00FFFF"/><rect x="4" y="9" width="1" height="1" fill="#FFFFFF"/><rect x="5" y="9" width="5" height="1" fill="#00FF00"/><rect x="10" y="9" width="1" height="1" fill="#FFFFFF"/><rect x="11" y="9" width="1" height="1" fill="#00FFFF"/><rect x="12" y="9" width="1" height="1" fill="#00FF00"/><rect x="13" y="9" width="1" height="1" fill="#00FFFF"/><rect x="14" y="9" width="1" height="1" fill="#FFFFFF"/><rect x="15" y="9" width="1" height="1" fill="#000000"/><rect x="16" y="9" width="2" height="1" fill="#FFFFFF"/><rect x="18" y="9" width="1" height="1" fill="#000000"/><rect x="0" y="10" width="1" height="1" fill="#000000"/><rect x="1" y="10" width="1" height="1" fill="#808080"/><rect x="2" y="10" width="1" height="1" fill="#000000"/><rect x="3" y="10" width="1" height="1" fill="#FFFFFF"/><rect x="4" y="10" width="10" height="1" fill="#00FF00"/><rect x="14" y="10" width="1" height="1" fill="#00FFFF"/><rect x="15" y="10" width="1" height="1" fill="#000000"/><rect x="16" y="10" width="2" height="1" fill="#FFFFFF"/><rect x="18" y="10" width="1" height="1" fill="#000000"/><rect x="0" y="11" width="1" height="1" fill="#000000"/><rect x="1" y="11" width="1" height="1" fill="#808080"/><rect x="2" y="11" width="1" height="1" fill="#000000"/><rect x="3" y="11" width="12" height="1" fill="#00FF00"/><rect x="15" y="11" width="1" height="1" fill="#000000"/><rect x="16" y="11" width="2" height="1" fill="#FFFFFF"/><rect x="18" y="11" width="1" height="1" fill="#000000"/><rect x="0" y="12" width="1" height="1" fill="#000000"/><rect x="1" y="12" width="1" height="1" fill="#808080"/><rect x="2" y="12" width="1" height="1" fill="#000000"/><rect x="3" y="12" width="4" height="1" fill="#00FF00"/><rect x="7" y="12" width="1" height="1" fill="#008000"/><rect x="8" y="12" width="7" height="1" fill="#00FF00"/><rect x="15" y="12" width="1" height="1" fill="#000000"/><rect x="16" y="12" width="2" height="1" fill="#FFFFFF"/><rect x="18" y="12" width="1" height="1" fill="#000000"/><rect x="0" y="13" width="1" height="1" fill="#000000"/><rect x="1" y="13" width="1" height="1" fill="#808080"/><rect x="2" y="13" width="1" height="1" fill="#000000"/><rect x="3" y="13" width="12" height="1" fill="#008000"/><rect x="15" y="13" width="1" height="1" fill="#000000"/><rect x="16" y="13" width="2" height="1" fill="#FFFFFF"/><rect x="18" y="13" width="1" height="1" fill="#000000"/><rect x="0" y="14" width="1" height="1" fill="#000000"/><rect x="1" y="14" width="1" height="1" fill="#808080"/><rect x="2" y="14" width="14" height="1" fill="#000000"/><rect x="16" y="14" width="2" height="1" fill="#FFFFFF"/><rect x="18" y="14" width="1" height="1" fill="#000000"/><rect x="0" y="15" width="1" height="1" fill="#000000"/><rect x="1" y="15" width="1" height="1" fill="#808080"/><rect x="2" y="15" width="16" height="1" fill="#FFFFFF"/><rect x="18" y="15" width="1" height="1" fill="#000000"/><rect x="0" y="16" width="1" height="1" fill="#000000"/><rect x="1" y="16" width="17" height="1" fill="#FFFFFF"/><rect x="18" y="16" width="1" height="1" fill="#000000"/><rect x="0" y="17" width="19" height="1" fill="#000000"/></svg>
<svg class="a" style="left:32px;top:364px;" width="21" height="18" viewBox="0 0 21 18" shape-rendering="crispEdges"><rect x="1" y="0" width="20" height="1" fill="#000000"/><rect x="1" y="1" width="1" height="1" fill="#000000"/><rect x="2" y="1" width="6" height="1" fill="#D4D0C8"/><rect x="8" y="1" width="1" height="1" fill="#000000"/><rect x="9" y="1" width="1" height="1" fill="#D4D0C8"/><rect x="10" y="1" width="1" height="1" fill="#000000"/><rect x="11" y="1" width="7" height="1" fill="#D4D0C8"/><rect x="18" y="1" width="1" height="1" fill="#000000"/><rect x="19" y="1" width="1" height="1" fill="#D4D0C8"/><rect x="20" y="1" width="1" height="1" fill="#000000"/><rect x="1" y="2" width="1" height="1" fill="#000000"/><rect x="2" y="2" width="1" height="1" fill="#D4D0C8"/><rect x="3" y="2" width="1" height="1" fill="#000000"/><rect x="4" y="2" width="3" height="1" fill="#D4D0C8"/><rect x="7" y="2" width="2" height="1" fill="#000000"/><rect x="9" y="2" width="1" height="1" fill="#D4D0C8"/><rect x="10" y="2" width="1" height="1" fill="#000000"/><rect x="11" y="2" width="1" height="1" fill="#D4D0C8"/><rect x="12" y="2" width="2" height="1" fill="#000000"/><rect x="14" y="2" width="3" height="1" fill="#D4D0C8"/><rect x="17" y="2" width="2" height="1" fill="#000000"/><rect x="19" y="2" width="1" height="1" fill="#D4D0C8"/><rect x="20" y="2" width="1" height="1" fill="#000000"/><rect x="1" y="3" width="1" height="1" fill="#000000"/><rect x="2" y="3" width="1" height="1" fill="#D4D0C8"/><rect x="3" y="3" width="1" height="1" fill="#000000"/><rect x="4" y="3" width="2" height="1" fill="#D4D0C8"/><rect x="6" y="3" width="3" height="1" fill="#000000"/><rect x="9" y="3" width="1" height="1" fill="#D4D0C8"/><rect x="10" y="3" width="1" height="1" fill="#000000"/><rect x="11" y="3" width="1" height="1" fill="#D4D0C8"/><rect x="12" y="3" width="3" height="1" fill="#000000"/><rect x="15" y="3" width="2" height="1" fill="#D4D0C8"/><rect x="17" y="3" width="2" height="1" fill="#000000"/><rect x="19" y="3" width="1" height="1" fill="#D4D0C8"/><rect x="20" y="3" width="1" height="1" fill="#000000"/><rect x="1" y="4" width="1" height="1" fill="#000000"/><rect x="2" y="4" width="1" height="1" fill="#D4D0C8"/><rect x="3" y="4" width="1" height="1" fill="#000000"/><rect x="4" y="4" width="1" height="1" fill="#D4D0C8"/><rect x="5" y="4" width="4" height="1" fill="#000000"/><rect x="9" y="4" width="1" height="1" fill="#D4D0C8"/><rect x="10" y="4" width="1" height="1" fill="#000000"/><rect x="11" y="4" width="1" height="1" fill="#D4D0C8"/><rect x="12" y="4" width="4" height="1" fill="#000000"/><rect x="16" y="4" width="1" height="1" fill="#D4D0C8"/><rect x="17" y="4" width="2" height="1" fill="#000000"/><rect x="19" y="4" width="1" height="1" fill="#D4D0C8"/><rect x="20" y="4" width="1" height="1" fill="#000000"/><rect x="1" y="5" width="1" height="1" fill="#000000"/><rect x="2" y="5" width="1" height="1" fill="#D4D0C8"/><rect x="3" y="5" width="1" height="1" fill="#000000"/><rect x="4" y="5" width="2" height="1" fill="#D4D0C8"/><rect x="6" y="5" width="3" height="1" fill="#000000"/><rect x="9" y="5" width="1" height="1" fill="#D4D0C8"/><rect x="10" y="5" width="1" height="1" fill="#000000"/><rect x="11" y="5" width="1" height="1" fill="#D4D0C8"/><rect x="12" y="5" width="3" height="1" fill="#000000"/><rect x="15" y="5" width="2" height="1" fill="#D4D0C8"/><rect x="17" y="5" width="2" height="1" fill="#000000"/><rect x="19" y="5" width="1" height="1" fill="#D4D0C8"/><rect x="20" y="5" width="1" height="1" fill="#000000"/><rect x="1" y="6" width="1" height="1" fill="#000000"/><rect x="2" y="6" width="1" height="1" fill="#D4D0C8"/><rect x="3" y="6" width="1" height="1" fill="#000000"/><rect x="4" y="6" width="3" height="1" fill="#D4D0C8"/><rect x="7" y="6" width="2" height="1" fill="#000000"/><rect x="9" y="6" width="1" height="1" fill="#D4D0C8"/><rect x="10" y="6" width="1" height="1" fill="#000000"/><rect x="11" y="6" width="1" height="1" fill="#D4D0C8"/><rect x="12" y="6" width="2" height="1" fill="#000000"/><rect x="14" y="6" width="3" height="1" fill="#D4D0C8"/><rect x="17" y="6" width="2" height="1" fill="#000000"/><rect x="19" y="6" width="1" height="1" fill="#D4D0C8"/><rect x="20" y="6" width="1" height="1" fill="#000000"/><rect x="1" y="7" width="1" height="1" fill="#000000"/><rect x="2" y="7" width="8" height="1" fill="#808080"/><rect x="10" y="7" width="1" height="1" fill="#000000"/><rect x="11" y="7" width="9" height="1" fill="#808080"/><rect x="20" y="7" width="1" height="1" fill="#000000"/><rect x="1" y="8" width="20" height="1" fill="#000000"/><rect x="7" y="9" width="1" height="1" fill="#000000"/><rect x="7" y="10" width="1" height="1" fill="#000000"/><rect x="7" y="11" width="14" height="1" fill="#000000"/><rect x="7" y="12" width="1" height="1" fill="#000000"/><rect x="8" y="12" width="12" height="1" fill="#FFFFFF"/><rect x="20" y="12" width="1" height="1" fill="#000000"/><rect x="7" y="13" width="14" height="1" fill="#000000"/><rect x="7" y="14" width="1" height="1" fill="#000000"/><rect x="7" y="15" width="14" height="1" fill="#000000"/><rect x="7" y="16" width="1" height="1" fill="#000000"/><rect x="8" y="16" width="12" height="1" fill="#FFFFFF"/><rect x="20" y="16" width="1" height="1" fill="#000000"/><rect x="7" y="17" width="14" height="1" fill="#000000"/></svg>
<svg class="a" style="left:5px;top:393px;" width="19" height="19" viewBox="0 0 19 19" shape-rendering="crispEdges"><rect x="0" y="0" width="1" height="1" fill="#000000"/><rect x="2" y="0" width="1" height="1" fill="#000000"/><rect x="4" y="0" width="1" height="1" fill="#000000"/><rect x="6" y="0" width="1" height="1" fill="#000000"/><rect x="8" y="0" width="1" height="1" fill="#000000"/><rect x="10" y="0" width="1" height="1" fill="#000000"/><rect x="12" y="0" width="1" height="1" fill="#000000"/><rect x="14" y="0" width="1" height="1" fill="#000000"/><rect x="16" y="0" width="1" height="1" fill="#000000"/><rect x="0" y="2" width="1" height="1" fill="#000000"/><rect x="2" y="2" width="1" height="1" fill="#000000"/><rect x="4" y="2" width="1" height="1" fill="#000000"/><rect x="6" y="2" width="1" height="1" fill="#000000"/><rect x="8" y="2" width="1" height="1" fill="#000000"/><rect x="10" y="2" width="1" height="1" fill="#000000"/><rect x="12" y="2" width="1" height="1" fill="#000000"/><rect x="14" y="2" width="1" height="1" fill="#000000"/><rect x="16" y="2" width="1" height="1" fill="#000000"/><rect x="0" y="4" width="1" height="1" fill="#000000"/><rect x="2" y="4" width="1" height="1" fill="#000000"/><rect x="4" y="4" width="1" height="1" fill="#000000"/><rect x="6" y="4" width="1" height="1" fill="#000000"/><rect x="8" y="4" width="1" height="1" fill="#000000"/><rect x="10" y="4" width="1" height="1" fill="#000000"/><rect x="12" y="4" width="1" height="1" fill="#000000"/><rect x="14" y="4" width="1" height="1" fill="#000000"/><rect x="16" y="4" width="1" height="1" fill="#000000"/><rect x="0" y="6" width="1" height="1" fill="#000000"/><rect x="2" y="6" width="1" height="1" fill="#000000"/><rect x="4" y="6" width="1" height="1" fill="#000000"/><rect x="6" y="6" width="1" height="1" fill="#000000"/><rect x="8" y="6" width="1" height="1" fill="#000000"/><rect x="10" y="6" width="1" height="1" fill="#000000"/><rect x="12" y="6" width="1" height="1" fill="#000000"/><rect x="14" y="6" width="1" height="1" fill="#000000"/><rect x="16" y="6" width="1" height="1" fill="#000000"/><rect x="0" y="8" width="1" height="1" fill="#000000"/><rect x="2" y="8" width="1" height="1" fill="#000000"/><rect x="4" y="8" width="15" height="1" fill="#000000"/><rect x="4" y="9" width="15" height="1" fill="#000000"/><rect x="0" y="10" width="1" height="1" fill="#000000"/><rect x="2" y="10" width="1" height="1" fill="#000000"/><rect x="4" y="10" width="2" height="1" fill="#000000"/><rect x="6" y="10" width="2" height="1" fill="#FFFFFF"/><rect x="8" y="10" width="2" height="1" fill="#000000"/><rect x="10" y="10" width="1" height="1" fill="#FFFFFF"/><rect x="11" y="10" width="2" height="1" fill="#000000"/><rect x="13" y="10" width="3" height="1" fill="#FFFFFF"/><rect x="16" y="10" width="3" height="1" fill="#000000"/><rect x="4" y="11" width="1" height="1" fill="#000000"/><rect x="5" y="11" width="1" height="1" fill="#FFFFFF"/><rect x="6" y="11" width="2" height="1" fill="#000000"/><rect x="8" y="11" width="1" height="1" fill="#FFFFFF"/><rect x="9" y="11" width="1" height="1" fill="#000000"/><rect x="10" y="11" width="1" height="1" fill="#FFFFFF"/><rect x="11" y="11" width="2" height="1" fill="#000000"/><rect x="13" y="11" width="1" height="1" fill="#FFFFFF"/><rect x="14" y="11" width="5" height="1" fill="#000000"/><rect x="0" y="12" width="1" height="1" fill="#000000"/><rect x="2" y="12" width="1" height="1" fill="#000000"/><rect x="4" y="12" width="1" height="1" fill="#000000"/><rect x="5" y="12" width="1" height="1" fill="#FFFFFF"/><rect x="6" y="12" width="2" height="1" fill="#000000"/><rect x="8" y="12" width="1" height="1" fill="#FFFFFF"/><rect x="9" y="12" width="1" height="1" fill="#000000"/><rect x="10" y="12" width="1" height="1" fill="#FFFFFF"/><rect x="11" y="12" width="2" height="1" fill="#000000"/><rect x="13" y="12" width="2" height="1" fill="#FFFFFF"/><rect x="15" y="12" width="4" height="1" fill="#000000"/><rect x="4" y="13" width="1" height="1" fill="#000000"/><rect x="5" y="13" width="1" height="1" fill="#FFFFFF"/><rect x="6" y="13" width="2" height="1" fill="#000000"/><rect x="8" y="13" width="1" height="1" fill="#FFFFFF"/><rect x="9" y="13" width="1" height="1" fill="#000000"/><rect x="10" y="13" width="1" height="1" fill="#FFFFFF"/><rect x="11" y="13" width="2" height="1" fill="#000000"/><rect x="13" y="13" width="1" height="1" fill="#FFFFFF"/><rect x="14" y="13" width="5" height="1" fill="#000000"/><rect x="0" y="14" width="1" height="1" fill="#000000"/><rect x="2" y="14" width="1" height="1" fill="#000000"/><rect x="4" y="14" width="1" height="1" fill="#000000"/><rect x="5" y="14" width="1" height="1" fill="#FFFFFF"/><rect x="6" y="14" width="2" height="1" fill="#000000"/><rect x="8" y="14" width="1" height="1" fill="#FFFFFF"/><rect x="9" y="14" width="1" height="1" fill="#000000"/><rect x="10" y="14" width="1" height="1" fill="#FFFFFF"/><rect x="11" y="14" width="2" height="1" fill="#000000"/><rect x="13" y="14" width="1" height="1" fill="#FFFFFF"/><rect x="14" y="14" width="5" height="1" fill="#000000"/><rect x="4" y="15" width="2" height="1" fill="#000000"/><rect x="6" y="15" width="2" height="1" fill="#FFFFFF"/><rect x="8" y="15" width="2" height="1" fill="#000000"/><rect x="10" y="15" width="2" height="1" fill="#FFFFFF"/><rect x="12" y="15" width="1" height="1" fill="#000000"/><rect x="13" y="15" width="3" height="1" fill="#FFFFFF"/><rect x="16" y="15" width="3" height="1" fill="#000000"/><rect x="4" y="16" width="15" height="1" fill="#000000"/><rect x="4" y="17" width="15" height="1" fill="#000000"/><rect x="4" y="18" width="15" height="1" fill="#000000"/></svg>
<svg class="a" style="left:32px;top:393px;" width="14" height="13" viewBox="0 0 14 13" shape-rendering="crispEdges"><rect x="2" y="0" width="12" height="1" fill="#000000"/><rect x="2" y="1" width="1" height="1" fill="#000000"/><rect x="3" y="1" width="10" height="1" fill="#000080"/><rect x="13" y="1" width="1" height="1" fill="#000000"/><rect x="2" y="2" width="1" height="1" fill="#000000"/><rect x="3" y="2" width="10" height="1" fill="#000080"/><rect x="13" y="2" width="1" height="1" fill="#000000"/><rect x="2" y="3" width="1" height="1" fill="#000000"/><rect x="3" y="3" width="10" height="1" fill="#FFFFFF"/><rect x="13" y="3" width="1" height="1" fill="#000000"/><rect x="2" y="4" width="1" height="1" fill="#000000"/><rect x="3" y="4" width="10" height="1" fill="#FFFFFF"/><rect x="13" y="4" width="1" height="1" fill="#000000"/><rect x="0" y="5" width="1" height="1" fill="#000000"/><rect x="2" y="5" width="1" height="1" fill="#000000"/><rect x="3" y="5" width="3" height="1" fill="#FFFFFF"/><rect x="6" y="5" width="1" height="1" fill="#000000"/><rect x="7" y="5" width="2" height="1" fill="#FFFFFF"/><rect x="9" y="5" width="2" height="1" fill="#FFFF00"/><rect x="11" y="5" width="2" height="1" fill="#FF0000"/><rect x="13" y="5" width="1" height="1" fill="#000000"/><rect x="1" y="6" width="1" height="1" fill="#000000"/><rect x="2" y="6" width="1" height="1" fill="#000080"/><rect x="3" y="6" width="6" height="1" fill="#FFFFFF"/><rect x="9" y="6" width="2" height="1" fill="#FF0000"/><rect x="11" y="6" width="2" height="1" fill="#FFFF00"/><rect x="13" y="6" width="1" height="1" fill="#000000"/><rect x="2" y="7" width="1" height="1" fill="#000000"/><rect x="3" y="7" width="1" height="1" fill="#000080"/><rect x="4" y="7" width="9" height="1" fill="#FFFFFF"/><rect x="13" y="7" width="1" height="1" fill="#000000"/><rect x="0" y="8" width="1" height="1" fill="#000000"/><rect x="3" y="8" width="1" height="1" fill="#000000"/><rect x="4" y="8" width="1" height="1" fill="#000080"/><rect x="5" y="8" width="9" height="1" fill="#000000"/><rect x="1" y="9" width="1" height="1" fill="#000000"/><rect x="2" y="9" width="1" height="1" fill="#000080"/><rect x="3" y="9" width="1" height="1" fill="#000000"/><rect x="0" y="10" width="1" height="1" fill="#000000"/><rect x="1" y="10" width="1" height="1" fill="#000080"/><rect x="2" y="10" width="1" height="1" fill="#000000"/><rect x="0" y="11" width="1" height="1" fill="#000000"/><rect x="0" y="12" width="2" height="1" fill="#000000"/></svg>
<svg class="a" style="left:8px;top:425px;" width="12" height="9" viewBox="0 0 12 9" shape-rendering="crispEdges"><rect x="7" y="0" width="1" height="1" fill="#000000"/><rect x="7" y="1" width="1" height="1" fill="#000000"/><rect x="7" y="2" width="1" height="1" fill="#000000"/><rect x="1" y="3" width="3" height="1" fill="#000000"/><rect x="7" y="3" width="4" height="1" fill="#000000"/><rect x="4" y="4" width="1" height="1" fill="#000000"/><rect x="7" y="4" width="1" height="1" fill="#000000"/><rect x="11" y="4" width="1" height="1" fill="#000000"/><rect x="1" y="5" width="4" height="1" fill="#000000"/><rect x="7" y="5" width="1" height="1" fill="#000000"/><rect x="11" y="5" width="1" height="1" fill="#000000"/><rect x="0" y="6" width="1" height="1" fill="#000000"/><rect x="4" y="6" width="1" height="1" fill="#000000"/><rect x="7" y="6" width="1" height="1" fill="#000000"/><rect x="11" y="6" width="1" height="1" fill="#000000"/><rect x="0" y="7" width="1" height="1" fill="#000000"/><rect x="3" y="7" width="2" height="1" fill="#000000"/><rect x="7" y="7" width="1" height="1" fill="#000000"/><rect x="11" y="7" width="1" height="1" fill="#000000"/><rect x="1" y="8" width="2" height="1" fill="#000000"/><rect x="4" y="8" width="1" height="1" fill="#000000"/><rect x="7" y="8" width="4" height="1" fill="#000000"/></svg>
<svg class="a" style="left:36px;top:422px;" width="12" height="15" viewBox="0 0 12 15" shape-rendering="crispEdges"><rect x="10" y="0" width="1" height="1" fill="#000000"/><rect x="11" y="0" width="1" height="1" fill="#E00000"/><rect x="10" y="1" width="2" height="1" fill="#000000"/><rect x="0" y="2" width="10" height="1" fill="#000000"/><rect x="10" y="2" width="1" height="1" fill="#E0D000"/><rect x="11" y="2" width="1" height="1" fill="#000000"/><rect x="0" y="3" width="1" height="1" fill="#000000"/><rect x="1" y="3" width="8" height="1" fill="#000080"/><rect x="9" y="3" width="1" height="1" fill="#E0D000"/><rect x="10" y="3" width="1" height="1" fill="#000000"/><rect x="0" y="4" width="1" height="1" fill="#000000"/><rect x="1" y="4" width="7" height="1" fill="#FFFFFF"/><rect x="8" y="4" width="1" height="1" fill="#E0D000"/><rect x="9" y="4" width="1" height="1" fill="#000000"/><rect x="10" y="4" width="1" height="1" fill="#FFFFFF"/><rect x="0" y="5" width="1" height="1" fill="#000000"/><rect x="1" y="5" width="2" height="1" fill="#FFFFFF"/><rect x="3" y="5" width="1" height="1" fill="#000000"/><rect x="4" y="5" width="2" height="1" fill="#FFFFFF"/><rect x="6" y="5" width="1" height="1" fill="#000000"/><rect x="7" y="5" width="1" height="1" fill="#E0D000"/><rect x="8" y="5" width="1" height="1" fill="#000000"/><rect x="9" y="5" width="1" height="1" fill="#FFFFFF"/><rect x="10" y="5" width="1" height="1" fill="#000000"/><rect x="0" y="6" width="1" height="1" fill="#000000"/><rect x="1" y="6" width="2" height="1" fill="#FFFFFF"/><rect x="3" y="6" width="1" height="1" fill="#000000"/><rect x="4" y="6" width="2" height="1" fill="#FFFFFF"/><rect x="6" y="6" width="1" height="1" fill="#E0D000"/><rect x="7" y="6" width="1" height="1" fill="#000000"/><rect x="8" y="6" width="2" height="1" fill="#FFFFFF"/><rect x="10" y="6" width="1" height="1" fill="#000000"/><rect x="0" y="7" width="1" height="1" fill="#000000"/><rect x="1" y="7" width="1" height="1" fill="#FFFFFF"/><rect x="2" y="7" width="3" height="1" fill="#000000"/><rect x="5" y="7" width="1" height="1" fill="#E0D000"/><rect x="6" y="7" width="3" height="1" fill="#000000"/><rect x="9" y="7" width="1" height="1" fill="#FFFFFF"/><rect x="10" y="7" width="1" height="1" fill="#000000"/><rect x="0" y="8" width="1" height="1" fill="#000000"/><rect x="1" y="8" width="2" height="1" fill="#FFFFFF"/><rect x="3" y="8" width="1" height="1" fill="#000000"/><rect x="4" y="8" width="1" height="1" fill="#FFFFFF"/><rect x="5" y="8" width="1" height="1" fill="#000000"/><rect x="6" y="8" width="1" height="1" fill="#FFFFFF"/><rect x="7" y="8" width="1" height="1" fill="#000000"/><rect x="8" y="8" width="2" height="1" fill="#FFFFFF"/><rect x="10" y="8" width="1" height="1" fill="#000000"/><rect x="0" y="9" width="1" height="1" fill="#000000"/><rect x="1" y="9" width="1" height="1" fill="#FFFFFF"/><rect x="2" y="9" width="7" height="1" fill="#000000"/><rect x="9" y="9" width="1" height="1" fill="#FFFFFF"/><rect x="10" y="9" width="1" height="1" fill="#000000"/><rect x="0" y="10" width="1" height="1" fill="#000000"/><rect x="1" y="10" width="2" height="1" fill="#FFFFFF"/><rect x="3" y="10" width="1" height="1" fill="#000000"/><rect x="4" y="10" width="2" height="1" fill="#FFFFFF"/><rect x="6" y="10" width="1" height="1" fill="#000000"/><rect x="7" y="10" width="3" height="1" fill="#FFFFFF"/><rect x="10" y="10" width="1" height="1" fill="#000000"/><rect x="0" y="11" width="1" height="1" fill="#000000"/><rect x="1" y="11" width="2" height="1" fill="#FFFFFF"/><rect x="3" y="11" width="1" height="1" fill="#000000"/><rect x="4" y="11" width="2" height="1" fill="#FFFFFF"/><rect x="6" y="11" width="1" height="1" fill="#000000"/><rect x="7" y="11" width="3" height="1" fill="#FFFFFF"/><rect x="10" y="11" width="1" height="1" fill="#000000"/><rect x="0" y="12" width="1" height="1" fill="#000000"/><rect x="1" y="12" width="9" height="1" fill="#FFFFFF"/><rect x="10" y="12" width="1" height="1" fill="#000000"/><rect x="0" y="13" width="11" height="1" fill="#000000"/><rect x="0" y="14" width="11" height="1" fill="#808080"/></svg>
<div class="a" style="left:67px;top:71px;width:1px;height:660px;background:#808080"></div>
<div class="a" style="left:67px;top:71px;width:771px;height:660px;border-style:solid;border-width:1px;border-color:#808080 #fff #fff #808080"></div>
<div class="a" style="left:68px;top:72px;width:769px;height:658px;border-style:solid;border-width:1px;border-color:#404040 #D4D0C8 #D4D0C8 #404040"></div>
<div class="a" style="left:76px;top:80px;width:320px;height:239px;background:#D4D0C8;border-style:solid;border-width:1px;border-color:#D4D0C8 #404040 #404040 #D4D0C8;box-shadow:inset 1px 1px 0 #fff,inset -1px -1px 0 #808080"></div>
<div class="a" style="left:80px;top:84px;width:312px;height:18px;background:linear-gradient(to right,#0A246A 0px,#A6CAF0 262px,#A6CAF0 312px)"></div>
<svg class="a" style="left:84px;top:88px;" width="13" height="12" viewBox="0 0 13 12" shape-rendering="crispEdges"><rect x="0" y="0" width="3" height="1" fill="#000000"/><rect x="0" y="1" width="1" height="1" fill="#000000"/><rect x="1" y="1" width="2" height="1" fill="#00FFFF"/><rect x="3" y="1" width="4" height="1" fill="#000000"/><rect x="0" y="2" width="3" height="1" fill="#000000"/><rect x="3" y="2" width="4" height="1" fill="#00FFFF"/><rect x="7" y="2" width="3" height="1" fill="#000000"/><rect x="0" y="3" width="1" height="1" fill="#000000"/><rect x="1" y="3" width="2" height="1" fill="#FFFFFF"/><rect x="3" y="3" width="4" height="1" fill="#000000"/><rect x="7" y="3" width="2" height="1" fill="#00FFFF"/><rect x="9" y="3" width="1" height="1" fill="#000000"/><rect x="0" y="4" width="1" height="1" fill="#000000"/><rect x="1" y="4" width="6" height="1" fill="#FFFFFF"/><rect x="7" y="4" width="3" height="1" fill="#000000"/><rect x="0" y="5" width="1" height="1" fill="#000000"/><rect x="1" y="5" width="8" height="1" fill="#FFFFFF"/><rect x="9" y="5" width="1" height="1" fill="#000000"/><rect x="0" y="6" width="1" height="1" fill="#000000"/><rect x="1" y="6" width="8" height="1" fill="#FFFFFF"/><rect x="9" y="6" width="1" height="1" fill="#000000"/><rect x="0" y="7" width="1" height="1" fill="#000000"/><rect x="1" y="7" width="8" height="1" fill="#FFFFFF"/><rect x="9" y="7" width="1" height="1" fill="#000000"/><rect x="0" y="8" width="1" height="1" fill="#000000"/><rect x="1" y="8" width="8" height="1" fill="#FFFFFF"/><rect x="9" y="8" width="1" height="1" fill="#000000"/><rect x="0" y="9" width="3" height="1" fill="#000000"/><rect x="3" y="9" width="6" height="1" fill="#FFFFFF"/><rect x="9" y="9" width="1" height="1" fill="#000000"/><rect x="11" y="9" width="2" height="1" fill="#808080"/><rect x="3" y="10" width="4" height="1" fill="#000000"/><rect x="7" y="10" width="2" height="1" fill="#FFFFFF"/><rect x="9" y="10" width="1" height="1" fill="#000000"/><rect x="10" y="10" width="2" height="1" fill="#808080"/><rect x="7" y="11" width="3" height="1" fill="#000000"/><rect x="10" y="11" width="1" height="1" fill="#808080"/></svg>
<div class="t" style="left:101px;top:86.84px;font-size:12px;line-height:12px;font-weight:bold;color:#fff;transform:scaleX(0.8722);transform-origin:0 0;">Form1</div>
<div class="a" style="left:340px;top:86px;width:16px;height:14px;background:#D4D0C8;border-style:solid;border-width:1px;border-color:#D4D0C8 #404040 #404040 #D4D0C8;box-shadow:inset 1px 1px 0 #fff,inset -1px -1px 0 #808080"></div>
<div class="a" style="left:356px;top:86px;width:16px;height:14px;background:#D4D0C8;border-style:solid;border-width:1px;border-color:#D4D0C8 #404040 #404040 #D4D0C8;box-shadow:inset 1px 1px 0 #fff,inset -1px -1px 0 #808080"></div>
<div class="a" style="left:374px;top:86px;width:16px;height:14px;background:#D4D0C8;border-style:solid;border-width:1px;border-color:#D4D0C8 #404040 #404040 #D4D0C8;box-shadow:inset 1px 1px 0 #fff,inset -1px -1px 0 #808080"></div>
<div class="a" style="left:344px;top:95px;width:6px;height:2px;background:#000"></div>
<svg class="a" style="left:359px;top:88px;" width="10" height="9" viewBox="0 0 10 9" shape-rendering="crispEdges"><rect x="0.5" y="0.5" width="8" height="8" fill="none" stroke="#000"/><rect x="0" y="0" width="9" height="2" fill="#000"/></svg>
<svg class="a" style="left:378px;top:89px;" width="9" height="8" viewBox="0 0 9 8" shape-rendering="crispEdges"><path d="M0 0h2l2 2.5L6 0h2L5 3.5 8 7H6L4 4.5 2 7H0l3-3.5z" fill="#000" shape-rendering="auto"/></svg>
<svg class="a" style="left:80px;top:102px;" width="312" height="215" viewBox="0 0 312 215" shape-rendering="crispEdges"><rect x="0" y="0" width="312" height="215" fill="url(#dots)"/></svg>
<div class="a" style="left:120px;top:151px;width:73px;height:49px;background:#fff"></div>
<div class="a" style="left:120px;top:151px;width:73px;height:49px;background:#6CCF62;border:1px solid #404040;border-radius:4px;box-shadow:inset 1px 1px 0 #98E890,inset 2px 2px 0 #86DC7E,inset -1px -1px 0 #5AB452,inset -2px -2px 0 #62C05A"></div>
<div class="t" style="left:131px;top:170.69px;font-size:11px;line-height:11px;color:#000;transform:scaleX(0.8969);transform-origin:0 0;">Command1</div>
<div class="a" style="left:224px;top:119px;width:145px;height:6px;background:#DDD2CE"></div>
<svg class="a" style="left:224px;top:125px;" width="145" height="83" viewBox="0 0 145 83" shape-rendering="crispEdges"><rect width="145" height="83" fill="#D4D0C8"/><rect x="0.5" y="0.5" width="144" height="82" rx="5" ry="5" fill="url(#ftex)" stroke="#555" stroke-width="1" shape-rendering="auto"/></svg>
<div class="a" style="left:234px;top:119px;width:43px;height:15px;background:#B2CBAE"></div>
<div class="t" style="left:238px;top:121.69px;font-size:11px;line-height:11px;color:#000;transform:scaleX(0.8969);transform-origin:0 0;">Frame1</div>
<div class="a" style="left:96px;top:223px;width:17px;height:81px;background:#DCD0CC"></div>
<svg class="a" style="left:98px;top:223px;" width="13" height="81" viewBox="0 0 13 81" shape-rendering="crispEdges"><rect x="4" y="0" width="5" height="1" fill="#404040"/><rect x="2" y="1" width="2" height="1" fill="#404040"/><rect x="4" y="1" width="5" height="1" fill="#66CC5E"/><rect x="9" y="1" width="2" height="1" fill="#404040"/><rect x="1" y="2" width="1" height="1" fill="#404040"/><rect x="2" y="2" width="9" height="1" fill="#66CC5E"/><rect x="11" y="2" width="1" height="1" fill="#404040"/><rect x="0" y="3" width="1" height="1" fill="#404040"/><rect x="1" y="3" width="11" height="1" fill="#66CC5E"/><rect x="12" y="3" width="1" height="1" fill="#404040"/><rect x="0" y="4" width="1" height="1" fill="#404040"/><rect x="1" y="4" width="11" height="1" fill="#66CC5E"/><rect x="12" y="4" width="1" height="1" fill="#404040"/><rect x="0" y="5" width="1" height="1" fill="#404040"/><rect x="1" y="5" width="5" height="1" fill="#66CC5E"/><rect x="6" y="5" width="1" height="1" fill="#000000"/><rect x="7" y="5" width="5" height="1" fill="#66CC5E"/><rect x="12" y="5" width="1" height="1" fill="#404040"/><rect x="0" y="6" width="1" height="1" fill="#404040"/><rect x="1" y="6" width="4" height="1" fill="#66CC5E"/><rect x="5" y="6" width="3" height="1" fill="#000000"/><rect x="8" y="6" width="4" height="1" fill="#66CC5E"/><rect x="12" y="6" width="1" height="1" fill="#404040"/><rect x="0" y="7" width="1" height="1" fill="#404040"/><rect x="1" y="7" width="3" height="1" fill="#66CC5E"/><rect x="4" y="7" width="5" height="1" fill="#000000"/><rect x="9" y="7" width="3" height="1" fill="#66CC5E"/><rect x="12" y="7" width="1" height="1" fill="#404040"/><rect x="0" y="8" width="1" height="1" fill="#404040"/><rect x="1" y="8" width="2" height="1" fill="#66CC5E"/><rect x="3" y="8" width="7" height="1" fill="#000000"/><rect x="10" y="8" width="2" height="1" fill="#66CC5E"/><rect x="12" y="8" width="1" height="1" fill="#404040"/><rect x="0" y="9" width="1" height="1" fill="#404040"/><rect x="1" y="9" width="11" height="1" fill="#66CC5E"/><rect x="12" y="9" width="1" height="1" fill="#404040"/><rect x="0" y="10" width="1" height="1" fill="#404040"/><rect x="1" y="10" width="11" height="1" fill="#66CC5E"/><rect x="12" y="10" width="1" height="1" fill="#404040"/><rect x="0" y="11" width="1" height="1" fill="#404040"/><rect x="1" y="11" width="11" height="1" fill="#66CC5E"/><rect x="12" y="11" width="1" height="1" fill="#404040"/><rect x="0" y="12" width="1" height="1" fill="#404040"/><rect x="1" y="12" width="11" height="1" fill="#66CC5E"/><rect x="12" y="12" width="1" height="1" fill="#404040"/><rect x="0" y="13" width="13" height="1" fill="#404040"/><rect x="0" y="14" width="1" height="1" fill="#404040"/><rect x="1" y="14" width="11" height="1" fill="#66CC5E"/><rect x="12" y="14" width="1" height="1" fill="#404040"/><rect x="0" y="15" width="1" height="1" fill="#404040"/><rect x="1" y="15" width="11" height="1" fill="#66CC5E"/><rect x="12" y="15" width="1" height="1" fill="#404040"/><rect x="0" y="16" width="1" height="1" fill="#404040"/><rect x="1" y="16" width="11" height="1" fill="#66CC5E"/><rect x="12" y="16" width="1" height="1" fill="#404040"/><rect x="0" y="17" width="1" height="1" fill="#404040"/><rect x="1" y="17" width="11" height="1" fill="#66CC5E"/><rect x="12" y="17" width="1" height="1" fill="#404040"/><rect x="0" y="18" width="1" height="1" fill="#404040"/><rect x="1" y="18" width="11" height="1" fill="#66CC5E"/><rect x="12" y="18" width="1" height="1" fill="#404040"/><rect x="0" y="19" width="13" height="1" fill="#404040"/><rect x="0" y="20" width="1" height="1" fill="#404040"/><rect x="1" y="20" width="10" height="1" fill="#FFFFFF"/><rect x="11" y="20" width="1" height="1" fill="#E4E4E4"/><rect x="12" y="20" width="1" height="1" fill="#404040"/><rect x="0" y="21" width="1" height="1" fill="#404040"/><rect x="1" y="21" width="10" height="1" fill="#FFFFFF"/><rect x="11" y="21" width="1" height="1" fill="#E4E4E4"/><rect x="12" y="21" width="1" height="1" fill="#404040"/><rect x="0" y="22" width="1" height="1" fill="#404040"/><rect x="1" y="22" width="10" height="1" fill="#FFFFFF"/><rect x="11" y="22" width="1" height="1" fill="#E4E4E4"/><rect x="12" y="22" width="1" height="1" fill="#404040"/><rect x="0" y="23" width="1" height="1" fill="#404040"/><rect x="1" y="23" width="10" height="1" fill="#FFFFFF"/><rect x="11" y="23" width="1" height="1" fill="#E4E4E4"/><rect x="12" y="23" width="1" height="1" fill="#404040"/><rect x="0" y="24" width="1" height="1" fill="#404040"/><rect x="1" y="24" width="10" height="1" fill="#FFFFFF"/><rect x="11" y="24" width="1" height="1" fill="#E4E4E4"/><rect x="12" y="24" width="1" height="1" fill="#404040"/><rect x="0" y="25" width="1" height="1" fill="#404040"/><rect x="1" y="25" width="10" height="1" fill="#FFFFFF"/><rect x="11" y="25" width="1" height="1" fill="#E4E4E4"/><rect x="12" y="25" width="1" height="1" fill="#404040"/><rect x="0" y="26" width="1" height="1" fill="#404040"/><rect x="1" y="26" width="10" height="1" fill="#FFFFFF"/><rect x="11" y="26" width="1" height="1" fill="#E4E4E4"/><rect x="12" y="26" width="1" height="1" fill="#404040"/><rect x="0" y="27" width="1" height="1" fill="#404040"/><rect x="1" y="27" width="10" height="1" fill="#FFFFFF"/><rect x="11" y="27" width="1" height="1" fill="#E4E4E4"/><rect x="12" y="27" width="1" height="1" fill="#404040"/><rect x="0" y="28" width="1" height="1" fill="#404040"/><rect x="1" y="28" width="10" height="1" fill="#FFFFFF"/><rect x="11" y="28" width="1" height="1" fill="#E4E4E4"/><rect x="12" y="28" width="1" height="1" fill="#404040"/><rect x="0" y="29" width="1" height="1" fill="#404040"/><rect x="1" y="29" width="10" height="1" fill="#FFFFFF"/><rect x="11" y="29" width="1" height="1" fill="#E4E4E4"/><rect x="12" y="29" width="1" height="1" fill="#404040"/><rect x="0" y="30" width="1" height="1" fill="#404040"/><rect x="1" y="30" width="10" height="1" fill="#FFFFFF"/><rect x="11" y="30" width="1" height="1" fill="#E4E4E4"/><rect x="12" y="30" width="1" height="1" fill="#404040"/><rect x="0" y="31" width="1" height="1" fill="#404040"/><rect x="1" y="31" width="10" height="1" fill="#FFFFFF"/><rect x="11" y="31" width="1" height="1" fill="#E4E4E4"/><rect x="12" y="31" width="1" height="1" fill="#404040"/><rect x="0" y="32" width="1" height="1" fill="#404040"/><rect x="1" y="32" width="10" height="1" fill="#FFFFFF"/><rect x="11" y="32" width="1" height="1" fill="#E4E4E4"/><rect x="12" y="32" width="1" height="1" fill="#404040"/><rect x="0" y="33" width="1" height="1" fill="#404040"/><rect x="1" y="33" width="10" height="1" fill="#FFFFFF"/><rect x="11" y="33" width="1" height="1" fill="#E4E4E4"/><rect x="12" y="33" width="1" height="1" fill="#404040"/><rect x="0" y="34" width="1" height="1" fill="#404040"/><rect x="1" y="34" width="10" height="1" fill="#FFFFFF"/><rect x="11" y="34" width="1" height="1" fill="#E4E4E4"/><rect x="12" y="34" width="1" height="1" fill="#404040"/><rect x="0" y="35" width="1" height="1" fill="#404040"/><rect x="1" y="35" width="10" height="1" fill="#FFFFFF"/><rect x="11" y="35" width="1" height="1" fill="#E4E4E4"/><rect x="12" y="35" width="1" height="1" fill="#404040"/><rect x="0" y="36" width="1" height="1" fill="#404040"/><rect x="1" y="36" width="10" height="1" fill="#FFFFFF"/><rect x="11" y="36" width="1" height="1" fill="#E4E4E4"/><rect x="12" y="36" width="1" height="1" fill="#404040"/><rect x="0" y="37" width="1" height="1" fill="#404040"/><rect x="1" y="37" width="10" height="1" fill="#FFFFFF"/><rect x="11" y="37" width="1" height="1" fill="#E4E4E4"/><rect x="12" y="37" width="1" height="1" fill="#404040"/><rect x="0" y="38" width="1" height="1" fill="#404040"/><rect x="1" y="38" width="10" height="1" fill="#FFFFFF"/><rect x="11" y="38" width="1" height="1" fill="#E4E4E4"/><rect x="12" y="38" width="1" height="1" fill="#404040"/><rect x="0" y="39" width="1" height="1" fill="#404040"/><rect x="1" y="39" width="10" height="1" fill="#FFFFFF"/><rect x="11" y="39" width="1" height="1" fill="#E4E4E4"/><rect x="12" y="39" width="1" height="1" fill="#404040"/><rect x="0" y="40" width="1" height="1" fill="#404040"/><rect x="1" y="40" width="10" height="1" fill="#FFFFFF"/><rect x="11" y="40" width="1" height="1" fill="#E4E4E4"/><rect x="12" y="40" width="1" height="1" fill="#404040"/><rect x="0" y="41" width="1" height="1" fill="#404040"/><rect x="1" y="41" width="10" height="1" fill="#FFFFFF"/><rect x="11" y="41" width="1" height="1" fill="#E4E4E4"/><rect x="12" y="41" width="1" height="1" fill="#404040"/><rect x="0" y="42" width="1" height="1" fill="#404040"/><rect x="1" y="42" width="10" height="1" fill="#FFFFFF"/><rect x="11" y="42" width="1" height="1" fill="#E4E4E4"/><rect x="12" y="42" width="1" height="1" fill="#404040"/><rect x="0" y="43" width="1" height="1" fill="#404040"/><rect x="1" y="43" width="10" height="1" fill="#FFFFFF"/><rect x="11" y="43" width="1" height="1" fill="#E4E4E4"/><rect x="12" y="43" width="1" height="1" fill="#404040"/><rect x="0" y="44" width="1" height="1" fill="#404040"/><rect x="1" y="44" width="10" height="1" fill="#FFFFFF"/><rect x="11" y="44" width="1" height="1" fill="#E4E4E4"/><rect x="12" y="44" width="1" height="1" fill="#404040"/><rect x="0" y="45" width="1" height="1" fill="#404040"/><rect x="1" y="45" width="10" height="1" fill="#FFFFFF"/><rect x="11" y="45" width="1" height="1" fill="#E4E4E4"/><rect x="12" y="45" width="1" height="1" fill="#404040"/><rect x="0" y="46" width="1" height="1" fill="#404040"/><rect x="1" y="46" width="10" height="1" fill="#FFFFFF"/><rect x="11" y="46" width="1" height="1" fill="#E4E4E4"/><rect x="12" y="46" width="1" height="1" fill="#404040"/><rect x="0" y="47" width="1" height="1" fill="#404040"/><rect x="1" y="47" width="10" height="1" fill="#FFFFFF"/><rect x="11" y="47" width="1" height="1" fill="#E4E4E4"/><rect x="12" y="47" width="1" height="1" fill="#404040"/><rect x="0" y="48" width="1" height="1" fill="#404040"/><rect x="1" y="48" width="10" height="1" fill="#FFFFFF"/><rect x="11" y="48" width="1" height="1" fill="#E4E4E4"/><rect x="12" y="48" width="1" height="1" fill="#404040"/><rect x="0" y="49" width="1" height="1" fill="#404040"/><rect x="1" y="49" width="10" height="1" fill="#FFFFFF"/><rect x="11" y="49" width="1" height="1" fill="#E4E4E4"/><rect x="12" y="49" width="1" height="1" fill="#404040"/><rect x="0" y="50" width="1" height="1" fill="#404040"/><rect x="1" y="50" width="10" height="1" fill="#FFFFFF"/><rect x="11" y="50" width="1" height="1" fill="#E4E4E4"/><rect x="12" y="50" width="1" height="1" fill="#404040"/><rect x="0" y="51" width="1" height="1" fill="#404040"/><rect x="1" y="51" width="10" height="1" fill="#FFFFFF"/><rect x="11" y="51" width="1" height="1" fill="#E4E4E4"/><rect x="12" y="51" width="1" height="1" fill="#404040"/><rect x="0" y="52" width="1" height="1" fill="#404040"/><rect x="1" y="52" width="10" height="1" fill="#FFFFFF"/><rect x="11" y="52" width="1" height="1" fill="#E4E4E4"/><rect x="12" y="52" width="1" height="1" fill="#404040"/><rect x="0" y="53" width="1" height="1" fill="#404040"/><rect x="1" y="53" width="10" height="1" fill="#FFFFFF"/><rect x="11" y="53" width="1" height="1" fill="#E4E4E4"/><rect x="12" y="53" width="1" height="1" fill="#404040"/><rect x="0" y="54" width="1" height="1" fill="#404040"/><rect x="1" y="54" width="10" height="1" fill="#FFFFFF"/><rect x="11" y="54" width="1" height="1" fill="#E4E4E4"/><rect x="12" y="54" width="1" height="1" fill="#404040"/><rect x="0" y="55" width="1" height="1" fill="#404040"/><rect x="1" y="55" width="10" height="1" fill="#FFFFFF"/><rect x="11" y="55" width="1" height="1" fill="#E4E4E4"/><rect x="12" y="55" width="1" height="1" fill="#404040"/><rect x="0" y="56" width="1" height="1" fill="#404040"/><rect x="1" y="56" width="10" height="1" fill="#FFFFFF"/><rect x="11" y="56" width="1" height="1" fill="#E4E4E4"/><rect x="12" y="56" width="1" height="1" fill="#404040"/><rect x="0" y="57" width="1" height="1" fill="#404040"/><rect x="1" y="57" width="10" height="1" fill="#FFFFFF"/><rect x="11" y="57" width="1" height="1" fill="#E4E4E4"/><rect x="12" y="57" width="1" height="1" fill="#404040"/><rect x="0" y="58" width="1" height="1" fill="#404040"/><rect x="1" y="58" width="10" height="1" fill="#FFFFFF"/><rect x="11" y="58" width="1" height="1" fill="#E4E4E4"/><rect x="12" y="58" width="1" height="1" fill="#404040"/><rect x="0" y="59" width="1" height="1" fill="#404040"/><rect x="1" y="59" width="10" height="1" fill="#FFFFFF"/><rect x="11" y="59" width="1" height="1" fill="#E4E4E4"/><rect x="12" y="59" width="1" height="1" fill="#404040"/><rect x="0" y="60" width="1" height="1" fill="#404040"/><rect x="1" y="60" width="10" height="1" fill="#FFFFFF"/><rect x="11" y="60" width="1" height="1" fill="#E4E4E4"/><rect x="12" y="60" width="1" height="1" fill="#404040"/><rect x="0" y="61" width="1" height="1" fill="#404040"/><rect x="1" y="61" width="10" height="1" fill="#FFFFFF"/><rect x="11" y="61" width="1" height="1" fill="#E4E4E4"/><rect x="12" y="61" width="1" height="1" fill="#404040"/><rect x="0" y="62" width="1" height="1" fill="#404040"/><rect x="1" y="62" width="10" height="1" fill="#FFFFFF"/><rect x="11" y="62" width="1" height="1" fill="#E4E4E4"/><rect x="12" y="62" width="1" height="1" fill="#404040"/><rect x="0" y="63" width="1" height="1" fill="#404040"/><rect x="1" y="63" width="10" height="1" fill="#FFFFFF"/><rect x="11" y="63" width="1" height="1" fill="#E4E4E4"/><rect x="12" y="63" width="1" height="1" fill="#404040"/><rect x="0" y="64" width="1" height="1" fill="#404040"/><rect x="1" y="64" width="10" height="1" fill="#FFFFFF"/><rect x="11" y="64" width="1" height="1" fill="#E4E4E4"/><rect x="12" y="64" width="1" height="1" fill="#404040"/><rect x="0" y="65" width="1" height="1" fill="#404040"/><rect x="1" y="65" width="10" height="1" fill="#FFFFFF"/><rect x="11" y="65" width="1" height="1" fill="#E4E4E4"/><rect x="12" y="65" width="1" height="1" fill="#404040"/><rect x="0" y="66" width="1" height="1" fill="#404040"/><rect x="1" y="66" width="10" height="1" fill="#FFFFFF"/><rect x="11" y="66" width="1" height="1" fill="#E4E4E4"/><rect x="12" y="66" width="1" height="1" fill="#404040"/><rect x="0" y="67" width="1" height="1" fill="#404040"/><rect x="1" y="67" width="10" height="1" fill="#FFFFFF"/><rect x="11" y="67" width="1" height="1" fill="#E4E4E4"/><rect x="12" y="67" width="1" height="1" fill="#404040"/><rect x="0" y="68" width="13" height="1" fill="#404040"/><rect x="0" y="69" width="1" height="1" fill="#404040"/><rect x="1" y="69" width="11" height="1" fill="#66CC5E"/><rect x="12" y="69" width="1" height="1" fill="#404040"/><rect x="0" y="70" width="1" height="1" fill="#404040"/><rect x="1" y="70" width="11" height="1" fill="#66CC5E"/><rect x="12" y="70" width="1" height="1" fill="#404040"/><rect x="0" y="71" width="1" height="1" fill="#404040"/><rect x="1" y="71" width="11" height="1" fill="#66CC5E"/><rect x="12" y="71" width="1" height="1" fill="#404040"/><rect x="0" y="72" width="1" height="1" fill="#404040"/><rect x="1" y="72" width="11" height="1" fill="#66CC5E"/><rect x="12" y="72" width="1" height="1" fill="#404040"/><rect x="0" y="73" width="1" height="1" fill="#404040"/><rect x="1" y="73" width="2" height="1" fill="#66CC5E"/><rect x="3" y="73" width="7" height="1" fill="#000000"/><rect x="10" y="73" width="2" height="1" fill="#66CC5E"/><rect x="12" y="73" width="1" height="1" fill="#404040"/><rect x="0" y="74" width="1" height="1" fill="#404040"/><rect x="1" y="74" width="3" height="1" fill="#66CC5E"/><rect x="4" y="74" width="5" height="1" fill="#000000"/><rect x="9" y="74" width="3" height="1" fill="#66CC5E"/><rect x="12" y="74" width="1" height="1" fill="#404040"/><rect x="0" y="75" width="1" height="1" fill="#404040"/><rect x="1" y="75" width="4" height="1" fill="#66CC5E"/><rect x="5" y="75" width="3" height="1" fill="#000000"/><rect x="8" y="75" width="4" height="1" fill="#66CC5E"/><rect x="12" y="75" width="1" height="1" fill="#404040"/><rect x="0" y="76" width="1" height="1" fill="#404040"/><rect x="1" y="76" width="5" height="1" fill="#66CC5E"/><rect x="6" y="76" width="1" height="1" fill="#000000"/><rect x="7" y="76" width="5" height="1" fill="#66CC5E"/><rect x="12" y="76" width="1" height="1" fill="#404040"/><rect x="0" y="77" width="1" height="1" fill="#404040"/><rect x="1" y="77" width="11" height="1" fill="#66CC5E"/><rect x="12" y="77" width="1" height="1" fill="#404040"/><rect x="1" y="78" width="1" height="1" fill="#404040"/><rect x="2" y="78" width="9" height="1" fill="#66CC5E"/><rect x="11" y="78" width="1" height="1" fill="#404040"/><rect x="2" y="79" width="2" height="1" fill="#404040"/><rect x="4" y="79" width="5" height="1" fill="#66CC5E"/><rect x="9" y="79" width="2" height="1" fill="#404040"/><rect x="4" y="80" width="5" height="1" fill="#404040"/></svg>
<div class="a" style="left:120px;top:287px;width:105px;height:17px;background:#DCD0CC"></div>
<svg class="a" style="left:120px;top:289px;" width="105" height="13" viewBox="0 0 105 13" shape-rendering="crispEdges"><rect x="3" y="0" width="99" height="1" fill="#404040"/><rect x="2" y="1" width="1" height="1" fill="#404040"/><rect x="3" y="1" width="10" height="1" fill="#66CC5E"/><rect x="13" y="1" width="1" height="1" fill="#404040"/><rect x="14" y="1" width="5" height="1" fill="#66CC5E"/><rect x="19" y="1" width="1" height="1" fill="#404040"/><rect x="20" y="1" width="73" height="1" fill="#FFFFFF"/><rect x="93" y="1" width="1" height="1" fill="#404040"/><rect x="94" y="1" width="8" height="1" fill="#66CC5E"/><rect x="102" y="1" width="1" height="1" fill="#404040"/><rect x="1" y="2" width="1" height="1" fill="#404040"/><rect x="2" y="2" width="11" height="1" fill="#66CC5E"/><rect x="13" y="2" width="1" height="1" fill="#404040"/><rect x="14" y="2" width="5" height="1" fill="#66CC5E"/><rect x="19" y="2" width="1" height="1" fill="#404040"/><rect x="20" y="2" width="73" height="1" fill="#FFFFFF"/><rect x="93" y="2" width="1" height="1" fill="#404040"/><rect x="94" y="2" width="9" height="1" fill="#66CC5E"/><rect x="103" y="2" width="1" height="1" fill="#404040"/><rect x="1" y="3" width="1" height="1" fill="#404040"/><rect x="2" y="3" width="6" height="1" fill="#66CC5E"/><rect x="8" y="3" width="1" height="1" fill="#000000"/><rect x="9" y="3" width="4" height="1" fill="#66CC5E"/><rect x="13" y="3" width="1" height="1" fill="#404040"/><rect x="14" y="3" width="5" height="1" fill="#66CC5E"/><rect x="19" y="3" width="1" height="1" fill="#404040"/><rect x="20" y="3" width="73" height="1" fill="#FFFFFF"/><rect x="93" y="3" width="1" height="1" fill="#404040"/><rect x="94" y="3" width="3" height="1" fill="#66CC5E"/><rect x="97" y="3" width="1" height="1" fill="#000000"/><rect x="98" y="3" width="5" height="1" fill="#66CC5E"/><rect x="103" y="3" width="1" height="1" fill="#404040"/><rect x="0" y="4" width="1" height="1" fill="#404040"/><rect x="1" y="4" width="6" height="1" fill="#66CC5E"/><rect x="7" y="4" width="2" height="1" fill="#000000"/><rect x="9" y="4" width="4" height="1" fill="#66CC5E"/><rect x="13" y="4" width="1" height="1" fill="#404040"/><rect x="14" y="4" width="5" height="1" fill="#66CC5E"/><rect x="19" y="4" width="1" height="1" fill="#404040"/><rect x="20" y="4" width="73" height="1" fill="#FFFFFF"/><rect x="93" y="4" width="1" height="1" fill="#404040"/><rect x="94" y="4" width="3" height="1" fill="#66CC5E"/><rect x="97" y="4" width="2" height="1" fill="#000000"/><rect x="99" y="4" width="5" height="1" fill="#66CC5E"/><rect x="104" y="4" width="1" height="1" fill="#404040"/><rect x="0" y="5" width="1" height="1" fill="#404040"/><rect x="1" y="5" width="5" height="1" fill="#66CC5E"/><rect x="6" y="5" width="3" height="1" fill="#000000"/><rect x="9" y="5" width="4" height="1" fill="#66CC5E"/><rect x="13" y="5" width="1" height="1" fill="#404040"/><rect x="14" y="5" width="5" height="1" fill="#66CC5E"/><rect x="19" y="5" width="1" height="1" fill="#404040"/><rect x="20" y="5" width="73" height="1" fill="#FFFFFF"/><rect x="93" y="5" width="1" height="1" fill="#404040"/><rect x="94" y="5" width="3" height="1" fill="#66CC5E"/><rect x="97" y="5" width="3" height="1" fill="#000000"/><rect x="100" y="5" width="4" height="1" fill="#66CC5E"/><rect x="104" y="5" width="1" height="1" fill="#404040"/><rect x="0" y="6" width="1" height="1" fill="#404040"/><rect x="1" y="6" width="4" height="1" fill="#66CC5E"/><rect x="5" y="6" width="4" height="1" fill="#000000"/><rect x="9" y="6" width="4" height="1" fill="#66CC5E"/><rect x="13" y="6" width="1" height="1" fill="#404040"/><rect x="14" y="6" width="5" height="1" fill="#66CC5E"/><rect x="19" y="6" width="1" height="1" fill="#404040"/><rect x="20" y="6" width="73" height="1" fill="#FFFFFF"/><rect x="93" y="6" width="1" height="1" fill="#404040"/><rect x="94" y="6" width="3" height="1" fill="#66CC5E"/><rect x="97" y="6" width="4" height="1" fill="#000000"/><rect x="101" y="6" width="3" height="1" fill="#66CC5E"/><rect x="104" y="6" width="1" height="1" fill="#404040"/><rect x="0" y="7" width="1" height="1" fill="#404040"/><rect x="1" y="7" width="5" height="1" fill="#66CC5E"/><rect x="6" y="7" width="3" height="1" fill="#000000"/><rect x="9" y="7" width="4" height="1" fill="#66CC5E"/><rect x="13" y="7" width="1" height="1" fill="#404040"/><rect x="14" y="7" width="5" height="1" fill="#66CC5E"/><rect x="19" y="7" width="1" height="1" fill="#404040"/><rect x="20" y="7" width="73" height="1" fill="#FFFFFF"/><rect x="93" y="7" width="1" height="1" fill="#404040"/><rect x="94" y="7" width="3" height="1" fill="#66CC5E"/><rect x="97" y="7" width="3" height="1" fill="#000000"/><rect x="100" y="7" width="4" height="1" fill="#66CC5E"/><rect x="104" y="7" width="1" height="1" fill="#404040"/><rect x="0" y="8" width="1" height="1" fill="#404040"/><rect x="1" y="8" width="6" height="1" fill="#66CC5E"/><rect x="7" y="8" width="2" height="1" fill="#000000"/><rect x="9" y="8" width="4" height="1" fill="#66CC5E"/><rect x="13" y="8" width="1" height="1" fill="#404040"/><rect x="14" y="8" width="5" height="1" fill="#66CC5E"/><rect x="19" y="8" width="1" height="1" fill="#404040"/><rect x="20" y="8" width="73" height="1" fill="#FFFFFF"/><rect x="93" y="8" width="1" height="1" fill="#404040"/><rect x="94" y="8" width="3" height="1" fill="#66CC5E"/><rect x="97" y="8" width="2" height="1" fill="#000000"/><rect x="99" y="8" width="5" height="1" fill="#66CC5E"/><rect x="104" y="8" width="1" height="1" fill="#404040"/><rect x="1" y="9" width="1" height="1" fill="#404040"/><rect x="2" y="9" width="6" height="1" fill="#66CC5E"/><rect x="8" y="9" width="1" height="1" fill="#000000"/><rect x="9" y="9" width="4" height="1" fill="#66CC5E"/><rect x="13" y="9" width="1" height="1" fill="#404040"/><rect x="14" y="9" width="5" height="1" fill="#66CC5E"/><rect x="19" y="9" width="1" height="1" fill="#404040"/><rect x="20" y="9" width="73" height="1" fill="#FFFFFF"/><rect x="93" y="9" width="1" height="1" fill="#404040"/><rect x="94" y="9" width="3" height="1" fill="#66CC5E"/><rect x="97" y="9" width="1" height="1" fill="#000000"/><rect x="98" y="9" width="5" height="1" fill="#66CC5E"/><rect x="103" y="9" width="1" height="1" fill="#404040"/><rect x="1" y="10" width="1" height="1" fill="#404040"/><rect x="2" y="10" width="11" height="1" fill="#66CC5E"/><rect x="13" y="10" width="1" height="1" fill="#404040"/><rect x="14" y="10" width="5" height="1" fill="#66CC5E"/><rect x="19" y="10" width="1" height="1" fill="#404040"/><rect x="20" y="10" width="73" height="1" fill="#FFFFFF"/><rect x="93" y="10" width="1" height="1" fill="#404040"/><rect x="94" y="10" width="9" height="1" fill="#66CC5E"/><rect x="103" y="10" width="1" height="1" fill="#404040"/><rect x="2" y="11" width="1" height="1" fill="#404040"/><rect x="3" y="11" width="10" height="1" fill="#66CC5E"/><rect x="13" y="11" width="1" height="1" fill="#404040"/><rect x="14" y="11" width="5" height="1" fill="#66CC5E"/><rect x="19" y="11" width="1" height="1" fill="#404040"/><rect x="20" y="11" width="73" height="1" fill="#E4E4E4"/><rect x="93" y="11" width="1" height="1" fill="#404040"/><rect x="94" y="11" width="8" height="1" fill="#66CC5E"/><rect x="102" y="11" width="1" height="1" fill="#404040"/><rect x="3" y="12" width="99" height="1" fill="#404040"/></svg>
<div class="a" style="left:232px;top:255px;width:145px;height:49px;border:1px solid #000;background:#D4D0C8"></div>
<div class="t" style="left:242px;top:264.69px;font-size:11px;line-height:11px;color:#000;transform:scaleX(0.9621);transform-origin:0 0;">ActiveSkin Design-Time Fix</div>
<div class="t" style="left:283px;top:277.69px;font-size:11px;line-height:11px;color:#000;transform:scaleX(0.9294);transform-origin:0 0;">By SpitFire</div>
<div class="a" style="left:838px;top:71px;width:186px;height:660px;background:#D4D0C8"></div>
<div class="a" style="left:844px;top:71px;width:180px;height:15px;background:#808080"></div>
<div class="t" style="left:846px;top:72.69px;font-size:11px;line-height:11px;color:#D4D0C8;transform:scaleX(0.9363);transform-origin:0 0;">Project - Project1</div>
<div class="a" style="left:1010px;top:72px;width:13px;height:13px;background:#D4D0C8;border-style:solid;border-width:1px;border-color:#fff #404040 #404040 #fff;box-shadow:inset 1px 1px 0 #D4D0C8,inset -1px -1px 0 #808080"></div>
<svg class="a" style="left:1012px;top:74px;" width="8" height="7" viewBox="0 0 8 7" shape-rendering="crispEdges"><path d="M0 0h2l2 2.5L6 0h2L5 3.5 8 7H6L4 4.5 2 7H0l3-3.5z" fill="#000" shape-rendering="auto"/></svg>
<div class="a" style="left:844px;top:86px;width:180px;height:26px;border-top:1px solid #fff;border-left:1px solid #fff"></div>
<div class="a" style="left:844px;top:112px;width:180px;height:1px;background:#808080"></div>
<div class="a" style="left:844px;top:114px;width:180px;height:1px;background:#808080"></div>
<svg class="a" style="left:850px;top:94px;" width="14" height="12" viewBox="0 0 14 12" shape-rendering="crispEdges"><rect x="0.5" y="0.5" width="13" height="11" fill="#fff" stroke="#000"/><rect x="0" y="0" width="14" height="2" fill="#000080"/><rect x="1" y="2" width="2" height="9" fill="#808080"/><rect x="4" y="3" width="4" height="1" fill="#00A000"/><rect x="9" y="3" width="1" height="1" fill="#00A000"/><rect x="4" y="5" width="3" height="1" fill="#808080"/><rect x="8" y="5" width="2" height="1" fill="#808080"/><rect x="4" y="7" width="3" height="1" fill="#808080"/><rect x="8" y="7" width="3" height="1" fill="#00A000"/><rect x="4" y="9" width="5" height="1" fill="#808080"/></svg>
<svg class="a" style="left:872px;top:94px;" width="15" height="12" viewBox="0 0 15 12" shape-rendering="crispEdges"><rect x="0.5" y="0.5" width="14" height="11" fill="#C0C0C0" stroke="#000"/><rect x="0" y="0" width="15" height="2" fill="#000080"/><rect x="3" y="4" width="3" height="1" fill="#000"/><rect x="7" y="3.5" width="6" height="2" fill="#fff" stroke="#000" stroke-width="0"/><rect x="3" y="8" width="3" height="1" fill="#000"/><rect x="7" y="7" width="6" height="3" fill="#fff"/><rect x="7" y="3" width="6" height="3" fill="#fff"/><rect x="7" y="3" width="6" height="1" fill="#000"/><rect x="7" y="7" width="6" height="1" fill="#000"/></svg>
<div class="a" style="left:894px;top:89px;width:2px;height:22px;border-left:1px solid #808080;border-right:1px solid #fff"></div>
<div class="a" style="left:898px;top:89px;width:23px;height:22px;border-style:solid;border-width:1px;border-color:#808080 #fff #fff #808080"></div>
<svg class="a" style="left:899px;top:90px;" width="21" height="20" viewBox="0 0 21 20" shape-rendering="crispEdges"><rect width="21" height="20" fill="url(#dither)"/><path d="M3.5 5.5h5l1 1h7v8h-13z" fill="#C0C0C0" stroke="#000" shape-rendering="auto"/><rect x="4" y="13" width="13" height="1" fill="#808080"/></svg>
<div class="a" style="left:844px;top:115px;width:179px;height:201px;background:#fff;border-bottom:1px solid #E4E4E4"></div>
<div class="a" style="left:1023px;top:86px;width:1px;height:230px;background:#C0C0C0"></div>
<svg class="a" style="left:850px;top:121px;" width="9" height="9" viewBox="0 0 9 9" shape-rendering="crispEdges"><rect x="0.5" y="0.5" width="8" height="8" fill="#fff" stroke="#808080"/><rect x="2" y="4" width="5" height="1" fill="#000"/></svg>
<svg class="a" style="left:860px;top:125px;" width="5" height="1" viewBox="0 0 5 1" shape-rendering="crispEdges"><rect x="0" y="0" width="1" height="1" fill="#808080"/><rect x="2" y="0" width="1" height="1" fill="#808080"/><rect x="4" y="0" width="1" height="1" fill="#808080"/></svg>
<svg class="a" style="left:874px;top:133px;" width="1" height="40" viewBox="0 0 1 40" shape-rendering="crispEdges"><rect x="0" y="0" width="1" height="1" fill="#808080"/><rect x="0" y="2" width="1" height="1" fill="#808080"/><rect x="0" y="4" width="1" height="1" fill="#808080"/><rect x="0" y="6" width="1" height="1" fill="#808080"/><rect x="0" y="8" width="1" height="1" fill="#808080"/><rect x="0" y="10" width="1" height="1" fill="#808080"/><rect x="0" y="12" width="1" height="1" fill="#808080"/><rect x="0" y="14" width="1" height="1" fill="#808080"/><rect x="0" y="16" width="1" height="1" fill="#808080"/><rect x="0" y="18" width="1" height="1" fill="#808080"/><rect x="0" y="20" width="1" height="1" fill="#808080"/><rect x="0" y="22" width="1" height="1" fill="#808080"/><rect x="0" y="24" width="1" height="1" fill="#808080"/><rect x="0" y="26" width="1" height="1" fill="#808080"/><rect x="0" y="28" width="1" height="1" fill="#808080"/><rect x="0" y="30" width="1" height="1" fill="#808080"/><rect x="0" y="32" width="1" height="1" fill="#808080"/><rect x="0" y="34" width="1" height="1" fill="#808080"/><rect x="0" y="36" width="1" height="1" fill="#808080"/><rect x="0" y="38" width="1" height="1" fill="#808080"/></svg>
<svg class="a" style="left:869px;top:137px;" width="9" height="9" viewBox="0 0 9 9" shape-rendering="crispEdges"><rect x="0.5" y="0.5" width="8" height="8" fill="#fff" stroke="#808080"/><rect x="2" y="4" width="5" height="1" fill="#000"/></svg>
<svg class="a" style="left:879px;top:141px;" width="5" height="1" viewBox="0 0 5 1" shape-rendering="crispEdges"><rect x="0" y="0" width="1" height="1" fill="#808080"/><rect x="2" y="0" width="1" height="1" fill="#808080"/><rect x="4" y="0" width="1" height="1" fill="#808080"/></svg>
<svg class="a" style="left:869px;top:169px;" width="9" height="9" viewBox="0 0 9 9" shape-rendering="crispEdges"><rect x="0.5" y="0.5" width="8" height="8" fill="#fff" stroke="#808080"/><rect x="2" y="4" width="5" height="1" fill="#000"/></svg>
<svg class="a" style="left:879px;top:173px;" width="5" height="1" viewBox="0 0 5 1" shape-rendering="crispEdges"><rect x="0" y="0" width="1" height="1" fill="#808080"/><rect x="2" y="0" width="1" height="1" fill="#808080"/><rect x="4" y="0" width="1" height="1" fill="#808080"/></svg>
<svg class="a" style="left:893px;top:147px;" width="1" height="10" viewBox="0 0 1 10" shape-rendering="crispEdges"><rect x="0" y="0" width="1" height="1" fill="#808080"/><rect x="0" y="2" width="1" height="1" fill="#808080"/><rect x="0" y="4" width="1" height="1" fill="#808080"/><rect x="0" y="6" width="1" height="1" fill="#808080"/><rect x="0" y="8" width="1" height="1" fill="#808080"/></svg>
<svg class="a" style="left:893px;top:157px;" width="10" height="1" viewBox="0 0 10 1" shape-rendering="crispEdges"><rect x="0" y="0" width="1" height="1" fill="#808080"/><rect x="2" y="0" width="1" height="1" fill="#808080"/><rect x="4" y="0" width="1" height="1" fill="#808080"/><rect x="6" y="0" width="1" height="1" fill="#808080"/><rect x="8" y="0" width="1" height="1" fill="#808080"/></svg>
<svg class="a" style="left:893px;top:179px;" width="1" height="10" viewBox="0 0 1 10" shape-rendering="crispEdges"><rect x="0" y="0" width="1" height="1" fill="#808080"/><rect x="0" y="2" width="1" height="1" fill="#808080"/><rect x="0" y="4" width="1" height="1" fill="#808080"/><rect x="0" y="6" width="1" height="1" fill="#808080"/><rect x="0" y="8" width="1" height="1" fill="#808080"/></svg>
<svg class="a" style="left:893px;top:189px;" width="10" height="1" viewBox="0 0 10 1" shape-rendering="crispEdges"><rect x="0" y="0" width="1" height="1" fill="#808080"/><rect x="2" y="0" width="1" height="1" fill="#808080"/><rect x="4" y="0" width="1" height="1" fill="#808080"/><rect x="6" y="0" width="1" height="1" fill="#808080"/><rect x="8" y="0" width="1" height="1" fill="#808080"/></svg>
<svg class="a" style="left:865px;top:117px;" width="16" height="16" viewBox="0 0 16 16" shape-rendering="crispEdges"><rect x="13" y="0" width="2" height="1" fill="#000000"/><rect x="12" y="1" width="1" height="1" fill="#000000"/><rect x="13" y="1" width="2" height="1" fill="#FFFF00"/><rect x="15" y="1" width="1" height="1" fill="#000000"/><rect x="2" y="2" width="1" height="1" fill="#000000"/><rect x="12" y="2" width="1" height="1" fill="#000000"/><rect x="13" y="2" width="1" height="1" fill="#FFFF00"/><rect x="14" y="2" width="1" height="1" fill="#000000"/><rect x="2" y="3" width="2" height="1" fill="#000000"/><rect x="13" y="3" width="1" height="1" fill="#000000"/><rect x="2" y="4" width="1" height="1" fill="#000000"/><rect x="3" y="4" width="2" height="1" fill="#00FFFF"/><rect x="5" y="4" width="2" height="1" fill="#000000"/><rect x="11" y="4" width="2" height="1" fill="#000000"/><rect x="2" y="5" width="1" height="1" fill="#000000"/><rect x="3" y="5" width="2" height="1" fill="#FFFFFF"/><rect x="5" y="5" width="2" height="1" fill="#00FFFF"/><rect x="7" y="5" width="2" height="1" fill="#000000"/><rect x="11" y="5" width="1" height="1" fill="#000000"/><rect x="12" y="5" width="1" height="1" fill="#FF0000"/><rect x="13" y="5" width="1" height="1" fill="#000000"/><rect x="2" y="6" width="1" height="1" fill="#000000"/><rect x="3" y="6" width="4" height="1" fill="#FFFFFF"/><rect x="7" y="6" width="2" height="1" fill="#00FFFF"/><rect x="9" y="6" width="2" height="1" fill="#000000"/><rect x="11" y="6" width="1" height="1" fill="#FF0000"/><rect x="12" y="6" width="1" height="1" fill="#000000"/><rect x="2" y="7" width="1" height="1" fill="#000000"/><rect x="3" y="7" width="6" height="1" fill="#FFFFFF"/><rect x="9" y="7" width="1" height="1" fill="#000000"/><rect x="10" y="7" width="1" height="1" fill="#FF0000"/><rect x="11" y="7" width="2" height="1" fill="#000000"/><rect x="2" y="8" width="1" height="1" fill="#000000"/><rect x="3" y="8" width="6" height="1" fill="#FFFFFF"/><rect x="9" y="8" width="1" height="1" fill="#000000"/><rect x="10" y="8" width="1" height="1" fill="#FFFF00"/><rect x="11" y="8" width="2" height="1" fill="#000000"/><rect x="13" y="8" width="1" height="1" fill="#FFFF00"/><rect x="14" y="8" width="1" height="1" fill="#000000"/><rect x="2" y="9" width="2" height="1" fill="#000000"/><rect x="4" y="9" width="5" height="1" fill="#FFFFFF"/><rect x="9" y="9" width="6" height="1" fill="#000000"/><rect x="3" y="10" width="2" height="1" fill="#000000"/><rect x="5" y="10" width="4" height="1" fill="#FFFFFF"/><rect x="9" y="10" width="1" height="1" fill="#000000"/><rect x="10" y="10" width="3" height="1" fill="#FFFFFF"/><rect x="13" y="10" width="1" height="1" fill="#000000"/><rect x="4" y="11" width="5" height="1" fill="#000000"/><rect x="9" y="11" width="3" height="1" fill="#FFFFFF"/><rect x="12" y="11" width="1" height="1" fill="#000000"/><rect x="3" y="12" width="1" height="1" fill="#000000"/><rect x="4" y="12" width="7" height="1" fill="#FFFFFF"/><rect x="11" y="12" width="1" height="1" fill="#000000"/><rect x="2" y="13" width="1" height="1" fill="#000000"/><rect x="3" y="13" width="2" height="1" fill="#FFFFFF"/><rect x="5" y="13" width="1" height="1" fill="#808080"/><rect x="6" y="13" width="1" height="1" fill="#FFFFFF"/><rect x="7" y="13" width="1" height="1" fill="#808080"/><rect x="8" y="13" width="2" height="1" fill="#FFFFFF"/><rect x="10" y="13" width="1" height="1" fill="#000000"/><rect x="1" y="14" width="1" height="1" fill="#000000"/><rect x="2" y="14" width="7" height="1" fill="#FFFFFF"/><rect x="9" y="14" width="1" height="1" fill="#000000"/><rect x="0" y="15" width="9" height="1" fill="#000000"/></svg>
<div class="t" style="left:886px;top:119.69px;font-size:11px;line-height:11px;font-weight:bold;color:#000;transform:scaleX(1.1111);transform-origin:0 0;">Project1 (Project1)</div>
<svg class="a" style="left:885px;top:134px;" width="15" height="12" viewBox="0 0 15 12" shape-rendering="crispEdges"><rect x="3" y="0" width="5" height="1" fill="#808080"/><rect x="2" y="1" width="1" height="1" fill="#808080"/><rect x="3" y="1" width="5" height="1" fill="#FFFFFF"/><rect x="8" y="1" width="1" height="1" fill="#808080"/><rect x="1" y="2" width="1" height="1" fill="#808080"/><rect x="2" y="2" width="1" height="1" fill="#FFFFFF"/><rect x="3" y="2" width="1" height="1" fill="#FFFF00"/><rect x="4" y="2" width="1" height="1" fill="#A0A0B8"/><rect x="5" y="2" width="1" height="1" fill="#FFFF00"/><rect x="6" y="2" width="1" height="1" fill="#A0A0B8"/><rect x="7" y="2" width="1" height="1" fill="#FFFF00"/><rect x="8" y="2" width="6" height="1" fill="#808080"/><rect x="1" y="3" width="1" height="1" fill="#808080"/><rect x="2" y="3" width="1" height="1" fill="#FFFFFF"/><rect x="3" y="3" width="1" height="1" fill="#A0A0B8"/><rect x="4" y="3" width="1" height="1" fill="#FFFF00"/><rect x="5" y="3" width="1" height="1" fill="#A0A0B8"/><rect x="6" y="3" width="1" height="1" fill="#FFFF00"/><rect x="7" y="3" width="1" height="1" fill="#A0A0B8"/><rect x="8" y="3" width="5" height="1" fill="#FFFFFF"/><rect x="13" y="3" width="1" height="1" fill="#808080"/><rect x="1" y="4" width="1" height="1" fill="#808080"/><rect x="2" y="4" width="1" height="1" fill="#FFFFFF"/><rect x="3" y="4" width="1" height="1" fill="#FFFF00"/><rect x="4" y="4" width="1" height="1" fill="#A0A0B8"/><rect x="5" y="4" width="1" height="1" fill="#FFFF00"/><rect x="6" y="4" width="1" height="1" fill="#A0A0B8"/><rect x="7" y="4" width="1" height="1" fill="#FFFF00"/><rect x="8" y="4" width="1" height="1" fill="#A0A0B8"/><rect x="9" y="4" width="1" height="1" fill="#FFFF00"/><rect x="10" y="4" width="1" height="1" fill="#A0A0B8"/><rect x="11" y="4" width="2" height="1" fill="#FFFF00"/><rect x="13" y="4" width="1" height="1" fill="#808080"/><rect x="0" y="5" width="12" height="1" fill="#808080"/><rect x="12" y="5" width="1" height="1" fill="#000000"/><rect x="13" y="5" width="1" height="1" fill="#FFFF00"/><rect x="14" y="5" width="1" height="1" fill="#808080"/><rect x="0" y="6" width="1" height="1" fill="#808080"/><rect x="1" y="6" width="11" height="1" fill="#FFFFFF"/><rect x="12" y="6" width="1" height="1" fill="#000000"/><rect x="13" y="6" width="1" height="1" fill="#A0A0B8"/><rect x="14" y="6" width="1" height="1" fill="#808080"/><rect x="0" y="7" width="1" height="1" fill="#808080"/><rect x="1" y="7" width="1" height="1" fill="#FFFFFF"/><rect x="2" y="7" width="1" height="1" fill="#FFFF00"/><rect x="3" y="7" width="1" height="1" fill="#A0A0B8"/><rect x="4" y="7" width="1" height="1" fill="#FFFF00"/><rect x="5" y="7" width="1" height="1" fill="#A0A0B8"/><rect x="6" y="7" width="1" height="1" fill="#FFFF00"/><rect x="7" y="7" width="1" height="1" fill="#A0A0B8"/><rect x="8" y="7" width="1" height="1" fill="#FFFF00"/><rect x="9" y="7" width="1" height="1" fill="#A0A0B8"/><rect x="10" y="7" width="1" height="1" fill="#FFFF00"/><rect x="11" y="7" width="1" height="1" fill="#A0A0B8"/><rect x="12" y="7" width="1" height="1" fill="#FFFF00"/><rect x="13" y="7" width="1" height="1" fill="#000000"/><rect x="14" y="7" width="1" height="1" fill="#808080"/><rect x="1" y="8" width="1" height="1" fill="#808080"/><rect x="2" y="8" width="1" height="1" fill="#A0A0B8"/><rect x="3" y="8" width="1" height="1" fill="#FFFF00"/><rect x="4" y="8" width="1" height="1" fill="#A0A0B8"/><rect x="5" y="8" width="1" height="1" fill="#FFFF00"/><rect x="6" y="8" width="1" height="1" fill="#A0A0B8"/><rect x="7" y="8" width="1" height="1" fill="#FFFF00"/><rect x="8" y="8" width="1" height="1" fill="#A0A0B8"/><rect x="9" y="8" width="1" height="1" fill="#FFFF00"/><rect x="10" y="8" width="1" height="1" fill="#A0A0B8"/><rect x="11" y="8" width="1" height="1" fill="#FFFF00"/><rect x="12" y="8" width="1" height="1" fill="#A0A0B8"/><rect x="13" y="8" width="1" height="1" fill="#000000"/><rect x="14" y="8" width="1" height="1" fill="#808080"/><rect x="1" y="9" width="1" height="1" fill="#808080"/><rect x="2" y="9" width="1" height="1" fill="#FFFF00"/><rect x="3" y="9" width="1" height="1" fill="#A0A0B8"/><rect x="4" y="9" width="1" height="1" fill="#FFFF00"/><rect x="5" y="9" width="1" height="1" fill="#A0A0B8"/><rect x="6" y="9" width="1" height="1" fill="#FFFF00"/><rect x="7" y="9" width="1" height="1" fill="#A0A0B8"/><rect x="8" y="9" width="1" height="1" fill="#FFFF00"/><rect x="9" y="9" width="1" height="1" fill="#A0A0B8"/><rect x="10" y="9" width="1" height="1" fill="#FFFF00"/><rect x="11" y="9" width="1" height="1" fill="#A0A0B8"/><rect x="12" y="9" width="1" height="1" fill="#FFFF00"/><rect x="13" y="9" width="1" height="1" fill="#000000"/><rect x="2" y="10" width="1" height="1" fill="#808080"/><rect x="3" y="10" width="1" height="1" fill="#FFFF00"/><rect x="4" y="10" width="1" height="1" fill="#A0A0B8"/><rect x="5" y="10" width="1" height="1" fill="#FFFF00"/><rect x="6" y="10" width="1" height="1" fill="#A0A0B8"/><rect x="7" y="10" width="1" height="1" fill="#FFFF00"/><rect x="8" y="10" width="1" height="1" fill="#A0A0B8"/><rect x="9" y="10" width="1" height="1" fill="#FFFF00"/><rect x="10" y="10" width="1" height="1" fill="#A0A0B8"/><rect x="11" y="10" width="1" height="1" fill="#FFFF00"/><rect x="12" y="10" width="1" height="1" fill="#A0A0B8"/><rect x="13" y="10" width="1" height="1" fill="#FFFF00"/><rect x="2" y="11" width="12" height="1" fill="#808080"/></svg>
<div class="t" style="left:905px;top:135.69px;font-size:11px;line-height:11px;color:#000;transform:scaleX(0.9303);transform-origin:0 0;">Forms</div>
<svg class="a" style="left:905px;top:150px;" width="13" height="12" viewBox="0 0 13 12" shape-rendering="crispEdges"><rect x="0" y="0" width="3" height="1" fill="#000000"/><rect x="0" y="1" width="1" height="1" fill="#000000"/><rect x="1" y="1" width="2" height="1" fill="#00FFFF"/><rect x="3" y="1" width="4" height="1" fill="#000000"/><rect x="0" y="2" width="3" height="1" fill="#000000"/><rect x="3" y="2" width="4" height="1" fill="#00FFFF"/><rect x="7" y="2" width="3" height="1" fill="#000000"/><rect x="0" y="3" width="1" height="1" fill="#000000"/><rect x="1" y="3" width="2" height="1" fill="#FFFFFF"/><rect x="3" y="3" width="4" height="1" fill="#000000"/><rect x="7" y="3" width="2" height="1" fill="#00FFFF"/><rect x="9" y="3" width="1" height="1" fill="#000000"/><rect x="0" y="4" width="1" height="1" fill="#000000"/><rect x="1" y="4" width="6" height="1" fill="#FFFFFF"/><rect x="7" y="4" width="3" height="1" fill="#000000"/><rect x="0" y="5" width="1" height="1" fill="#000000"/><rect x="1" y="5" width="8" height="1" fill="#FFFFFF"/><rect x="9" y="5" width="1" height="1" fill="#000000"/><rect x="0" y="6" width="1" height="1" fill="#000000"/><rect x="1" y="6" width="8" height="1" fill="#FFFFFF"/><rect x="9" y="6" width="1" height="1" fill="#000000"/><rect x="0" y="7" width="1" height="1" fill="#000000"/><rect x="1" y="7" width="8" height="1" fill="#FFFFFF"/><rect x="9" y="7" width="1" height="1" fill="#000000"/><rect x="0" y="8" width="1" height="1" fill="#000000"/><rect x="1" y="8" width="8" height="1" fill="#FFFFFF"/><rect x="9" y="8" width="1" height="1" fill="#000000"/><rect x="0" y="9" width="3" height="1" fill="#000000"/><rect x="3" y="9" width="6" height="1" fill="#FFFFFF"/><rect x="9" y="9" width="1" height="1" fill="#000000"/><rect x="11" y="9" width="2" height="1" fill="#808080"/><rect x="3" y="10" width="4" height="1" fill="#000000"/><rect x="7" y="10" width="2" height="1" fill="#FFFFFF"/><rect x="9" y="10" width="1" height="1" fill="#000000"/><rect x="10" y="10" width="2" height="1" fill="#808080"/><rect x="7" y="11" width="3" height="1" fill="#000000"/><rect x="10" y="11" width="1" height="1" fill="#808080"/></svg>
<div class="a" style="left:922px;top:149px;width:75px;height:16px;background:#D4D0C8"></div>
<div class="t" style="left:924px;top:151.69px;font-size:11px;line-height:11px;color:#000;transform:scaleX(0.9601);transform-origin:0 0;">Form1 (Form1)</div>
<svg class="a" style="left:885px;top:166px;" width="15" height="12" viewBox="0 0 15 12" shape-rendering="crispEdges"><rect x="3" y="0" width="5" height="1" fill="#808080"/><rect x="2" y="1" width="1" height="1" fill="#808080"/><rect x="3" y="1" width="5" height="1" fill="#FFFFFF"/><rect x="8" y="1" width="1" height="1" fill="#808080"/><rect x="1" y="2" width="1" height="1" fill="#808080"/><rect x="2" y="2" width="1" height="1" fill="#FFFFFF"/><rect x="3" y="2" width="1" height="1" fill="#FFFF00"/><rect x="4" y="2" width="1" height="1" fill="#A0A0B8"/><rect x="5" y="2" width="1" height="1" fill="#FFFF00"/><rect x="6" y="2" width="1" height="1" fill="#A0A0B8"/><rect x="7" y="2" width="1" height="1" fill="#FFFF00"/><rect x="8" y="2" width="6" height="1" fill="#808080"/><rect x="1" y="3" width="1" height="1" fill="#808080"/><rect x="2" y="3" width="1" height="1" fill="#FFFFFF"/><rect x="3" y="3" width="1" height="1" fill="#A0A0B8"/><rect x="4" y="3" width="1" height="1" fill="#FFFF00"/><rect x="5" y="3" width="1" height="1" fill="#A0A0B8"/><rect x="6" y="3" width="1" height="1" fill="#FFFF00"/><rect x="7" y="3" width="1" height="1" fill="#A0A0B8"/><rect x="8" y="3" width="5" height="1" fill="#FFFFFF"/><rect x="13" y="3" width="1" height="1" fill="#808080"/><rect x="1" y="4" width="1" height="1" fill="#808080"/><rect x="2" y="4" width="1" height="1" fill="#FFFFFF"/><rect x="3" y="4" width="1" height="1" fill="#FFFF00"/><rect x="4" y="4" width="1" height="1" fill="#A0A0B8"/><rect x="5" y="4" width="1" height="1" fill="#FFFF00"/><rect x="6" y="4" width="1" height="1" fill="#A0A0B8"/><rect x="7" y="4" width="1" height="1" fill="#FFFF00"/><rect x="8" y="4" width="1" height="1" fill="#A0A0B8"/><rect x="9" y="4" width="1" height="1" fill="#FFFF00"/><rect x="10" y="4" width="1" height="1" fill="#A0A0B8"/><rect x="11" y="4" width="2" height="1" fill="#FFFF00"/><rect x="13" y="4" width="1" height="1" fill="#808080"/><rect x="0" y="5" width="12" height="1" fill="#808080"/><rect x="12" y="5" width="1" height="1" fill="#000000"/><rect x="13" y="5" width="1" height="1" fill="#FFFF00"/><rect x="14" y="5" width="1" height="1" fill="#808080"/><rect x="0" y="6" width="1" height="1" fill="#808080"/><rect x="1" y="6" width="11" height="1" fill="#FFFFFF"/><rect x="12" y="6" width="1" height="1" fill="#000000"/><rect x="13" y="6" width="1" height="1" fill="#A0A0B8"/><rect x="14" y="6" width="1" height="1" fill="#808080"/><rect x="0" y="7" width="1" height="1" fill="#808080"/><rect x="1" y="7" width="1" height="1" fill="#FFFFFF"/><rect x="2" y="7" width="1" height="1" fill="#FFFF00"/><rect x="3" y="7" width="1" height="1" fill="#A0A0B8"/><rect x="4" y="7" width="1" height="1" fill="#FFFF00"/><rect x="5" y="7" width="1" height="1" fill="#A0A0B8"/><rect x="6" y="7" width="1" height="1" fill="#FFFF00"/><rect x="7" y="7" width="1" height="1" fill="#A0A0B8"/><rect x="8" y="7" width="1" height="1" fill="#FFFF00"/><rect x="9" y="7" width="1" height="1" fill="#A0A0B8"/><rect x="10" y="7" width="1" height="1" fill="#FFFF00"/><rect x="11" y="7" width="1" height="1" fill="#A0A0B8"/><rect x="12" y="7" width="1" height="1" fill="#FFFF00"/><rect x="13" y="7" width="1" height="1" fill="#000000"/><rect x="14" y="7" width="1" height="1" fill="#808080"/><rect x="1" y="8" width="1" height="1" fill="#808080"/><rect x="2" y="8" width="1" height="1" fill="#A0A0B8"/><rect x="3" y="8" width="1" height="1" fill="#FFFF00"/><rect x="4" y="8" width="1" height="1" fill="#A0A0B8"/><rect x="5" y="8" width="1" height="1" fill="#FFFF00"/><rect x="6" y="8" width="1" height="1" fill="#A0A0B8"/><rect x="7" y="8" width="1" height="1" fill="#FFFF00"/><rect x="8" y="8" width="1" height="1" fill="#A0A0B8"/><rect x="9" y="8" width="1" height="1" fill="#FFFF00"/><rect x="10" y="8" width="1" height="1" fill="#A0A0B8"/><rect x="11" y="8" width="1" height="1" fill="#FFFF00"/><rect x="12" y="8" width="1" height="1" fill="#A0A0B8"/><rect x="13" y="8" width="1" height="1" fill="#000000"/><rect x="14" y="8" width="1" height="1" fill="#808080"/><rect x="1" y="9" width="1" height="1" fill="#808080"/><rect x="2" y="9" width="1" height="1" fill="#FFFF00"/><rect x="3" y="9" width="1" height="1" fill="#A0A0B8"/><rect x="4" y="9" width="1" height="1" fill="#FFFF00"/><rect x="5" y="9" width="1" height="1" fill="#A0A0B8"/><rect x="6" y="9" width="1" height="1" fill="#FFFF00"/><rect x="7" y="9" width="1" height="1" fill="#A0A0B8"/><rect x="8" y="9" width="1" height="1" fill="#FFFF00"/><rect x="9" y="9" width="1" height="1" fill="#A0A0B8"/><rect x="10" y="9" width="1" height="1" fill="#FFFF00"/><rect x="11" y="9" width="1" height="1" fill="#A0A0B8"/><rect x="12" y="9" width="1" height="1" fill="#FFFF00"/><rect x="13" y="9" width="1" height="1" fill="#000000"/><rect x="2" y="10" width="1" height="1" fill="#808080"/><rect x="3" y="10" width="1" height="1" fill="#FFFF00"/><rect x="4" y="10" width="1" height="1" fill="#A0A0B8"/><rect x="5" y="10" width="1" height="1" fill="#FFFF00"/><rect x="6" y="10" width="1" height="1" fill="#A0A0B8"/><rect x="7" y="10" width="1" height="1" fill="#FFFF00"/><rect x="8" y="10" width="1" height="1" fill="#A0A0B8"/><rect x="9" y="10" width="1" height="1" fill="#FFFF00"/><rect x="10" y="10" width="1" height="1" fill="#A0A0B8"/><rect x="11" y="10" width="1" height="1" fill="#FFFF00"/><rect x="12" y="10" width="1" height="1" fill="#A0A0B8"/><rect x="13" y="10" width="1" height="1" fill="#FFFF00"/><rect x="2" y="11" width="12" height="1" fill="#808080"/></svg>
<div class="t" style="left:905px;top:167.69px;font-size:11px;line-height:11px;color:#000;transform:scaleX(0.9517);transform-origin:0 0;">User Controls</div>
<svg class="a" style="left:905px;top:182px;" width="13" height="15" viewBox="0 0 13 15" shape-rendering="crispEdges"><rect x="0.5" y="2.5" width="11" height="11" fill="#fff" stroke="#000"/><rect x="1" y="3" width="10" height="2" fill="#0000C0"/><rect x="3" y="7" width="1" height="5" fill="#000"/><rect x="2" y="9" width="6" height="1" fill="#000"/><rect x="6" y="7" width="1" height="5" fill="#000"/><path d="M7 9l4-8" stroke="#D0C000" stroke-width="2" shape-rendering="auto"/><rect x="11" y="0" width="2" height="2" fill="#E00000"/></svg>
<div class="t" style="left:923px;top:183.69px;font-size:11px;line-height:11px;color:#000;transform:scaleX(0.9383);transform-origin:0 0;">DSkin (DSkin.ctl)</div>
<div class="a" style="left:844px;top:323px;width:180px;height:15px;background:#808080"></div>
<div class="t" style="left:846px;top:324.69px;font-size:11px;line-height:11px;color:#D4D0C8;transform:scaleX(0.9269);transform-origin:0 0;">Properties - Form1</div>
<div class="a" style="left:1010px;top:324px;width:13px;height:13px;background:#D4D0C8;border-style:solid;border-width:1px;border-color:#fff #404040 #404040 #fff;box-shadow:inset 1px 1px 0 #D4D0C8,inset -1px -1px 0 #808080"></div>
<svg class="a" style="left:1012px;top:326px;" width="8" height="7" viewBox="0 0 8 7" shape-rendering="crispEdges"><path d="M0 0h2l2 2.5L6 0h2L5 3.5 8 7H6L4 4.5 2 7H0l3-3.5z" fill="#000" shape-rendering="auto"/></svg>
<div class="a" style="left:844px;top:342px;width:177px;height:19px;background:#FFFFFF;border-style:solid;border-width:1px;border-color:#808080 #FFFFFF #FFFFFF #808080;box-shadow:inset 1px 1px 0 #404040,inset -1px -1px 0 #D4D0C8"></div>
<div class="a" style="left:1004px;top:344px;width:15px;height:15px;background:#D4D0C8;border-style:solid;border-width:1px;border-color:#D4D0C8 #404040 #404040 #D4D0C8;box-shadow:inset 1px 1px 0 #fff,inset -1px -1px 0 #808080"></div>
<svg class="a" style="left:1008px;top:350px;" width="7" height="4" viewBox="0 0 7 4" shape-rendering="crispEdges"><path d="M0 0h7l-3.5 4z" fill="#000" shape-rendering="auto"/></svg>
<div class="t" style="left:847px;top:346.69px;font-size:11px;line-height:11px;font-weight:bold;color:#000;transform:scaleX(1.0409);transform-origin:0 0;">Form1</div>
<div class="t" style="left:889px;top:346.69px;font-size:11px;line-height:11px;color:#000;transform:scaleX(0.9349);transform-origin:0 0;">Form</div>
<div class="a" style="left:844px;top:361px;width:178px;height:21px;background:#DCD2CE"></div>
<div class="a" style="left:846px;top:365px;width:62px;height:18px;background:linear-gradient(#7ADC74,#5CC456);border:1px solid #404040;border-bottom:none"></div>
<div class="a" style="left:908px;top:365px;width:70px;height:18px;background:#fff;border:1px solid #404040;border-bottom:1px solid #808080"></div>
<div class="t" style="left:852px;top:369.69px;font-size:11px;line-height:11px;color:#000;transform:scaleX(0.9538);transform-origin:0 0;">Alphabetic</div>
<div class="t" style="left:914px;top:369.69px;font-size:11px;line-height:11px;color:#000;transform:scaleX(0.9608);transform-origin:0 0;">Categorized</div>
<div class="a" style="left:844px;top:381px;width:180px;height:299px;border:1px solid #808080;background:#fff"></div>
<div class="a" style="left:848px;top:385px;width:172px;height:291px;border:1px solid #808080;background:#fff"></div>
<div class="a" style="left:850px;top:387px;width:168px;height:287px;border:1px solid #404040;background:#fff"></div>
<svg class="a" style="left:851px;top:388px" width="150" height="286" shape-rendering="crispEdges"><rect x="0" y="15" width="150" height="1" fill="#D4D0C8"/><rect x="0" y="31" width="150" height="1" fill="#D4D0C8"/><rect x="0" y="47" width="150" height="1" fill="#D4D0C8"/><rect x="0" y="63" width="150" height="1" fill="#D4D0C8"/><rect x="0" y="79" width="150" height="1" fill="#D4D0C8"/><rect x="0" y="95" width="150" height="1" fill="#D4D0C8"/><rect x="0" y="111" width="150" height="1" fill="#D4D0C8"/><rect x="0" y="127" width="150" height="1" fill="#D4D0C8"/><rect x="0" y="143" width="150" height="1" fill="#D4D0C8"/><rect x="0" y="159" width="150" height="1" fill="#D4D0C8"/><rect x="0" y="175" width="150" height="1" fill="#D4D0C8"/><rect x="0" y="191" width="150" height="1" fill="#D4D0C8"/><rect x="0" y="207" width="150" height="1" fill="#D4D0C8"/><rect x="0" y="223" width="150" height="1" fill="#D4D0C8"/><rect x="0" y="239" width="150" height="1" fill="#D4D0C8"/><rect x="0" y="255" width="150" height="1" fill="#D4D0C8"/><rect x="0" y="271" width="150" height="1" fill="#D4D0C8"/><rect x="0" y="287" width="150" height="1" fill="#D4D0C8"/><rect x="78" y="0" width="1" height="286" fill="#D4D0C8"/></svg>
<div class="a" style="left:851px;top:388px;width:78px;height:15px;background:#0A246A"></div>
<div class="t" style="left:851px;top:390.69px;font-size:11px;line-height:11px;color:#fff;transform:scaleX(0.9544);transform-origin:0 0;">(Name)</div>
<div class="t" style="left:931px;top:390.69px;font-size:11px;line-height:11px;color:#000;transform:scaleX(0.9125);transform-origin:0 0;">Form1</div>
<div class="t" style="left:851px;top:406.69px;font-size:11px;line-height:11px;color:#000;transform:scaleX(0.9776);transform-origin:0 0;">Appearance</div>
<div class="t" style="left:931px;top:406.69px;font-size:11px;line-height:11px;color:#000;transform:scaleX(0.9677);transform-origin:0 0;">1 - 3D</div>
<div class="t" style="left:851px;top:422.69px;font-size:11px;line-height:11px;color:#000;transform:scaleX(0.9910);transform-origin:0 0;">AutoRedraw</div>
<div class="t" style="left:931px;top:422.69px;font-size:11px;line-height:11px;color:#000;transform:scaleX(0.8920);transform-origin:0 0;">False</div>
<div class="t" style="left:851px;top:438.69px;font-size:11px;line-height:11px;color:#000;transform:scaleX(0.9261);transform-origin:0 0;">BackColor</div>
<div class="a" style="left:931px;top:439px;width:11px;height:11px;background:#D4D0C8;border:1px solid #000"></div>
<div class="t" style="left:947px;top:438.69px;font-size:11px;line-height:11px;color:#000;transform:scaleX(0.9422);transform-origin:0 0;">&H8000000F&</div>
<div class="t" style="left:851px;top:454.69px;font-size:11px;line-height:11px;color:#000;transform:scaleX(0.9742);transform-origin:0 0;">BorderStyle</div>
<div class="t" style="left:931px;top:454.69px;font-size:11px;line-height:11px;color:#000;transform:scaleX(0.9234);transform-origin:0 0;">2 - Sizable</div>
<div class="t" style="left:851px;top:470.69px;font-size:11px;line-height:11px;color:#000;transform:scaleX(0.9757);transform-origin:0 0;">Caption</div>
<div class="t" style="left:931px;top:470.69px;font-size:11px;line-height:11px;color:#000;transform:scaleX(0.9125);transform-origin:0 0;">Form1</div>
<div class="t" style="left:851px;top:486.69px;font-size:11px;line-height:11px;color:#000;transform:scaleX(0.9512);transform-origin:0 0;">ClipControls</div>
<div class="t" style="left:931px;top:486.69px;font-size:11px;line-height:11px;color:#000;transform:scaleX(0.9451);transform-origin:0 0;">True</div>
<div class="t" style="left:851px;top:502.69px;font-size:11px;line-height:11px;color:#000;transform:scaleX(0.9739);transform-origin:0 0;">ControlBox</div>
<div class="t" style="left:931px;top:502.69px;font-size:11px;line-height:11px;color:#000;transform:scaleX(0.9451);transform-origin:0 0;">True</div>
<div class="t" style="left:851px;top:518.69px;font-size:11px;line-height:11px;color:#000;transform:scaleX(0.9589);transform-origin:0 0;">DrawMode</div>
<div class="t" style="left:931px;top:518.69px;font-size:11px;line-height:11px;color:#000;transform:scaleX(0.9669);transform-origin:0 0;">13 - Copy Pen</div>
<div class="t" style="left:851px;top:534.69px;font-size:11px;line-height:11px;color:#000;transform:scaleX(0.9776);transform-origin:0 0;">DrawStyle</div>
<div class="t" style="left:931px;top:534.69px;font-size:11px;line-height:11px;color:#000;transform:scaleX(0.9415);transform-origin:0 0;">0 - Solid</div>
<div class="t" style="left:851px;top:550.69px;font-size:11px;line-height:11px;color:#000;transform:scaleX(0.9852);transform-origin:0 0;">DrawWidth</div>
<div class="t" style="left:931px;top:550.69px;font-size:11px;line-height:11px;color:#000;transform:scaleX(0.8163);transform-origin:0 0;">1</div>
<div class="t" style="left:851px;top:566.69px;font-size:11px;line-height:11px;color:#000;transform:scaleX(0.9412);transform-origin:0 0;">Enabled</div>
<div class="t" style="left:931px;top:566.69px;font-size:11px;line-height:11px;color:#000;transform:scaleX(0.9451);transform-origin:0 0;">True</div>
<div class="t" style="left:851px;top:582.69px;font-size:11px;line-height:11px;color:#000;transform:scaleX(0.9171);transform-origin:0 0;">FillColor</div>
<div class="a" style="left:931px;top:583px;width:11px;height:11px;background:#000;border:1px solid #000"></div>
<div class="t" style="left:947px;top:582.69px;font-size:11px;line-height:11px;color:#000;transform:scaleX(0.9502);transform-origin:0 0;">&H00000000&</div>
<div class="t" style="left:851px;top:598.69px;font-size:11px;line-height:11px;color:#000;transform:scaleX(0.9347);transform-origin:0 0;">FillStyle</div>
<div class="t" style="left:931px;top:598.69px;font-size:11px;line-height:11px;color:#000;transform:scaleX(1.0054);transform-origin:0 0;">1 - Transparent</div>
<div class="t" style="left:851px;top:614.69px;font-size:11px;line-height:11px;color:#000;transform:scaleX(0.9993);transform-origin:0 0;">Font</div>
<div class="t" style="left:931px;top:614.69px;font-size:11px;line-height:11px;color:#000;transform:scaleX(0.9102);transform-origin:0 0;">MS Sans Serif</div>
<div class="t" style="left:851px;top:630.69px;font-size:11px;line-height:11px;color:#000;transform:scaleX(0.9890);transform-origin:0 0;">FontTransparen</div>
<div class="t" style="left:931px;top:630.69px;font-size:11px;line-height:11px;color:#000;transform:scaleX(0.9451);transform-origin:0 0;">True</div>
<div class="t" style="left:851px;top:646.69px;font-size:11px;line-height:11px;color:#000;transform:scaleX(0.9610);transform-origin:0 0;">ForeColor</div>
<div class="a" style="left:931px;top:647px;width:11px;height:11px;background:#000;border:1px solid #000"></div>
<div class="t" style="left:947px;top:646.69px;font-size:11px;line-height:11px;color:#000;transform:scaleX(0.9502);transform-origin:0 0;">&H80000012&</div>
<div class="t" style="left:851px;top:662.69px;font-size:11px;line-height:11px;color:#000;transform:scaleX(0.9026);transform-origin:0 0;">HasDC</div>
<div class="t" style="left:931px;top:662.69px;font-size:11px;line-height:11px;color:#000;transform:scaleX(0.9451);transform-origin:0 0;">True</div>
<svg class="a" style="left:1001px;top:388px;" width="16" height="286" viewBox="0 0 16 286" shape-rendering="crispEdges"><rect width="16" height="286" fill="url(#dither)"/></svg>
<div class="a" style="left:1001px;top:388px;width:16px;height:15px;background:#D4D0C8;border-style:solid;border-width:1px;border-color:#D4D0C8 #404040 #404040 #D4D0C8;box-shadow:inset 1px 1px 0 #fff,inset -1px -1px 0 #808080"></div>
<svg class="a" style="left:1005px;top:393px;" width="7" height="4" viewBox="0 0 7 4" shape-rendering="crispEdges"><path d="M3.5 0L7 4H0z" fill="#000" shape-rendering="auto"/></svg>
<div class="a" style="left:1001px;top:404px;width:16px;height:84px;background:#D4D0C8;border-style:solid;border-width:1px;border-color:#D4D0C8 #404040 #404040 #D4D0C8;box-shadow:inset 1px 1px 0 #fff,inset -1px -1px 0 #808080"></div>
<div class="a" style="left:1001px;top:658px;width:16px;height:15px;background:#D4D0C8;border-style:solid;border-width:1px;border-color:#D4D0C8 #404040 #404040 #D4D0C8;box-shadow:inset 1px 1px 0 #fff,inset -1px -1px 0 #808080"></div>
<svg class="a" style="left:1005px;top:663px;" width="7" height="4" viewBox="0 0 7 4" shape-rendering="crispEdges"><path d="M0 0h7l-3.5 4z" fill="#000" shape-rendering="auto"/></svg>
<div class="a" style="left:1017px;top:385px;width:7px;height:295px;background:#fff;border-style:solid;border-width:0 1px 0 1px;border-color:#808080 #808080 #808080 #404040;box-shadow:inset -5px 0 0 #fff, inset -6px 0 0 #808080"></div>
<div class="a" style="left:844px;top:683px;width:178px;height:47px;border-style:solid;border-width:1px;border-color:#808080 #fff #fff #808080;background:#D4D0C8"></div>
<div class="t" style="left:846px;top:686.69px;font-size:11px;line-height:11px;font-weight:bold;color:#000;transform:scaleX(1.0993);transform-origin:0 0;">(Name)</div>
<div class="t" style="left:846px;top:700.69px;font-size:11px;line-height:11px;color:#000;transform:scaleX(0.9872);transform-origin:0 0;">Returns the name used in code to</div>
<div class="t" style="left:846px;top:713.69px;font-size:11px;line-height:11px;color:#000;transform:scaleX(1.0161);transform-origin:0 0;">identify an object.</div>
<div class="a" style="left:0px;top:739px;width:1024px;height:1px;background:#404040"></div>
<svg class="a" style="left:0px;top:731px;" width="10" height="8" viewBox="0 0 10 8" shape-rendering="crispEdges"><path d="M0 0h2l7 8H0z" fill="#5CC456" shape-rendering="auto"/><path d="M2 0l7 8" stroke="#404040" stroke-width="1" shape-rendering="auto"/></svg>
<svg class="a" style="left:1014px;top:731px;" width="10" height="8" viewBox="0 0 10 8" shape-rendering="crispEdges"><path d="M10 0v8H2z" fill="#5CC456" shape-rendering="auto"/></svg>
<div class="a" style="left:0px;top:740px;width:1024px;height:28px;background:#D4D0C8;border-top:1px solid #D4D0C8;box-shadow:inset 0 1px 0 #fff"></div>
<div class="a" style="left:2px;top:744px;width:54px;height:22px;background:#D4D0C8;border-style:solid;border-width:1px;border-color:#fff #404040 #404040 #fff;box-shadow:inset 1px 1px 0 #D4D0C8,inset -1px -1px 0 #808080"></div>
<svg class="a" style="left:4px;top:748px;" width="18" height="14" viewBox="0 0 18 14" shape-rendering="crispEdges"><rect x="11" y="0" width="4" height="1" fill="#000000"/><rect x="9" y="1" width="8" height="1" fill="#000000"/><rect x="2" y="2" width="1" height="1" fill="#000000"/><rect x="8" y="2" width="2" height="1" fill="#000000"/><rect x="10" y="2" width="2" height="1" fill="#FF0000"/><rect x="12" y="2" width="2" height="1" fill="#000000"/><rect x="14" y="2" width="2" height="1" fill="#00FF00"/><rect x="16" y="2" width="2" height="1" fill="#000000"/><rect x="2" y="3" width="1" height="1" fill="#000000"/><rect x="4" y="3" width="5" height="1" fill="#000000"/><rect x="9" y="3" width="3" height="1" fill="#FF0000"/><rect x="12" y="3" width="2" height="1" fill="#000000"/><rect x="14" y="3" width="2" height="1" fill="#00FF00"/><rect x="16" y="3" width="2" height="1" fill="#000000"/><rect x="4" y="4" width="1" height="1" fill="#000000"/><rect x="5" y="4" width="1" height="1" fill="#F0F0E0"/><rect x="6" y="4" width="3" height="1" fill="#000000"/><rect x="9" y="4" width="2" height="1" fill="#FF0000"/><rect x="11" y="4" width="3" height="1" fill="#000000"/><rect x="14" y="4" width="3" height="1" fill="#00FF00"/><rect x="17" y="4" width="1" height="1" fill="#000000"/><rect x="2" y="5" width="1" height="1" fill="#FF0000"/><rect x="4" y="5" width="3" height="1" fill="#F0F0E0"/><rect x="7" y="5" width="2" height="1" fill="#000000"/><rect x="9" y="5" width="2" height="1" fill="#FF0000"/><rect x="11" y="5" width="3" height="1" fill="#000000"/><rect x="14" y="5" width="3" height="1" fill="#00FF00"/><rect x="17" y="5" width="1" height="1" fill="#000000"/><rect x="2" y="6" width="1" height="1" fill="#FF0000"/><rect x="4" y="6" width="4" height="1" fill="#FF0000"/><rect x="8" y="6" width="10" height="1" fill="#000000"/><rect x="4" y="7" width="4" height="1" fill="#FF0000"/><rect x="8" y="7" width="10" height="1" fill="#000000"/><rect x="2" y="8" width="1" height="1" fill="#0000FF"/><rect x="4" y="8" width="4" height="1" fill="#F0F0E0"/><rect x="8" y="8" width="1" height="1" fill="#000000"/><rect x="9" y="8" width="2" height="1" fill="#0000FF"/><rect x="11" y="8" width="3" height="1" fill="#000000"/><rect x="14" y="8" width="2" height="1" fill="#FFFF00"/><rect x="16" y="8" width="2" height="1" fill="#000000"/><rect x="2" y="9" width="1" height="1" fill="#0000FF"/><rect x="4" y="9" width="4" height="1" fill="#0000FF"/><rect x="8" y="9" width="1" height="1" fill="#000000"/><rect x="9" y="9" width="3" height="1" fill="#0000FF"/><rect x="12" y="9" width="2" height="1" fill="#000000"/><rect x="14" y="9" width="3" height="1" fill="#FFFF00"/><rect x="17" y="9" width="1" height="1" fill="#000000"/><rect x="4" y="10" width="4" height="1" fill="#0000FF"/><rect x="8" y="10" width="1" height="1" fill="#000000"/><rect x="9" y="10" width="2" height="1" fill="#0000FF"/><rect x="11" y="10" width="4" height="1" fill="#000000"/><rect x="15" y="10" width="2" height="1" fill="#FFFF00"/><rect x="17" y="10" width="1" height="1" fill="#000000"/><rect x="2" y="11" width="1" height="1" fill="#000000"/><rect x="4" y="11" width="4" height="1" fill="#F0F0E0"/><rect x="8" y="11" width="10" height="1" fill="#000000"/><rect x="2" y="12" width="1" height="1" fill="#000000"/><rect x="4" y="12" width="1" height="1" fill="#000000"/><rect x="5" y="12" width="2" height="1" fill="#F0F0E0"/><rect x="7" y="12" width="5" height="1" fill="#000000"/><rect x="15" y="12" width="3" height="1" fill="#000000"/><rect x="4" y="13" width="5" height="1" fill="#000000"/><rect x="17" y="13" width="1" height="1" fill="#000000"/></svg>
<div class="t" style="left:25px;top:748.84px;font-size:12px;line-height:12px;font-weight:bold;color:#000;transform:scaleX(0.9509);transform-origin:0 0;">Start</div>
<div class="a" style="left:60px;top:745px;width:2px;height:21px;border-left:1px solid #808080;border-right:1px solid #fff"></div>
<div class="a" style="left:64px;top:747px;width:3px;height:18px;border-left:1px solid #fff;border-right:1px solid #808080;border-top:1px solid #fff;border-bottom:1px solid #808080"></div>
<svg class="a" style="left:73px;top:747px;" width="17" height="14" viewBox="0 0 17 14" shape-rendering="crispEdges"><rect x="11" y="0" width="4" height="1" fill="#1A5FD8"/><rect x="5" y="1" width="1" height="1" fill="#70C0F8"/><rect x="6" y="1" width="5" height="1" fill="#1A5FD8"/><rect x="11" y="1" width="3" height="1" fill="#70C0F8"/><rect x="14" y="1" width="2" height="1" fill="#1A5FD8"/><rect x="3" y="2" width="1" height="1" fill="#70C0F8"/><rect x="4" y="2" width="8" height="1" fill="#1A5FD8"/><rect x="14" y="2" width="2" height="1" fill="#1A5FD8"/><rect x="2" y="3" width="3" height="1" fill="#1A5FD8"/><rect x="5" y="3" width="2" height="1" fill="#C0E0FF"/><rect x="9" y="3" width="1" height="1" fill="#70C0F8"/><rect x="10" y="3" width="3" height="1" fill="#1A5FD8"/><rect x="14" y="3" width="2" height="1" fill="#1A5FD8"/><rect x="1" y="4" width="3" height="1" fill="#1A5FD8"/><rect x="4" y="4" width="1" height="1" fill="#C0E0FF"/><rect x="10" y="4" width="5" height="1" fill="#1A5FD8"/><rect x="1" y="5" width="14" height="1" fill="#1A5FD8"/><rect x="0" y="6" width="15" height="1" fill="#1A5FD8"/><rect x="0" y="7" width="4" height="1" fill="#1A5FD8"/><rect x="0" y="8" width="4" height="1" fill="#1A5FD8"/><rect x="11" y="8" width="4" height="1" fill="#1A5FD8"/><rect x="1" y="9" width="4" height="1" fill="#1A5FD8"/><rect x="10" y="9" width="4" height="1" fill="#1A5FD8"/><rect x="1" y="10" width="12" height="1" fill="#1A5FD8"/><rect x="0" y="11" width="2" height="1" fill="#1A5FD8"/><rect x="4" y="11" width="8" height="1" fill="#1A5FD8"/><rect x="0" y="12" width="4" height="1" fill="#1A5FD8"/><rect x="1" y="13" width="2" height="1" fill="#1A5FD8"/></svg>
<svg class="a" style="left:96px;top:747px;" width="17" height="16" viewBox="0 0 17 16" shape-rendering="crispEdges"><rect x="3" y="4" width="12" height="9" fill="#FFF8C0" stroke="#000" stroke-width="1"/><rect x="11" y="6" width="2" height="2" fill="#E00000"/><path d="M2 6a5 5 0 0 1 6-4" stroke="#2060E0" stroke-width="2" fill="none" shape-rendering="auto"/><path d="M14 12a5 5 0 0 1-6 4" stroke="#2060E0" stroke-width="2" fill="none" shape-rendering="auto"/></svg>
<svg class="a" style="left:119px;top:747px;" width="17" height="16" viewBox="0 0 17 16" shape-rendering="crispEdges"><rect x="1" y="3" width="14" height="12" fill="#3090D0"/><rect x="3" y="5" width="10" height="9" fill="#F0F0E0"/><path d="M6 12l7-9" stroke="#C04000" stroke-width="2" shape-rendering="auto"/><rect x="12" y="0" width="3" height="3" fill="#E0A000"/></svg>
<svg class="a" style="left:142px;top:747px;" width="17" height="16" viewBox="0 0 17 16" shape-rendering="crispEdges"><rect x="0" y="0" width="17" height="16" fill="#FFA000"/><rect x="2" y="2" width="13" height="12" fill="#F4E8C0"/><path d="M4 2l11 6-11 6z" fill="#3C3C9C" shape-rendering="auto"/></svg>
<div class="t" style="left:167px;top:746.00px;font-size:13px;line-height:13px;font-weight:bold;color:#000;transform:scaleX(1.2441);transform-origin:0 0;">»</div>
<div class="a" style="left:178px;top:745px;width:2px;height:21px;border-left:1px solid #808080;border-right:1px solid #fff"></div>
<div class="a" style="left:182px;top:747px;width:3px;height:18px;border-left:1px solid #fff;border-right:1px solid #808080;border-top:1px solid #fff;border-bottom:1px solid #808080"></div>
<div class="a" style="left:188px;top:744px;width:128px;height:22px;background:#D4D0C8;border-style:solid;border-width:1px;border-color:#fff #404040 #404040 #fff;box-shadow:inset 1px 1px 0 #D4D0C8,inset -1px -1px 0 #808080"></div>
<svg class="a" style="left:193px;top:747px;" width="16" height="16" viewBox="0 0 16 16" shape-rendering="crispEdges"><path d="M3.5 1.5h8l3 3v10h-11z" fill="#fff" stroke="#000" shape-rendering="auto"/><g shape-rendering="auto"><ellipse cx="8" cy="9" rx="6.5" ry="3" fill="none" stroke="#2050C0" stroke-width="1.3" transform="rotate(-30 8 9)"/><circle cx="7" cy="9" r="3.5" fill="#1E7FE0"/><rect x="5" y="8" width="4" height="1" fill="#fff"/></g></svg>
<div class="t" style="left:211px;top:749.69px;font-size:11px;line-height:11px;color:#000;transform:scaleX(0.9548);transform-origin:0 0;">Enumerate All Wind...</div>
<div class="a" style="left:319px;top:744px;width:127px;height:22px;border-style:solid;border-width:1px;border-color:#fff #fff #fff #404040;border-top-color:#404040;box-shadow:inset 1px 1px 0 #808080"></div>
<svg class="a" style="left:320px;top:745px;" width="125" height="21" viewBox="0 0 125 21" shape-rendering="crispEdges"><rect width="125" height="21" fill="url(#dither)"/></svg>
<svg class="a" style="left:324px;top:748px;" width="16" height="14" viewBox="0 0 16 14" shape-rendering="crispEdges"><rect x="4" y="0" width="2" height="1" fill="#000000"/><rect x="3" y="1" width="1" height="1" fill="#000000"/><rect x="4" y="1" width="2" height="1" fill="#00A000"/><rect x="6" y="1" width="1" height="1" fill="#000000"/><rect x="4" y="2" width="1" height="1" fill="#000000"/><rect x="5" y="2" width="1" height="1" fill="#00A000"/><rect x="6" y="2" width="1" height="1" fill="#000000"/><rect x="2" y="3" width="1" height="1" fill="#000000"/><rect x="5" y="3" width="1" height="1" fill="#000000"/><rect x="1" y="4" width="1" height="1" fill="#000000"/><rect x="2" y="4" width="1" height="1" fill="#E0E000"/><rect x="3" y="4" width="1" height="1" fill="#000000"/><rect x="5" y="4" width="6" height="1" fill="#000000"/><rect x="1" y="5" width="1" height="1" fill="#000000"/><rect x="2" y="5" width="2" height="1" fill="#E0E000"/><rect x="4" y="5" width="1" height="1" fill="#000000"/><rect x="5" y="5" width="6" height="1" fill="#00FFFF"/><rect x="11" y="5" width="1" height="1" fill="#000000"/><rect x="2" y="6" width="2" height="1" fill="#000000"/><rect x="4" y="6" width="8" height="1" fill="#00FFFF"/><rect x="12" y="6" width="1" height="1" fill="#000000"/><rect x="2" y="7" width="1" height="1" fill="#000000"/><rect x="3" y="7" width="1" height="1" fill="#FFFFFF"/><rect x="4" y="7" width="10" height="1" fill="#000000"/><rect x="2" y="8" width="1" height="1" fill="#000000"/><rect x="3" y="8" width="1" height="1" fill="#FFFFFF"/><rect x="4" y="8" width="1" height="1" fill="#808080"/><rect x="5" y="8" width="1" height="1" fill="#FFFFFF"/><rect x="6" y="8" width="2" height="1" fill="#808080"/><rect x="8" y="8" width="1" height="1" fill="#000000"/><rect x="9" y="8" width="4" height="1" fill="#FFFFFF"/><rect x="13" y="8" width="1" height="1" fill="#000000"/><rect x="2" y="9" width="1" height="1" fill="#000000"/><rect x="3" y="9" width="1" height="1" fill="#808080"/><rect x="4" y="9" width="2" height="1" fill="#FFFFFF"/><rect x="6" y="9" width="1" height="1" fill="#000000"/><rect x="7" y="9" width="1" height="1" fill="#FFFFFF"/><rect x="8" y="9" width="2" height="1" fill="#808080"/><rect x="10" y="9" width="3" height="1" fill="#FFFFFF"/><rect x="13" y="9" width="1" height="1" fill="#000000"/><rect x="2" y="10" width="1" height="1" fill="#000000"/><rect x="3" y="10" width="2" height="1" fill="#FFFFFF"/><rect x="5" y="10" width="1" height="1" fill="#000000"/><rect x="6" y="10" width="1" height="1" fill="#FF0000"/><rect x="7" y="10" width="1" height="1" fill="#000000"/><rect x="8" y="10" width="1" height="1" fill="#808080"/><rect x="9" y="10" width="1" height="1" fill="#FFFFFF"/><rect x="10" y="10" width="1" height="1" fill="#000000"/><rect x="11" y="10" width="2" height="1" fill="#FFFFFF"/><rect x="13" y="10" width="1" height="1" fill="#000000"/><rect x="2" y="11" width="1" height="1" fill="#000000"/><rect x="3" y="11" width="1" height="1" fill="#FFFFFF"/><rect x="4" y="11" width="1" height="1" fill="#000000"/><rect x="5" y="11" width="1" height="1" fill="#FF0000"/><rect x="6" y="11" width="1" height="1" fill="#000000"/><rect x="7" y="11" width="3" height="1" fill="#FFFFFF"/><rect x="10" y="11" width="1" height="1" fill="#000000"/><rect x="11" y="11" width="2" height="1" fill="#FFFFFF"/><rect x="13" y="11" width="1" height="1" fill="#000000"/><rect x="14" y="11" width="1" height="1" fill="#808080"/><rect x="2" y="12" width="1" height="1" fill="#000000"/><rect x="3" y="12" width="2" height="1" fill="#FFFFFF"/><rect x="5" y="12" width="1" height="1" fill="#000000"/><rect x="6" y="12" width="7" height="1" fill="#FFFFFF"/><rect x="13" y="12" width="1" height="1" fill="#000000"/><rect x="14" y="12" width="1" height="1" fill="#808080"/><rect x="2" y="13" width="12" height="1" fill="#000000"/><rect x="14" y="13" width="2" height="1" fill="#808080"/></svg>
<div class="t" style="left:341px;top:750.69px;font-size:11px;line-height:11px;font-weight:bold;color:#000;transform:scaleX(1.0905);transform-origin:0 0;">Project1 - Micro...</div>
<div class="a" style="left:449px;top:744px;width:128px;height:22px;background:#D4D0C8;border-style:solid;border-width:1px;border-color:#fff #404040 #404040 #fff;box-shadow:inset 1px 1px 0 #D4D0C8,inset -1px -1px 0 #808080"></div>
<svg class="a" style="left:454px;top:747px;" width="16" height="14" viewBox="0 0 16 14" shape-rendering="crispEdges"><rect x="4" y="0" width="2" height="1" fill="#000000"/><rect x="3" y="1" width="1" height="1" fill="#000000"/><rect x="4" y="1" width="2" height="1" fill="#00A000"/><rect x="6" y="1" width="1" height="1" fill="#000000"/><rect x="4" y="2" width="1" height="1" fill="#000000"/><rect x="5" y="2" width="1" height="1" fill="#00A000"/><rect x="6" y="2" width="1" height="1" fill="#000000"/><rect x="2" y="3" width="1" height="1" fill="#000000"/><rect x="5" y="3" width="1" height="1" fill="#000000"/><rect x="1" y="4" width="1" height="1" fill="#000000"/><rect x="2" y="4" width="1" height="1" fill="#E0E000"/><rect x="3" y="4" width="1" height="1" fill="#000000"/><rect x="5" y="4" width="6" height="1" fill="#000000"/><rect x="1" y="5" width="1" height="1" fill="#000000"/><rect x="2" y="5" width="2" height="1" fill="#E0E000"/><rect x="4" y="5" width="1" height="1" fill="#000000"/><rect x="5" y="5" width="6" height="1" fill="#00FFFF"/><rect x="11" y="5" width="1" height="1" fill="#000000"/><rect x="2" y="6" width="2" height="1" fill="#000000"/><rect x="4" y="6" width="8" height="1" fill="#00FFFF"/><rect x="12" y="6" width="1" height="1" fill="#000000"/><rect x="2" y="7" width="1" height="1" fill="#000000"/><rect x="3" y="7" width="1" height="1" fill="#FFFFFF"/><rect x="4" y="7" width="10" height="1" fill="#000000"/><rect x="2" y="8" width="1" height="1" fill="#000000"/><rect x="3" y="8" width="1" height="1" fill="#FFFFFF"/><rect x="4" y="8" width="1" height="1" fill="#808080"/><rect x="5" y="8" width="1" height="1" fill="#FFFFFF"/><rect x="6" y="8" width="2" height="1" fill="#808080"/><rect x="8" y="8" width="1" height="1" fill="#000000"/><rect x="9" y="8" width="4" height="1" fill="#FFFFFF"/><rect x="13" y="8" width="1" height="1" fill="#000000"/><rect x="2" y="9" width="1" height="1" fill="#000000"/><rect x="3" y="9" width="1" height="1" fill="#808080"/><rect x="4" y="9" width="2" height="1" fill="#FFFFFF"/><rect x="6" y="9" width="1" height="1" fill="#000000"/><rect x="7" y="9" width="1" height="1" fill="#FFFFFF"/><rect x="8" y="9" width="2" height="1" fill="#808080"/><rect x="10" y="9" width="3" height="1" fill="#FFFFFF"/><rect x="13" y="9" width="1" height="1" fill="#000000"/><rect x="2" y="10" width="1" height="1" fill="#000000"/><rect x="3" y="10" width="2" height="1" fill="#FFFFFF"/><rect x="5" y="10" width="1" height="1" fill="#000000"/><rect x="6" y="10" width="1" height="1" fill="#FF0000"/><rect x="7" y="10" width="1" height="1" fill="#000000"/><rect x="8" y="10" width="1" height="1" fill="#808080"/><rect x="9" y="10" width="1" height="1" fill="#FFFFFF"/><rect x="10" y="10" width="1" height="1" fill="#000000"/><rect x="11" y="10" width="2" height="1" fill="#FFFFFF"/><rect x="13" y="10" width="1" height="1" fill="#000000"/><rect x="2" y="11" width="1" height="1" fill="#000000"/><rect x="3" y="11" width="1" height="1" fill="#FFFFFF"/><rect x="4" y="11" width="1" height="1" fill="#000000"/><rect x="5" y="11" width="1" height="1" fill="#FF0000"/><rect x="6" y="11" width="1" height="1" fill="#000000"/><rect x="7" y="11" width="3" height="1" fill="#FFFFFF"/><rect x="10" y="11" width="1" height="1" fill="#000000"/><rect x="11" y="11" width="2" height="1" fill="#FFFFFF"/><rect x="13" y="11" width="1" height="1" fill="#000000"/><rect x="14" y="11" width="1" height="1" fill="#808080"/><rect x="2" y="12" width="1" height="1" fill="#000000"/><rect x="3" y="12" width="2" height="1" fill="#FFFFFF"/><rect x="5" y="12" width="1" height="1" fill="#000000"/><rect x="6" y="12" width="7" height="1" fill="#FFFFFF"/><rect x="13" y="12" width="1" height="1" fill="#000000"/><rect x="14" y="12" width="1" height="1" fill="#808080"/><rect x="2" y="13" width="12" height="1" fill="#000000"/><rect x="14" y="13" width="2" height="1" fill="#808080"/></svg>
<div class="t" style="left:471px;top:749.69px;font-size:11px;line-height:11px;color:#000;transform:scaleX(0.9486);transform-origin:0 0;">APISpy - Microsoft ...</div>
<div class="a" style="left:579px;top:744px;width:128px;height:22px;background:#D4D0C8;border-style:solid;border-width:1px;border-color:#fff #404040 #404040 #fff;box-shadow:inset 1px 1px 0 #D4D0C8,inset -1px -1px 0 #808080"></div>
<svg class="a" style="left:584px;top:747px;" width="16" height="16" viewBox="0 0 16 16" shape-rendering="crispEdges"><g shape-rendering="auto"><circle cx="9" cy="3" r="2.5" fill="#3090E0"/><path d="M5 15l2-9 4 0 3 9z" fill="#3090E0"/><circle cx="5" cy="6" r="2" fill="#60C040"/><path d="M1 15l2-7 4 0 1 7z" fill="#60C040"/><path d="M9 15l2-6 4 0 1 6z" fill="#F08020"/></g></svg>
<div class="t" style="left:601px;top:749.69px;font-size:11px;line-height:11px;color:#000;transform:scaleX(0.9399);transform-origin:0 0;">MSN Messenger</div>
<div class="a" style="left:846px;top:744px;width:177px;height:22px;border-style:solid;border-width:1px;border-color:#808080 #fff #fff #808080"></div>
<div class="t" style="left:971px;top:750.69px;font-size:11px;line-height:11px;color:#000;transform:scaleX(0.9663);transform-origin:0 0;">7:57 AM</div>
<svg class="a" style="left:850px;top:747px;" width="16" height="15" viewBox="0 0 16 15" shape-rendering="crispEdges"><rect x="1" y="0" width="1" height="1" fill="#000000"/><rect x="0" y="1" width="1" height="1" fill="#000000"/><rect x="1" y="1" width="1" height="1" fill="#FFFFFF"/><rect x="2" y="1" width="1" height="1" fill="#000000"/><rect x="0" y="2" width="1" height="1" fill="#000000"/><rect x="1" y="2" width="1" height="1" fill="#FFFFFF"/><rect x="2" y="2" width="1" height="1" fill="#808080"/><rect x="3" y="2" width="1" height="1" fill="#000000"/><rect x="0" y="3" width="1" height="1" fill="#000000"/><rect x="1" y="3" width="1" height="1" fill="#FFFFFF"/><rect x="2" y="3" width="1" height="1" fill="#808080"/><rect x="3" y="3" width="1" height="1" fill="#000000"/><rect x="0" y="4" width="1" height="1" fill="#000000"/><rect x="1" y="4" width="1" height="1" fill="#FFFFFF"/><rect x="2" y="4" width="1" height="1" fill="#808080"/><rect x="3" y="4" width="1" height="1" fill="#000000"/><rect x="0" y="5" width="1" height="1" fill="#000000"/><rect x="1" y="5" width="1" height="1" fill="#FFFFFF"/><rect x="2" y="5" width="1" height="1" fill="#808080"/><rect x="3" y="5" width="1" height="1" fill="#000000"/><rect x="0" y="6" width="1" height="1" fill="#000000"/><rect x="1" y="6" width="1" height="1" fill="#FFFFFF"/><rect x="2" y="6" width="1" height="1" fill="#808080"/><rect x="3" y="6" width="1" height="1" fill="#000000"/><rect x="0" y="7" width="1" height="1" fill="#000000"/><rect x="1" y="7" width="2" height="1" fill="#FFFFFF"/><rect x="3" y="7" width="1" height="1" fill="#808080"/><rect x="4" y="7" width="6" height="1" fill="#000000"/><rect x="0" y="8" width="1" height="1" fill="#000000"/><rect x="1" y="8" width="2" height="1" fill="#FFFFFF"/><rect x="3" y="8" width="2" height="1" fill="#808080"/><rect x="5" y="8" width="5" height="1" fill="#FFFFFF"/><rect x="10" y="8" width="2" height="1" fill="#000000"/><rect x="1" y="9" width="1" height="1" fill="#000000"/><rect x="2" y="9" width="2" height="1" fill="#FFFFFF"/><rect x="4" y="9" width="2" height="1" fill="#C0C0C0"/><rect x="6" y="9" width="1" height="1" fill="#808080"/><rect x="7" y="9" width="1" height="1" fill="#C0C0C0"/><rect x="8" y="9" width="1" height="1" fill="#FFFFFF"/><rect x="9" y="9" width="1" height="1" fill="#C0C0C0"/><rect x="10" y="9" width="1" height="1" fill="#000000"/><rect x="11" y="9" width="1" height="1" fill="#E0E000"/><rect x="12" y="9" width="1" height="1" fill="#000000"/><rect x="1" y="10" width="1" height="1" fill="#000000"/><rect x="2" y="10" width="1" height="1" fill="#C0C0C0"/><rect x="3" y="10" width="1" height="1" fill="#FFFFFF"/><rect x="4" y="10" width="5" height="1" fill="#C0C0C0"/><rect x="9" y="10" width="1" height="1" fill="#FFFFFF"/><rect x="10" y="10" width="1" height="1" fill="#000000"/><rect x="11" y="10" width="2" height="1" fill="#E0E000"/><rect x="13" y="10" width="1" height="1" fill="#000000"/><rect x="2" y="11" width="1" height="1" fill="#000000"/><rect x="3" y="11" width="3" height="1" fill="#C0C0C0"/><rect x="6" y="11" width="1" height="1" fill="#FFFFFF"/><rect x="7" y="11" width="1" height="1" fill="#C0C0C0"/><rect x="8" y="11" width="2" height="1" fill="#FFFFFF"/><rect x="10" y="11" width="2" height="1" fill="#000000"/><rect x="12" y="11" width="2" height="1" fill="#E0E000"/><rect x="14" y="11" width="1" height="1" fill="#000000"/><rect x="3" y="12" width="2" height="1" fill="#000000"/><rect x="5" y="12" width="2" height="1" fill="#C0C0C0"/><rect x="7" y="12" width="1" height="1" fill="#808080"/><rect x="8" y="12" width="1" height="1" fill="#C0C0C0"/><rect x="9" y="12" width="1" height="1" fill="#000000"/><rect x="10" y="12" width="2" height="1" fill="#E0E000"/><rect x="12" y="12" width="1" height="1" fill="#000000"/><rect x="13" y="12" width="1" height="1" fill="#E0E000"/><rect x="14" y="12" width="1" height="1" fill="#000000"/><rect x="4" y="13" width="4" height="1" fill="#000000"/><rect x="8" y="13" width="1" height="1" fill="#FFFFFF"/><rect x="9" y="13" width="2" height="1" fill="#000000"/><rect x="11" y="13" width="2" height="1" fill="#E0E000"/><rect x="13" y="13" width="2" height="1" fill="#000000"/><rect x="6" y="14" width="8" height="1" fill="#000000"/></svg>
<svg class="a" style="left:868px;top:747px;" width="16" height="16" viewBox="0 0 16 16" shape-rendering="crispEdges"><rect x="8" y="0" width="2" height="1" fill="#000000"/><rect x="7" y="1" width="1" height="1" fill="#000000"/><rect x="8" y="1" width="1" height="1" fill="#F0F000"/><rect x="9" y="1" width="1" height="1" fill="#000000"/><rect x="6" y="2" width="1" height="1" fill="#000000"/><rect x="7" y="2" width="1" height="1" fill="#F0F000"/><rect x="8" y="2" width="1" height="1" fill="#FFFFFF"/><rect x="9" y="2" width="1" height="1" fill="#000000"/><rect x="5" y="3" width="1" height="1" fill="#000000"/><rect x="6" y="3" width="1" height="1" fill="#F0F000"/><rect x="7" y="3" width="1" height="1" fill="#FFFFFF"/><rect x="8" y="3" width="1" height="1" fill="#F0F000"/><rect x="9" y="3" width="1" height="1" fill="#000000"/><rect x="15" y="3" width="1" height="1" fill="#808080"/><rect x="4" y="4" width="1" height="1" fill="#000000"/><rect x="5" y="4" width="1" height="1" fill="#F0F000"/><rect x="6" y="4" width="1" height="1" fill="#FFFFFF"/><rect x="7" y="4" width="1" height="1" fill="#F0F000"/><rect x="8" y="4" width="1" height="1" fill="#FFFFFF"/><rect x="9" y="4" width="1" height="1" fill="#000000"/><rect x="14" y="4" width="1" height="1" fill="#808080"/><rect x="0" y="5" width="4" height="1" fill="#000000"/><rect x="4" y="5" width="1" height="1" fill="#F0F000"/><rect x="5" y="5" width="1" height="1" fill="#FFFFFF"/><rect x="6" y="5" width="1" height="1" fill="#F0F000"/><rect x="7" y="5" width="1" height="1" fill="#FFFFFF"/><rect x="8" y="5" width="1" height="1" fill="#F0F000"/><rect x="9" y="5" width="1" height="1" fill="#000000"/><rect x="10" y="5" width="1" height="1" fill="#808080"/><rect x="13" y="5" width="1" height="1" fill="#808080"/><rect x="0" y="6" width="1" height="1" fill="#000000"/><rect x="1" y="6" width="1" height="1" fill="#C0C0C0"/><rect x="2" y="6" width="1" height="1" fill="#F0F000"/><rect x="3" y="6" width="1" height="1" fill="#FFFFFF"/><rect x="4" y="6" width="1" height="1" fill="#F0F000"/><rect x="5" y="6" width="1" height="1" fill="#FFFFFF"/><rect x="6" y="6" width="1" height="1" fill="#F0F000"/><rect x="7" y="6" width="1" height="1" fill="#FFFFFF"/><rect x="8" y="6" width="1" height="1" fill="#F0F000"/><rect x="9" y="6" width="1" height="1" fill="#000000"/><rect x="10" y="6" width="1" height="1" fill="#FFFFFF"/><rect x="11" y="6" width="1" height="1" fill="#000000"/><rect x="0" y="7" width="1" height="1" fill="#000000"/><rect x="1" y="7" width="1" height="1" fill="#F0F000"/><rect x="2" y="7" width="1" height="1" fill="#FFFFFF"/><rect x="3" y="7" width="1" height="1" fill="#F0F000"/><rect x="4" y="7" width="1" height="1" fill="#FFFFFF"/><rect x="5" y="7" width="1" height="1" fill="#F0F000"/><rect x="6" y="7" width="1" height="1" fill="#FFFFFF"/><rect x="7" y="7" width="1" height="1" fill="#F0F000"/><rect x="8" y="7" width="1" height="1" fill="#FFFFFF"/><rect x="9" y="7" width="1" height="1" fill="#000000"/><rect x="10" y="7" width="1" height="1" fill="#FFFFFF"/><rect x="11" y="7" width="1" height="1" fill="#000000"/><rect x="12" y="7" width="4" height="1" fill="#808080"/><rect x="0" y="8" width="1" height="1" fill="#000000"/><rect x="1" y="8" width="1" height="1" fill="#C0C0C0"/><rect x="2" y="8" width="1" height="1" fill="#F0F000"/><rect x="3" y="8" width="1" height="1" fill="#FFFFFF"/><rect x="4" y="8" width="1" height="1" fill="#F0F000"/><rect x="5" y="8" width="1" height="1" fill="#FFFFFF"/><rect x="6" y="8" width="1" height="1" fill="#F0F000"/><rect x="7" y="8" width="1" height="1" fill="#FFFFFF"/><rect x="8" y="8" width="1" height="1" fill="#F0F000"/><rect x="9" y="8" width="1" height="1" fill="#000000"/><rect x="10" y="8" width="1" height="1" fill="#FFFFFF"/><rect x="11" y="8" width="1" height="1" fill="#000000"/><rect x="0" y="9" width="1" height="1" fill="#000000"/><rect x="1" y="9" width="1" height="1" fill="#F0F000"/><rect x="2" y="9" width="1" height="1" fill="#FFFFFF"/><rect x="3" y="9" width="1" height="1" fill="#F0F000"/><rect x="4" y="9" width="1" height="1" fill="#FFFFFF"/><rect x="5" y="9" width="1" height="1" fill="#F0F000"/><rect x="6" y="9" width="1" height="1" fill="#FFFFFF"/><rect x="7" y="9" width="1" height="1" fill="#F0F000"/><rect x="8" y="9" width="1" height="1" fill="#FFFFFF"/><rect x="9" y="9" width="1" height="1" fill="#000000"/><rect x="10" y="9" width="1" height="1" fill="#FFFFFF"/><rect x="11" y="9" width="1" height="1" fill="#000000"/><rect x="0" y="10" width="4" height="1" fill="#000000"/><rect x="4" y="10" width="1" height="1" fill="#F0F000"/><rect x="5" y="10" width="1" height="1" fill="#FFFFFF"/><rect x="6" y="10" width="1" height="1" fill="#F0F000"/><rect x="7" y="10" width="1" height="1" fill="#FFFFFF"/><rect x="8" y="10" width="1" height="1" fill="#F0F000"/><rect x="9" y="10" width="1" height="1" fill="#000000"/><rect x="10" y="10" width="1" height="1" fill="#808080"/><rect x="13" y="10" width="1" height="1" fill="#808080"/><rect x="4" y="11" width="1" height="1" fill="#000000"/><rect x="5" y="11" width="1" height="1" fill="#F0F000"/><rect x="6" y="11" width="1" height="1" fill="#FFFFFF"/><rect x="7" y="11" width="1" height="1" fill="#F0F000"/><rect x="8" y="11" width="1" height="1" fill="#FFFFFF"/><rect x="9" y="11" width="1" height="1" fill="#000000"/><rect x="14" y="11" width="1" height="1" fill="#808080"/><rect x="5" y="12" width="1" height="1" fill="#000000"/><rect x="6" y="12" width="1" height="1" fill="#F0F000"/><rect x="7" y="12" width="1" height="1" fill="#FFFFFF"/><rect x="8" y="12" width="1" height="1" fill="#F0F000"/><rect x="9" y="12" width="1" height="1" fill="#000000"/><rect x="15" y="12" width="1" height="1" fill="#808080"/><rect x="6" y="13" width="1" height="1" fill="#000000"/><rect x="7" y="13" width="1" height="1" fill="#F0F000"/><rect x="8" y="13" width="1" height="1" fill="#FFFFFF"/><rect x="9" y="13" width="1" height="1" fill="#000000"/><rect x="7" y="14" width="1" height="1" fill="#000000"/><rect x="8" y="14" width="1" height="1" fill="#F0F000"/><rect x="9" y="14" width="1" height="1" fill="#000000"/><rect x="8" y="15" width="2" height="1" fill="#000000"/></svg>
<svg class="a" style="left:886px;top:748px;" width="14" height="15" viewBox="0 0 14 15" shape-rendering="crispEdges"><path d="M4 14C1 12 0 7 3 4 6 1 11 0 12 3 13 7 12 11 10 13 8 14 5 14 4 11 3 8 8 8 8 9" fill="none" stroke="#E00000" stroke-width="1.8" shape-rendering="auto"/></svg>
<svg class="a" style="left:903px;top:747px;" width="16" height="14" viewBox="0 0 16 14" shape-rendering="crispEdges"><rect x="2" y="0" width="3" height="1" fill="#FF2020"/><rect x="6" y="0" width="8" height="1" fill="#000000"/><rect x="1" y="1" width="4" height="1" fill="#FF2020"/><rect x="5" y="1" width="1" height="1" fill="#000000"/><rect x="6" y="1" width="8" height="1" fill="#60C0FF"/><rect x="14" y="1" width="1" height="1" fill="#000000"/><rect x="0" y="2" width="5" height="1" fill="#FF2020"/><rect x="5" y="2" width="1" height="1" fill="#000000"/><rect x="6" y="2" width="1" height="1" fill="#60C0FF"/><rect x="7" y="2" width="6" height="1" fill="#2080E0"/><rect x="13" y="2" width="1" height="1" fill="#60C0FF"/><rect x="14" y="2" width="1" height="1" fill="#000000"/><rect x="0" y="3" width="1" height="1" fill="#FF2020"/><rect x="1" y="3" width="1" height="1" fill="#FF60FF"/><rect x="2" y="3" width="1" height="1" fill="#FFFFFF"/><rect x="3" y="3" width="1" height="1" fill="#FF60FF"/><rect x="4" y="3" width="6" height="1" fill="#F09040"/><rect x="10" y="3" width="1" height="1" fill="#FF2020"/><rect x="11" y="3" width="1" height="1" fill="#000000"/><rect x="12" y="3" width="1" height="1" fill="#2080E0"/><rect x="13" y="3" width="1" height="1" fill="#60C0FF"/><rect x="14" y="3" width="1" height="1" fill="#000000"/><rect x="0" y="4" width="1" height="1" fill="#FF2020"/><rect x="1" y="4" width="1" height="1" fill="#FFFFFF"/><rect x="2" y="4" width="1" height="1" fill="#FF60FF"/><rect x="3" y="4" width="1" height="1" fill="#FFFFFF"/><rect x="4" y="4" width="1" height="1" fill="#F09040"/><rect x="5" y="4" width="1" height="1" fill="#FFFF00"/><rect x="6" y="4" width="4" height="1" fill="#F09040"/><rect x="10" y="4" width="1" height="1" fill="#FF2020"/><rect x="11" y="4" width="1" height="1" fill="#000000"/><rect x="12" y="4" width="1" height="1" fill="#2080E0"/><rect x="13" y="4" width="1" height="1" fill="#60C0FF"/><rect x="14" y="4" width="1" height="1" fill="#000000"/><rect x="0" y="5" width="1" height="1" fill="#FF2020"/><rect x="1" y="5" width="1" height="1" fill="#FF60FF"/><rect x="2" y="5" width="1" height="1" fill="#FFFFFF"/><rect x="3" y="5" width="1" height="1" fill="#F09040"/><rect x="4" y="5" width="1" height="1" fill="#FFFF00"/><rect x="5" y="5" width="5" height="1" fill="#F09040"/><rect x="10" y="5" width="1" height="1" fill="#FF2020"/><rect x="11" y="5" width="1" height="1" fill="#000000"/><rect x="12" y="5" width="1" height="1" fill="#2080E0"/><rect x="13" y="5" width="1" height="1" fill="#60C0FF"/><rect x="14" y="5" width="1" height="1" fill="#000000"/><rect x="0" y="6" width="1" height="1" fill="#FF2020"/><rect x="1" y="6" width="1" height="1" fill="#FFFFFF"/><rect x="2" y="6" width="1" height="1" fill="#F09040"/><rect x="3" y="6" width="1" height="1" fill="#FFFF00"/><rect x="4" y="6" width="6" height="1" fill="#F09040"/><rect x="10" y="6" width="1" height="1" fill="#FF2020"/><rect x="11" y="6" width="1" height="1" fill="#000000"/><rect x="12" y="6" width="1" height="1" fill="#2080E0"/><rect x="13" y="6" width="1" height="1" fill="#60C0FF"/><rect x="14" y="6" width="1" height="1" fill="#000000"/><rect x="0" y="7" width="1" height="1" fill="#FF2020"/><rect x="1" y="7" width="1" height="1" fill="#FF60FF"/><rect x="2" y="7" width="8" height="1" fill="#F09040"/><rect x="10" y="7" width="1" height="1" fill="#FF2020"/><rect x="11" y="7" width="1" height="1" fill="#000000"/><rect x="12" y="7" width="1" height="1" fill="#2080E0"/><rect x="13" y="7" width="1" height="1" fill="#60C0FF"/><rect x="14" y="7" width="1" height="1" fill="#000000"/><rect x="0" y="8" width="11" height="1" fill="#FF2020"/><rect x="11" y="8" width="1" height="1" fill="#000000"/><rect x="12" y="8" width="1" height="1" fill="#2080E0"/><rect x="13" y="8" width="1" height="1" fill="#60C0FF"/><rect x="14" y="8" width="1" height="1" fill="#000000"/><rect x="0" y="9" width="5" height="1" fill="#000000"/><rect x="5" y="9" width="1" height="1" fill="#60C0FF"/><rect x="6" y="9" width="6" height="1" fill="#2080E0"/><rect x="12" y="9" width="2" height="1" fill="#60C0FF"/><rect x="14" y="9" width="1" height="1" fill="#000000"/><rect x="5" y="10" width="10" height="1" fill="#000000"/><rect x="8" y="11" width="1" height="1" fill="#000000"/><rect x="9" y="11" width="1" height="1" fill="#000080"/><rect x="10" y="11" width="1" height="1" fill="#000000"/><rect x="6" y="12" width="1" height="1" fill="#000000"/><rect x="7" y="12" width="5" height="1" fill="#2080E0"/><rect x="12" y="12" width="1" height="1" fill="#000000"/><rect x="6" y="13" width="1" height="1" fill="#000000"/><rect x="7" y="13" width="1" height="1" fill="#2080E0"/><rect x="8" y="13" width="1" height="1" fill="#000000"/><rect x="9" y="13" width="1" height="1" fill="#2080E0"/><rect x="10" y="13" width="1" height="1" fill="#000000"/><rect x="11" y="13" width="1" height="1" fill="#2080E0"/><rect x="12" y="13" width="1" height="1" fill="#000000"/></svg>
<svg class="a" style="left:921px;top:747px;" width="16" height="14" viewBox="0 0 16 14" shape-rendering="crispEdges"><rect x="6" y="0" width="1" height="1" fill="#000000"/><rect x="7" y="0" width="3" height="1" fill="#3090E0"/><rect x="10" y="0" width="1" height="1" fill="#000000"/><rect x="5" y="1" width="1" height="1" fill="#3090E0"/><rect x="6" y="1" width="1" height="1" fill="#40C040"/><rect x="7" y="1" width="5" height="1" fill="#3090E0"/><rect x="5" y="2" width="2" height="1" fill="#3090E0"/><rect x="7" y="2" width="1" height="1" fill="#40C040"/><rect x="8" y="2" width="3" height="1" fill="#3090E0"/><rect x="11" y="2" width="1" height="1" fill="#40C040"/><rect x="5" y="3" width="4" height="1" fill="#3090E0"/><rect x="9" y="3" width="1" height="1" fill="#40C040"/><rect x="10" y="3" width="2" height="1" fill="#3090E0"/><rect x="6" y="4" width="5" height="1" fill="#3090E0"/><rect x="3" y="5" width="4" height="1" fill="#D02010"/><rect x="8" y="5" width="1" height="1" fill="#3090E0"/><rect x="9" y="5" width="1" height="1" fill="#40C040"/><rect x="2" y="6" width="1" height="1" fill="#D02010"/><rect x="3" y="6" width="4" height="1" fill="#FFFFFF"/><rect x="7" y="6" width="1" height="1" fill="#D02010"/><rect x="8" y="6" width="2" height="1" fill="#40C040"/><rect x="10" y="6" width="1" height="1" fill="#3090E0"/><rect x="12" y="6" width="2" height="1" fill="#F08030"/><rect x="1" y="7" width="1" height="1" fill="#D02010"/><rect x="2" y="7" width="2" height="1" fill="#FFFFFF"/><rect x="4" y="7" width="1" height="1" fill="#000000"/><rect x="5" y="7" width="3" height="1" fill="#FFFFFF"/><rect x="8" y="7" width="1" height="1" fill="#D02010"/><rect x="9" y="7" width="1" height="1" fill="#40C040"/><rect x="10" y="7" width="1" height="1" fill="#3090E0"/><rect x="11" y="7" width="4" height="1" fill="#F08030"/><rect x="1" y="8" width="1" height="1" fill="#D02010"/><rect x="2" y="8" width="2" height="1" fill="#FFFFFF"/><rect x="4" y="8" width="1" height="1" fill="#000000"/><rect x="5" y="8" width="3" height="1" fill="#FFFFFF"/><rect x="8" y="8" width="1" height="1" fill="#D02010"/><rect x="9" y="8" width="1" height="1" fill="#3090E0"/><rect x="10" y="8" width="1" height="1" fill="#40C040"/><rect x="11" y="8" width="4" height="1" fill="#F08030"/><rect x="1" y="9" width="1" height="1" fill="#D02010"/><rect x="2" y="9" width="2" height="1" fill="#FFFFFF"/><rect x="4" y="9" width="3" height="1" fill="#000000"/><rect x="7" y="9" width="1" height="1" fill="#FFFFFF"/><rect x="8" y="9" width="1" height="1" fill="#D02010"/><rect x="9" y="9" width="2" height="1" fill="#40C040"/><rect x="11" y="9" width="1" height="1" fill="#3090E0"/><rect x="12" y="9" width="3" height="1" fill="#F08030"/><rect x="1" y="10" width="1" height="1" fill="#D02010"/><rect x="2" y="10" width="6" height="1" fill="#FFFFFF"/><rect x="8" y="10" width="1" height="1" fill="#D02010"/><rect x="9" y="10" width="2" height="1" fill="#3090E0"/><rect x="11" y="10" width="1" height="1" fill="#40C040"/><rect x="12" y="10" width="3" height="1" fill="#F08030"/><rect x="2" y="11" width="1" height="1" fill="#D02010"/><rect x="3" y="11" width="4" height="1" fill="#FFFFFF"/><rect x="7" y="11" width="1" height="1" fill="#D02010"/><rect x="8" y="11" width="1" height="1" fill="#40C040"/><rect x="9" y="11" width="1" height="1" fill="#3090E0"/><rect x="10" y="11" width="1" height="1" fill="#40C040"/><rect x="11" y="11" width="1" height="1" fill="#3090E0"/><rect x="12" y="11" width="2" height="1" fill="#F08030"/><rect x="3" y="12" width="4" height="1" fill="#D02010"/><rect x="7" y="12" width="1" height="1" fill="#40C040"/><rect x="8" y="12" width="2" height="1" fill="#3090E0"/><rect x="10" y="12" width="1" height="1" fill="#40C040"/><rect x="11" y="12" width="1" height="1" fill="#3090E0"/><rect x="4" y="13" width="1" height="1" fill="#40C040"/><rect x="5" y="13" width="1" height="1" fill="#3090E0"/><rect x="6" y="13" width="1" height="1" fill="#40C040"/><rect x="7" y="13" width="2" height="1" fill="#3090E0"/><rect x="9" y="13" width="1" height="1" fill="#40C040"/><rect x="10" y="13" width="1" height="1" fill="#3090E0"/><rect x="11" y="13" width="1" height="1" fill="#40C040"/><rect x="12" y="13" width="1" height="1" fill="#3090E0"/></svg>
<svg class="a" style="left:939px;top:747px;" width="16" height="16" viewBox="0 0 16 16" shape-rendering="crispEdges"><g shape-rendering="auto"><circle cx="8" cy="8" r="7.2" fill="#fff" stroke="#202020" stroke-width="1.6"/><text x="8" y="12.3" font-family="Liberation Sans" font-weight="bold" font-size="12" text-anchor="middle" fill="#000080">G</text></g></svg>
</body></html>
